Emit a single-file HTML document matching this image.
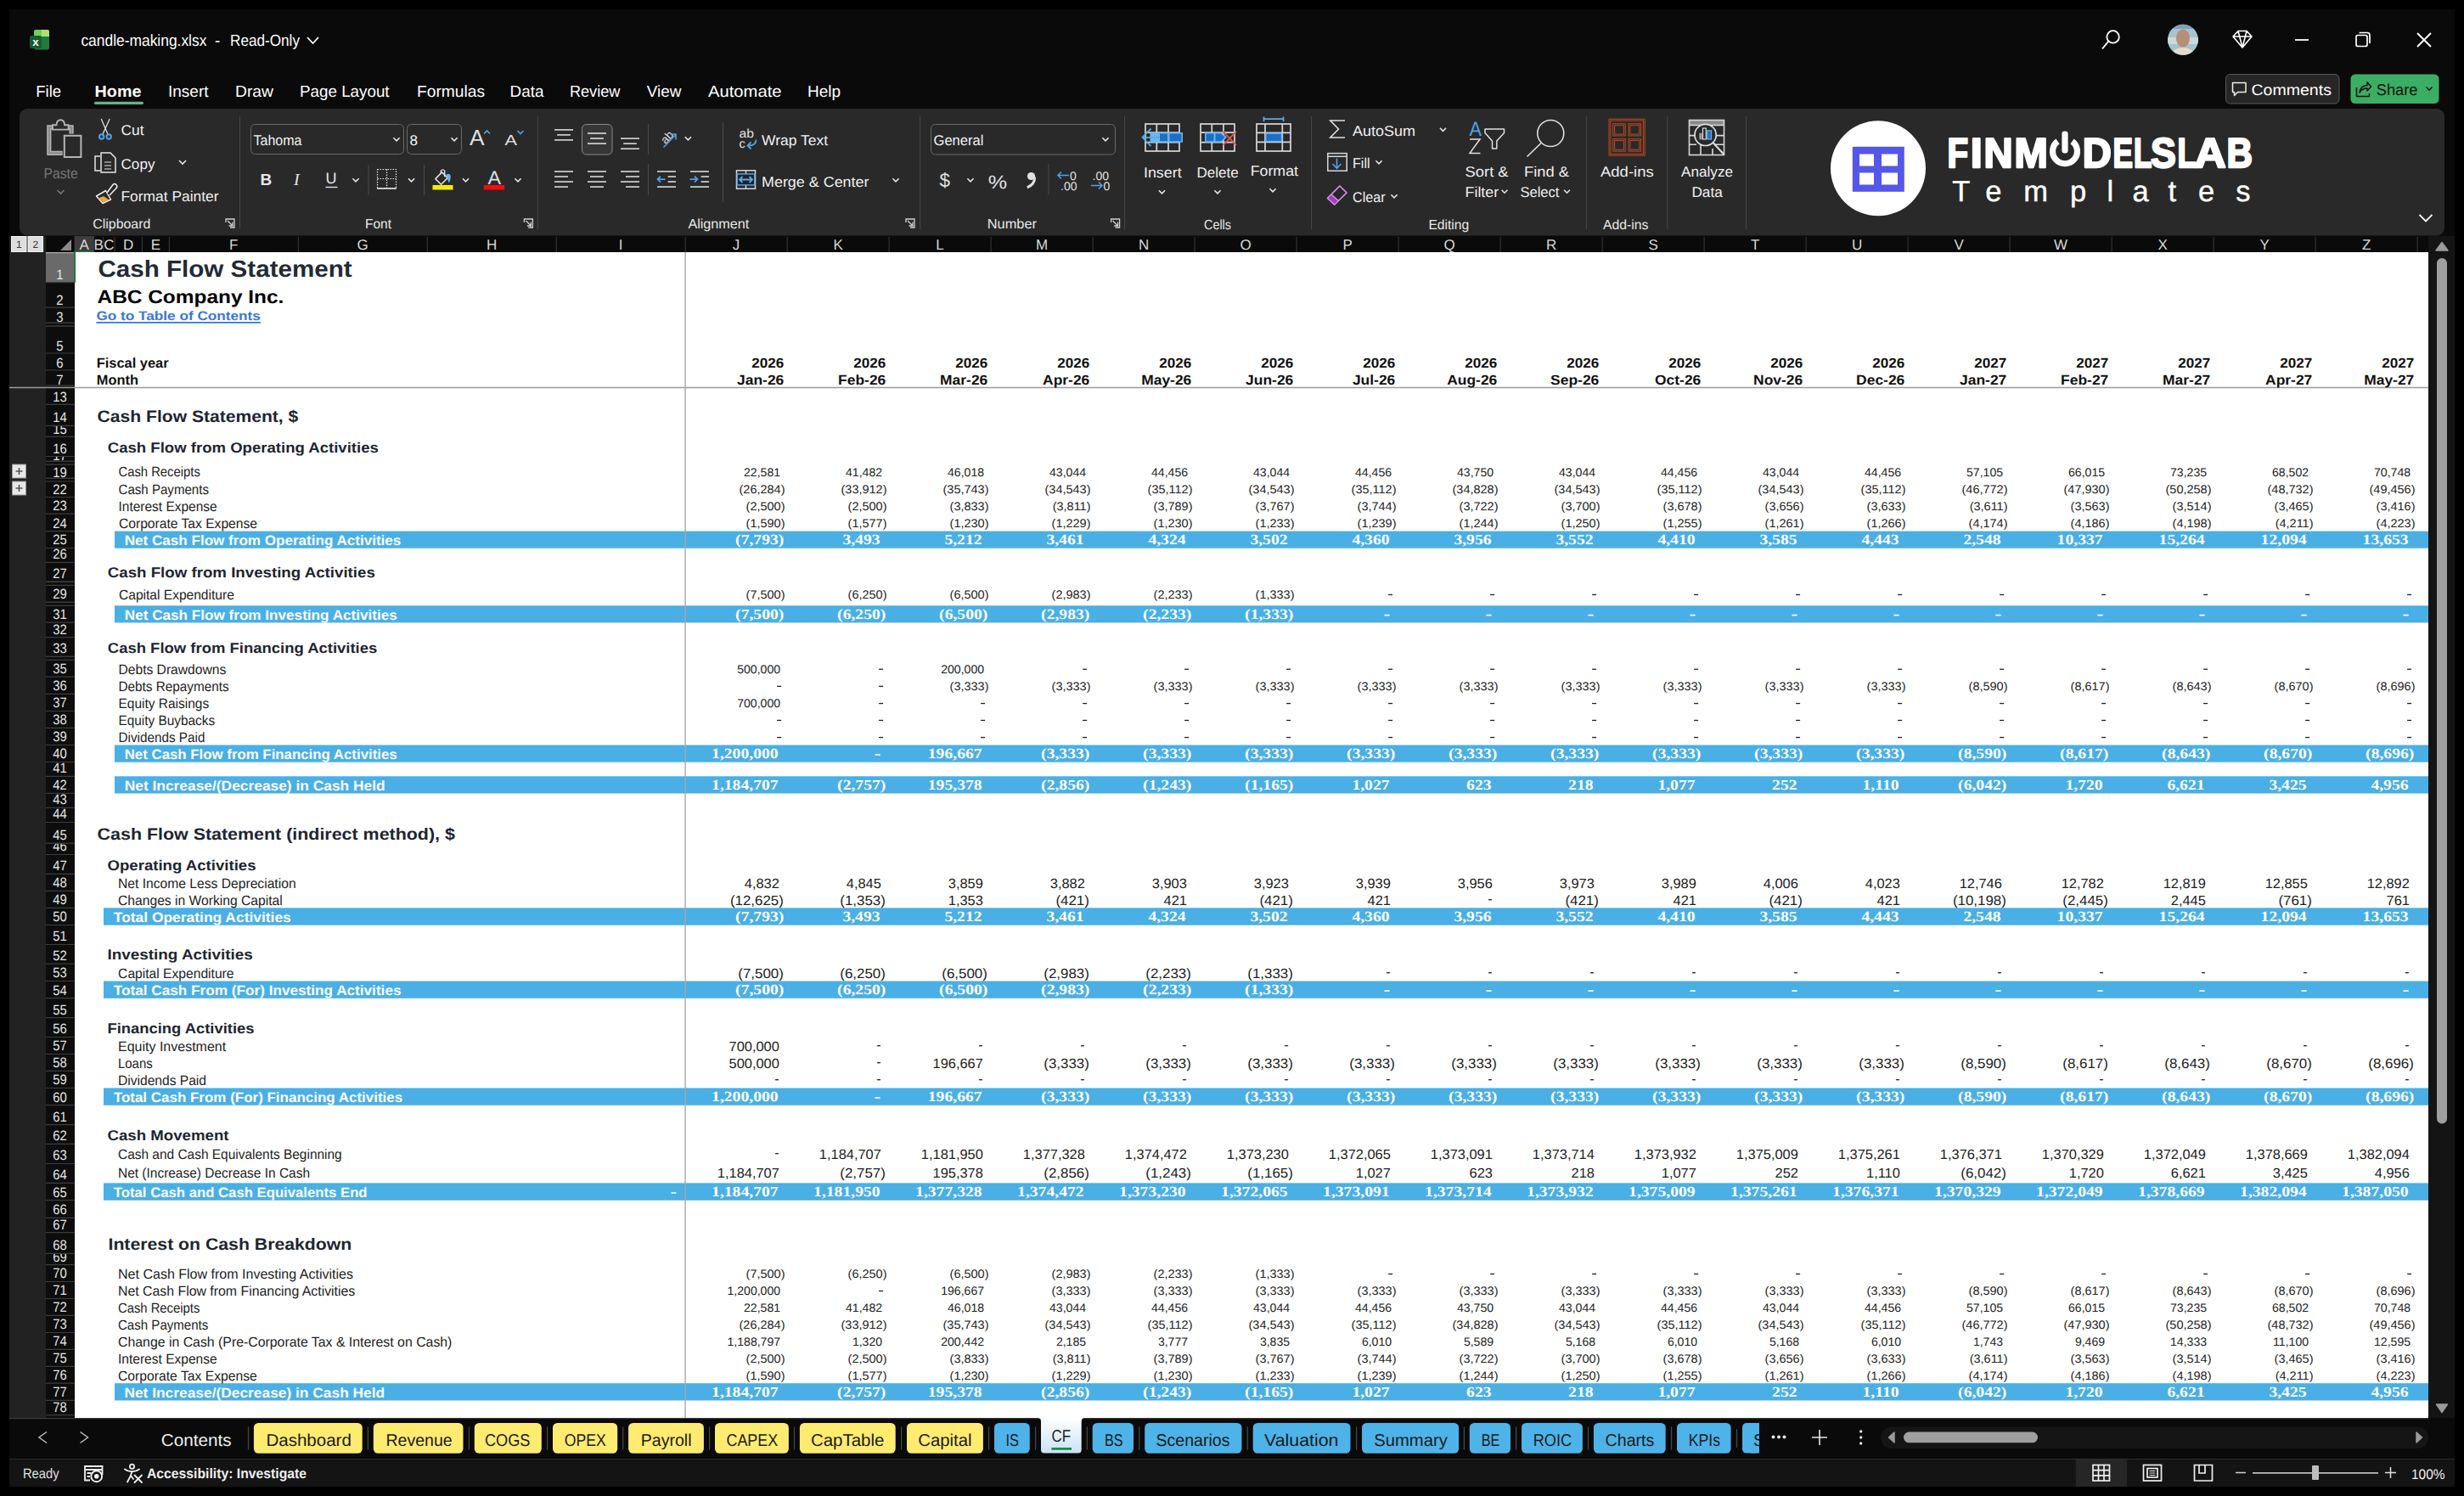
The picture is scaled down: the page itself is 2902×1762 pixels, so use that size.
<!DOCTYPE html>
<html><head><meta charset="utf-8"><title>candle-making.xlsx</title>
<style>html,body{margin:0;padding:0;background:#000;}body{width:2902px;height:1762px;overflow:hidden;}svg{display:block;}</style>
</head><body>
<svg width="2902" height="1762" viewBox="0 0 2902 1762" text-rendering="geometricPrecision">
<rect x="0" y="0" width="2902" height="1762" fill="#000"/>
<rect x="11" y="11" width="2880" height="1740" fill="#0a0a0a"/>
<g><rect x="40" y="35" width="18" height="23.5" rx="2.2" fill="#217a3c"/><path d="M42.2 35 L49 35 L49 43 L40 43 L40 37.2 Q40 35 42.2 35 Z" fill="#72cf58"/><path d="M49 35 L55.8 35 Q58 35 58 37.2 L58 43 L49 43 Z" fill="#b2e16a"/><rect x="35" y="42" width="14" height="15" rx="2.2" fill="#185c30"/><text x="42" y="54.2" font-family="'Liberation Sans'" font-size="13.5" font-weight="700" fill="#fff" text-anchor="middle">x</text></g>
<text x="95.4" y="54.0" font-family="'Liberation Sans', sans-serif" font-size="19" fill="#fff" text-anchor="start" textLength="148.0" lengthAdjust="spacingAndGlyphs">candle-making.xlsx</text>
<text x="253.0" y="54.0" font-family="'Liberation Sans', sans-serif" font-size="19" fill="#fff" text-anchor="start">-</text>
<text x="271.0" y="54.0" font-family="'Liberation Sans', sans-serif" font-size="19" fill="#fff" text-anchor="start" textLength="82.0" lengthAdjust="spacingAndGlyphs">Read-Only</text>
<path d="M362 44 L368.5 51 L375 44" stroke="#fff" stroke-width="1.8" fill="none"/>
<circle cx="2488.6" cy="43.4" r="7.2" stroke="#fff" stroke-width="1.8" fill="none"/><path d="M2483.3 48.7 L2476 57.5" stroke="#fff" stroke-width="1.9" fill="none"/>
<clipPath id="avc"><circle cx="2571" cy="46.8" r="18"/></clipPath><g clip-path="url(#avc)"><rect x="2550" y="25" width="42" height="44" fill="#a8c3cf"/><rect x="2550" y="25" width="42" height="9" fill="#7f9fc0"/><rect x="2550" y="44" width="42" height="8" fill="#c9d9dd"/><ellipse cx="2571" cy="45" rx="8" ry="10.5" fill="#b78e78"/><path d="M2555 69 Q2556 57 2571 56 Q2586 57 2587 69 Z" fill="#e3dccf"/></g>
<path d="M2630 43 L2636 36.5 L2646 36.5 L2652 43 L2641 56 Z M2630 43 L2652 43 M2636 36.5 L2641 56 L2646 36.5" stroke="#fff" stroke-width="1.6" fill="none" stroke-linejoin="round"/>
<path d="M2703 47 L2719 47" stroke="#fff" stroke-width="1.8"/>
<rect x="2775" y="41.5" width="13" height="13" rx="2" stroke="#fff" stroke-width="1.7" fill="none"/><path d="M2778.5 38.5 L2788 38.5 Q2791 38.5 2791 41.5 L2791 51" stroke="#fff" stroke-width="1.7" fill="none"/>
<path d="M2847 39 L2863 55 M2863 39 L2847 55" stroke="#fff" stroke-width="1.9"/>
<text x="42.2" y="114.0" font-family="'Liberation Sans', sans-serif" font-size="19" fill="#fff" text-anchor="start" textLength="30.0" lengthAdjust="spacingAndGlyphs">File</text>
<text x="111.6" y="114.0" font-family="'Liberation Sans', sans-serif" font-size="19" font-weight="700" fill="#fff" text-anchor="start" textLength="54.8" lengthAdjust="spacingAndGlyphs">Home</text>
<text x="198.0" y="114.0" font-family="'Liberation Sans', sans-serif" font-size="19" fill="#fff" text-anchor="start" textLength="47.5" lengthAdjust="spacingAndGlyphs">Insert</text>
<text x="277.0" y="114.0" font-family="'Liberation Sans', sans-serif" font-size="19" fill="#fff" text-anchor="start" textLength="45.0" lengthAdjust="spacingAndGlyphs">Draw</text>
<text x="353.0" y="114.0" font-family="'Liberation Sans', sans-serif" font-size="19" fill="#fff" text-anchor="start" textLength="105.6" lengthAdjust="spacingAndGlyphs">Page Layout</text>
<text x="491.0" y="114.0" font-family="'Liberation Sans', sans-serif" font-size="19" fill="#fff" text-anchor="start" textLength="80.0" lengthAdjust="spacingAndGlyphs">Formulas</text>
<text x="600.6" y="114.0" font-family="'Liberation Sans', sans-serif" font-size="19" fill="#fff" text-anchor="start" textLength="39.8" lengthAdjust="spacingAndGlyphs">Data</text>
<text x="670.9" y="114.0" font-family="'Liberation Sans', sans-serif" font-size="19" fill="#fff" text-anchor="start" textLength="59.6" lengthAdjust="spacingAndGlyphs">Review</text>
<text x="761.8" y="114.0" font-family="'Liberation Sans', sans-serif" font-size="19" fill="#fff" text-anchor="start" textLength="40.6" lengthAdjust="spacingAndGlyphs">View</text>
<text x="834.0" y="114.0" font-family="'Liberation Sans', sans-serif" font-size="19" fill="#fff" text-anchor="start" textLength="86.5" lengthAdjust="spacingAndGlyphs">Automate</text>
<text x="951.0" y="114.0" font-family="'Liberation Sans', sans-serif" font-size="19" fill="#fff" text-anchor="start" textLength="39.0" lengthAdjust="spacingAndGlyphs">Help</text>
<rect x="111" y="119.8" width="58" height="3.2" rx="1.6" fill="#5cb88a"/>
<rect x="2621.5" y="87.5" width="133.5" height="34.5" rx="5" fill="#262626" stroke="#5a5a5a" stroke-width="1"/>
<path d="M2629.5 97.5 L2645 97.5 L2645 108.5 L2635.5 108.5 L2631.5 112.5 L2631.5 108.5 L2629.5 108.5 Z" stroke="#f0f0f0" stroke-width="1.5" fill="none" stroke-linejoin="round"/>
<text x="2651.5" y="112.0" font-family="'Liberation Sans', sans-serif" font-size="18" fill="#fff" text-anchor="start" textLength="94.4" lengthAdjust="spacingAndGlyphs">Comments</text>
<rect x="2768.5" y="87.5" width="104" height="34.5" rx="5.5" fill="#3aaf64"/>
<path d="M2775.5 103 L2775.5 113.5 L2790.5 113.5 L2790.5 110 M2779 109 Q2780 101 2788 100.5 L2788 96.8 L2792.5 102 L2788 107 L2788 104 Q2782 104 2779 109 Z" stroke="#111" stroke-width="1.5" fill="none" stroke-linejoin="round"/>
<text x="2798.7" y="112.0" font-family="'Liberation Sans', sans-serif" font-size="18.5" fill="#111" text-anchor="start" textLength="48.8" lengthAdjust="spacingAndGlyphs">Share</text>
<path d="M2857.5 102.5 L2861 106 L2864.5 102.5" stroke="#111" stroke-width="1.6" fill="none"/>
<rect x="23" y="128" width="2856" height="149.5" rx="9" fill="#292929"/>
<path d="M73.7 180.3 L57.8 180.3 L57.8 149.8 L84.1 149.8 L84.1 157.5" stroke="#b4b4b4" stroke-width="5.2" fill="none"/><path d="M73.7 180.3 L57.8 180.3 L57.8 149.8 L84.1 149.8 L84.1 157.5" stroke="#8a8a8a" stroke-width="2.2" fill="none"/><path d="M62 152.6 L62 147.2 L66.5 147.2 Q66.8 141.2 71.3 141.2 Q75.8 141.2 76.1 147.2 L80.6 147.2 L80.6 152.6 Z" stroke="#b4b4b4" stroke-width="1.9" fill="#292929"/><rect x="75.8" y="159.8" width="19.6" height="25.2" stroke="#b4b4b4" stroke-width="2" fill="#292929"/>
<text x="51.5" y="210.0" font-family="'Liberation Sans', sans-serif" font-size="17" fill="#777" text-anchor="start" textLength="40.2" lengthAdjust="spacingAndGlyphs">Paste</text>
<path d="M67.5 224.0 L71.5 228.0 L75.5 224.0" stroke="#777" stroke-width="1.6" fill="none"/>
<g stroke="#e0e0e0" stroke-width="1.3" fill="none"><path d="M119.2 140 L127 158 M129.2 140 L121 158"/></g><g stroke="#4ea3e6" stroke-width="1.9" fill="#1d3550"><circle cx="119.7" cy="161" r="2.7"/><circle cx="128.2" cy="161" r="2.7"/></g>
<text x="142.5" y="159.0" font-family="'Liberation Sans', sans-serif" font-size="17" fill="#f0f0f0" text-anchor="start" textLength="27.0" lengthAdjust="spacingAndGlyphs">Cut</text>
<g stroke="#e6e6e6" stroke-width="1.5" fill="none"><path d="M118 184 L112 184 L112 201 L118 201"/><path d="M119 180 L130 180 L136 186 L136 203 L119 203 Z"/><path d="M123 191 L131 191 M123 195 L131 195 M123 199 L131 199" stroke-width="1.2"/></g>
<text x="142.5" y="198.5" font-family="'Liberation Sans', sans-serif" font-size="17" fill="#f0f0f0" text-anchor="start" textLength="40.0" lengthAdjust="spacingAndGlyphs">Copy</text>
<path d="M211 189.0 L215 193.0 L219 189.0" stroke="#e6e6e6" stroke-width="1.6" fill="none"/>
<path d="M113.5 231 L124.5 224.5 L130.5 235 L121 239.5 Z" fill="#292929" stroke="#f0f0f0" stroke-width="1.5" stroke-linejoin="round"/><path d="M115.5 233.5 L122 231 L128.5 235.5 L121.5 238.5 Z" fill="#e8a83a"/><path d="M126 227 L133 217.5 Q135 215.5 136.8 217.5 L137.5 218.5 Q138.5 220.3 136.6 222 L129 230" stroke="#f0f0f0" stroke-width="1.5" fill="#292929" stroke-linejoin="round"/>
<text x="142.5" y="237.0" font-family="'Liberation Sans', sans-serif" font-size="17" fill="#f0f0f0" text-anchor="start" textLength="115.0" lengthAdjust="spacingAndGlyphs">Format Painter</text>
<text x="109.3" y="269.0" font-family="'Liberation Sans', sans-serif" font-size="16" fill="#e8e8e8" text-anchor="start" textLength="68.0" lengthAdjust="spacingAndGlyphs">Clipboard</text>
<path d="M265 257 L277 257 L277 269 L265 269 Z" stroke="none" fill="none"/><path d="M266 262 L266 258 L276 258 L276 268 L271 268" stroke="#d0d0d0" stroke-width="1.3" fill="none"/><path d="M268 260 L274 266 M274 261.5 L274 266 L269.5 266" stroke="#d0d0d0" stroke-width="1.3" fill="none"/>
<path d="M282.5 137 L282.5 270" stroke="#474747" stroke-width="1"/>
<rect x="295.5" y="146.5" width="180" height="35" rx="5" fill="#292929" stroke="#6a6a6a" stroke-width="1"/>
<text x="298.5" y="170.5" font-family="'Liberation Sans', sans-serif" font-size="17" fill="#f2f2f2" text-anchor="start" textLength="57.0" lengthAdjust="spacingAndGlyphs">Tahoma</text>
<path d="M463.4 162.2 L467 165.8 L470.6 162.2" stroke="#e6e6e6" stroke-width="1.6" fill="none"/>
<rect x="479.5" y="146.5" width="64" height="35" rx="5" fill="#292929" stroke="#6a6a6a" stroke-width="1"/>
<text x="482.5" y="170.5" font-family="'Liberation Sans', sans-serif" font-size="17" fill="#f2f2f2" text-anchor="start">8</text>
<path d="M531.4 162.2 L535 165.8 L538.6 162.2" stroke="#e6e6e6" stroke-width="1.6" fill="none"/>
<text x="553.0" y="171.3" font-family="'Liberation Sans', sans-serif" font-size="26" fill="#e0e0e0" text-anchor="start" textLength="17.5" lengthAdjust="spacingAndGlyphs">A</text>
<path d="M570 157.5 L573.5 154 L577 157.5" stroke="#4ea3e6" stroke-width="1.7" fill="none"/>
<text x="594.5" y="171.3" font-family="'Liberation Sans', sans-serif" font-size="17.5" fill="#e0e0e0" text-anchor="start" textLength="14.5" lengthAdjust="spacingAndGlyphs">A</text>
<path d="M609.5 154 L613 157.5 L616.5 154" stroke="#4ea3e6" stroke-width="1.7" fill="none"/>
<text x="306.5" y="218.0" font-family="'Liberation Sans', sans-serif" font-size="19" font-weight="700" fill="#e6e6e6" text-anchor="start">B</text>
<text x="346" y="218" font-family="'Liberation Serif', serif" font-size="20" font-style="italic" fill="#e6e6e6">I</text>
<text x="383.5" y="216.0" font-family="'Liberation Sans', sans-serif" font-size="18" fill="#e6e6e6" text-anchor="start">U</text>
<path d="M383.5 220.5 L397.5 220.5" stroke="#e6e6e6" stroke-width="1.4"/>
<path d="M415.4 210.2 L419 213.8 L422.6 210.2" stroke="#e6e6e6" stroke-width="1.6" fill="none"/>
<path d="M434 194 L434 230" stroke="#4a4a4a" stroke-width="1"/>
<g stroke="#e6e6e6" stroke-width="1.2" fill="none" stroke-dasharray="1.5 1.5"><rect x="444.5" y="199.5" width="22" height="22"/><path d="M455.5 199.5 L455.5 221.5 M444.5 210.5 L466.5 210.5"/></g><path d="M444 222 L467 222" stroke="#e6e6e6" stroke-width="1.6"/>
<path d="M480.9 210.2 L484.5 213.8 L488.1 210.2" stroke="#e6e6e6" stroke-width="1.6" fill="none"/>
<path d="M499.5 194 L499.5 230" stroke="#4a4a4a" stroke-width="1"/>
<path d="M512.8 210.6 L520.5 202.9 L527.2 209.6 L519.5 217.3 Z" stroke="#e0e0e0" stroke-width="1.5" fill="none" stroke-linejoin="round"/><path d="M519.3 204.2 L519.3 201.2 Q521.5 198.6 523.7 201.2 L523.7 208.3" stroke="#e0e0e0" stroke-width="1.4" fill="none"/><path d="M525.3 206.2 Q528.8 203.2 530.6 206.8 Q531.2 211.8 528.6 215.6 Q527.4 210.8 525.3 206.2 Z" fill="#6fb5ec"/><rect x="509.5" y="218" width="24" height="5.5" fill="#f2ee00"/>
<path d="M544.9 210.2 L548.5 213.8 L552.1 210.2" stroke="#e6e6e6" stroke-width="1.6" fill="none"/>
<text x="574.5" y="216.7" font-family="'Liberation Sans', sans-serif" font-size="22.5" fill="#e0e0e0" text-anchor="start" textLength="15.5" lengthAdjust="spacingAndGlyphs">A</text>
<rect x="569.8" y="218" width="24.4" height="5.5" fill="#f30d0d"/>
<path d="M606.4 210.2 L610 213.8 L613.6 210.2" stroke="#e6e6e6" stroke-width="1.6" fill="none"/>
<text x="430.0" y="269.0" font-family="'Liberation Sans', sans-serif" font-size="16" fill="#e8e8e8" text-anchor="start" textLength="31.0" lengthAdjust="spacingAndGlyphs">Font</text>
<path d="M616.4 257 L628.4 257 L628.4 269 L616.4 269 Z" stroke="none" fill="none"/><path d="M617.4 262 L617.4 258 L627.4 258 L627.4 268 L622.4 268" stroke="#d0d0d0" stroke-width="1.3" fill="none"/><path d="M619.4 260 L625.4 266 M625.4 261.5 L625.4 266 L620.9 266" stroke="#d0d0d0" stroke-width="1.3" fill="none"/>
<path d="M633.4 137 L633.4 270" stroke="#474747" stroke-width="1"/>
<path d="M653.0 152.9 L675.0 152.9" stroke="#e6e6e6" stroke-width="1.5"/>
<path d="M656.2 158.9 L671.8000000000001 158.9" stroke="#e6e6e6" stroke-width="1.5"/>
<path d="M653.0 164.9 L675.0 164.9" stroke="#e6e6e6" stroke-width="1.5"/>
<rect x="685.5" y="146.5" width="35.5" height="35.5" rx="5" fill="#363636" stroke="#8a8a8a" stroke-width="1"/>
<path d="M692.0 157.0 L714.0 157.0" stroke="#e6e6e6" stroke-width="1.5"/>
<path d="M695.2 163.05 L710.8000000000001 163.05" stroke="#e6e6e6" stroke-width="1.5"/>
<path d="M692.0 169.1 L714.0 169.1" stroke="#e6e6e6" stroke-width="1.5"/>
<path d="M731.0 163.1 L753.0 163.1" stroke="#e6e6e6" stroke-width="1.5"/>
<path d="M734.2 169.15 L749.8000000000001 169.15" stroke="#e6e6e6" stroke-width="1.5"/>
<path d="M731.0 175.2 L753.0 175.2" stroke="#e6e6e6" stroke-width="1.5"/>
<path d="M763.5 146 L763.5 182" stroke="#4a4a4a" stroke-width="1"/>
<text x="786" y="166" font-family="'Liberation Sans'" font-size="13.5" fill="#e0e0e0" text-anchor="middle" transform="rotate(-48 786 162)">ab</text><path d="M781.5 173.5 L796 158.5 M789.5 158 L796 158 L796 164.5" stroke="#4ea3e6" stroke-width="1.6" fill="none"/>
<path d="M806.8 161.2 L810.4 164.8 L814.0 161.2" stroke="#e6e6e6" stroke-width="1.6" fill="none"/>
<path d="M851.6 144 L851.6 238" stroke="#4a4a4a" stroke-width="1"/>
<text x="870.5" y="162.3" font-family="'Liberation Sans'" font-size="14.5" fill="#e0e0e0" textLength="17.5" lengthAdjust="spacingAndGlyphs">ab</text><text x="870.5" y="174" font-family="'Liberation Sans'" font-size="14.5" fill="#e0e0e0">c</text><path d="M890.5 164.5 Q890.5 171.5 882 171.5 L880.5 171.5 M884.5 167.5 L880.5 171.5 L884.5 175.5" stroke="#4ea3e6" stroke-width="1.8" fill="none"/>
<text x="897.0" y="171.0" font-family="'Liberation Sans', sans-serif" font-size="17" fill="#f0f0f0" text-anchor="start" textLength="78.0" lengthAdjust="spacingAndGlyphs">Wrap Text</text>
<path d="M653 202.0 L675 202.0" stroke="#e6e6e6" stroke-width="1.5"/>
<path d="M653 208.03 L669 208.03" stroke="#e6e6e6" stroke-width="1.5"/>
<path d="M653 214.06 L675 214.06" stroke="#e6e6e6" stroke-width="1.5"/>
<path d="M653 220.09 L669 220.09" stroke="#e6e6e6" stroke-width="1.5"/>
<path d="M692.0 202.0 L714.0 202.0" stroke="#e6e6e6" stroke-width="1.5"/>
<path d="M695.0 208.03 L711.0 208.03" stroke="#e6e6e6" stroke-width="1.5"/>
<path d="M692.0 214.06 L714.0 214.06" stroke="#e6e6e6" stroke-width="1.5"/>
<path d="M695.0 220.09 L711.0 220.09" stroke="#e6e6e6" stroke-width="1.5"/>
<path d="M731 202.0 L753 202.0" stroke="#e6e6e6" stroke-width="1.5"/>
<path d="M737 208.03 L753 208.03" stroke="#e6e6e6" stroke-width="1.5"/>
<path d="M731 214.06 L753 214.06" stroke="#e6e6e6" stroke-width="1.5"/>
<path d="M737 220.09 L753 220.09" stroke="#e6e6e6" stroke-width="1.5"/>
<path d="M763.5 193 L763.5 230" stroke="#4a4a4a" stroke-width="1"/>
<path d="M774 202.0 L796 202.0" stroke="#e6e6e6" stroke-width="1.5"/>
<path d="M786.6 208.03 L796.0 208.03" stroke="#e6e6e6" stroke-width="1.5"/>
<path d="M786.6 214.06 L796.0 214.06" stroke="#e6e6e6" stroke-width="1.5"/>
<path d="M774 220.09 L796 220.09" stroke="#e6e6e6" stroke-width="1.5"/>
<path d="M783.5 211.1 L774.5 211.1 M778 207.6 L774.5 211.1 L778 214.6" stroke="#4ea3e6" stroke-width="1.7" fill="none"/>
<path d="M813 202.0 L835 202.0" stroke="#e6e6e6" stroke-width="1.5"/>
<path d="M825.6 208.03 L835.0 208.03" stroke="#e6e6e6" stroke-width="1.5"/>
<path d="M825.6 214.06 L835.0 214.06" stroke="#e6e6e6" stroke-width="1.5"/>
<path d="M813 220.09 L835 220.09" stroke="#e6e6e6" stroke-width="1.5"/>
<path d="M812.5 211.1 L821.5 211.1 M818 207.6 L821.5 211.1 L818 214.6" stroke="#4ea3e6" stroke-width="1.7" fill="none"/>
<g stroke="#d8d8d8" stroke-width="1.5" fill="none"><rect x="867.5" y="200.8" width="22" height="21.5"/><path d="M878.5 200.8 L878.5 204.8 M878.5 218 L878.5 222.3"/></g><rect x="868.3" y="204.9" width="20.4" height="13" fill="#222" stroke="#4ea3e6" stroke-width="1.5"/><path d="M871 211.5 L886 211.5 M874.5 208 L871 211.5 L874.5 215 M882.5 208 L886 211.5 L882.5 215" stroke="#5aaae6" stroke-width="1.8" fill="none"/>
<text x="897.0" y="219.5" font-family="'Liberation Sans', sans-serif" font-size="17" fill="#f0f0f0" text-anchor="start" textLength="126.5" lengthAdjust="spacingAndGlyphs">Merge &amp; Center</text>
<path d="M1051.4 210.2 L1055 213.8 L1058.6 210.2" stroke="#e6e6e6" stroke-width="1.6" fill="none"/>
<text x="810.4" y="269.0" font-family="'Liberation Sans', sans-serif" font-size="16" fill="#e8e8e8" text-anchor="start" textLength="71.9" lengthAdjust="spacingAndGlyphs">Alignment</text>
<path d="M1066 257 L1078 257 L1078 269 L1066 269 Z" stroke="none" fill="none"/><path d="M1067 262 L1067 258 L1077 258 L1077 268 L1072 268" stroke="#d0d0d0" stroke-width="1.3" fill="none"/><path d="M1069 260 L1075 266 M1075 261.5 L1075 266 L1070.5 266" stroke="#d0d0d0" stroke-width="1.3" fill="none"/>
<path d="M1083.7 137 L1083.7 270" stroke="#474747" stroke-width="1"/>
<rect x="1096.5" y="146.5" width="217" height="35.5" rx="5" fill="#292929" stroke="#6a6a6a" stroke-width="1"/>
<text x="1099.5" y="171.0" font-family="'Liberation Sans', sans-serif" font-size="17" fill="#f2f2f2" text-anchor="start" textLength="59.0" lengthAdjust="spacingAndGlyphs">General</text>
<path d="M1298.4 162.2 L1302 165.8 L1305.6 162.2" stroke="#e6e6e6" stroke-width="1.6" fill="none"/>
<text x="1106.5" y="219.5" font-family="'Liberation Sans', sans-serif" font-size="23" fill="#e0e0e0" text-anchor="start" textLength="12.5" lengthAdjust="spacingAndGlyphs" font-weight="300">$</text>
<path d="M1139.4 210.2 L1143 213.8 L1146.6 210.2" stroke="#e6e6e6" stroke-width="1.6" fill="none"/>
<text x="1163.8" y="222.0" font-family="'Liberation Sans', sans-serif" font-size="22" fill="#e0e0e0" text-anchor="start" textLength="22.4" lengthAdjust="spacingAndGlyphs">%</text>
<circle cx="1214.5" cy="207.5" r="4.6" fill="#e0e0e0"/><path d="M1218.6 208.5 Q1219 217 1209.8 220.8" stroke="#e0e0e0" stroke-width="3" fill="none"/>
<path d="M1235 193 L1235 230" stroke="#4a4a4a" stroke-width="1"/>
<text x="1260.0" y="211.5" font-family="'Liberation Sans', sans-serif" font-size="14" fill="#e0e0e0" text-anchor="start">0</text>
<text x="1249.0" y="223.5" font-family="'Liberation Sans', sans-serif" font-size="14" fill="#e0e0e0" text-anchor="start">.00</text>
<path d="M1259 206.5 L1246 206.5 M1250 202.5 L1246 206.5 L1250 210.5" stroke="#4ea3e6" stroke-width="1.6" fill="none"/>
<text x="1286.5" y="211.5" font-family="'Liberation Sans', sans-serif" font-size="14" fill="#e0e0e0" text-anchor="start">.00</text>
<text x="1299.5" y="223.5" font-family="'Liberation Sans', sans-serif" font-size="14" fill="#e0e0e0" text-anchor="start">0</text>
<path d="M1285 218.5 L1298 218.5 M1294 214.5 L1298 218.5 L1294 222.5" stroke="#4ea3e6" stroke-width="1.6" fill="none"/>
<text x="1162.7" y="269.0" font-family="'Liberation Sans', sans-serif" font-size="16" fill="#e8e8e8" text-anchor="start" textLength="58.3" lengthAdjust="spacingAndGlyphs">Number</text>
<path d="M1307.6 257 L1319.6 257 L1319.6 269 L1307.6 269 Z" stroke="none" fill="none"/><path d="M1308.6 262 L1308.6 258 L1318.6 258 L1318.6 268 L1313.6 268" stroke="#d0d0d0" stroke-width="1.3" fill="none"/><path d="M1310.6 260 L1316.6 266 M1316.6 261.5 L1316.6 266 L1312.1 266" stroke="#d0d0d0" stroke-width="1.3" fill="none"/>
<path d="M1324.6 137 L1324.6 270" stroke="#474747" stroke-width="1"/>
<g stroke="#d8d8d8" stroke-width="1.7" fill="none"><rect x="1349" y="146" width="40" height="32"/><path d="M1362.3 146 L1362.3 178 M1376 146 L1376 178 M1349 156.2 L1389 156.2 M1349 167.6 L1389 167.6"/></g><rect x="1354.5" y="156" width="38.5" height="11.7" fill="#6cb6ee"/><rect x="1366" y="157.5" width="9" height="8.7" fill="#1b6fc8"/><rect x="1377.5" y="157.5" width="14" height="8.7" fill="#1b6fc8"/><path d="M1365 161.8 L1346 161.8 M1355.5 151.5 L1345.5 161.8 L1355.5 172" stroke="#5aaae6" stroke-width="1.8" fill="none"/>
<text x="1347.0" y="209.0" font-family="'Liberation Sans', sans-serif" font-size="17" fill="#f0f0f0" text-anchor="start" textLength="44.6" lengthAdjust="spacingAndGlyphs">Insert</text>
<path d="M1364.9 224.2 L1368.5 227.8 L1372.1 224.2" stroke="#e6e6e6" stroke-width="1.6" fill="none"/>
<g stroke="#d8d8d8" stroke-width="1.7" fill="none"><rect x="1414" y="146" width="40" height="32"/><path d="M1427.3 146 L1427.3 178 M1441 146 L1441 178 M1414 156.2 L1454 156.2 M1414 167.6 L1454 167.6"/></g><path d="M1419 156 L1439 156 L1445 161.8 L1439 167.7 L1419 167.7 Z" fill="#6cb6ee"/><rect x="1420.5" y="157.5" width="9" height="8.7" fill="#1b6fc8"/><path d="M1431.5 157.5 L1438 157.5 L1442.5 161.8 L1438 166.2 L1431.5 166.2 Z" fill="#1b6fc8"/><path d="M1440.5 155 L1456 170.8 M1456 155 L1440.5 170.8" stroke="#e0574f" stroke-width="1.9" fill="none"/>
<text x="1409.5" y="209.0" font-family="'Liberation Sans', sans-serif" font-size="17" fill="#f0f0f0" text-anchor="start" textLength="49.3" lengthAdjust="spacingAndGlyphs">Delete</text>
<path d="M1430.4 224.2 L1434 227.8 L1437.6 224.2" stroke="#e6e6e6" stroke-width="1.6" fill="none"/>
<g stroke="#d8d8d8" stroke-width="1.7" fill="none"><rect x="1480" y="146" width="40" height="32"/><path d="M1490 146 L1490 178 M1510.3 146 L1510.3 178 M1480 156.4 L1520 156.4 M1480 167.3 L1520 167.3"/></g><rect x="1490" y="156.4" width="20.3" height="10.9" fill="#6cb6ee"/><rect x="1491.5" y="157.8" width="17.3" height="8.1" fill="#1b6fc8"/><path d="M1488.5 140.2 L1511.5 140.2 M1488.5 137.5 L1488.5 143 M1511.5 137.5 L1511.5 143" stroke="#5aaae6" stroke-width="1.8" fill="none"/>
<text x="1472.7" y="207.0" font-family="'Liberation Sans', sans-serif" font-size="17" fill="#f0f0f0" text-anchor="start" textLength="56.3" lengthAdjust="spacingAndGlyphs">Format</text>
<path d="M1495.4 222.2 L1499 225.8 L1502.6 222.2" stroke="#e6e6e6" stroke-width="1.6" fill="none"/>
<text x="1418.0" y="270.0" font-family="'Liberation Sans', sans-serif" font-size="16" fill="#e8e8e8" text-anchor="start" textLength="32.0" lengthAdjust="spacingAndGlyphs">Cells</text>
<path d="M1544.5 137 L1544.5 270" stroke="#474747" stroke-width="1"/>
<path d="M1584 142 L1566.8 142 L1576.5 152 L1566.8 162 L1584 162" stroke="#e0e0e0" stroke-width="1.6" fill="none"/>
<text x="1593.0" y="159.5" font-family="'Liberation Sans', sans-serif" font-size="17" fill="#f0f0f0" text-anchor="start" textLength="74.0" lengthAdjust="spacingAndGlyphs">AutoSum</text>
<path d="M1695.9 150.7 L1699.5 154.3 L1703.1 150.7" stroke="#e6e6e6" stroke-width="1.6" fill="none"/>
<rect x="1563.8" y="180.6" width="22.4" height="20.6" stroke="#d8d8d8" stroke-width="1.5" fill="none"/><path d="M1563.8 184.3 L1586.2 184.3" stroke="#d8d8d8" stroke-width="1.5"/><path d="M1574.5 186.5 L1574.5 198 M1569.5 193 L1574.5 198.3 L1579.5 193" stroke="#4ea3e6" stroke-width="1.6" fill="none"/>
<text x="1593.0" y="197.5" font-family="'Liberation Sans', sans-serif" font-size="17" fill="#f0f0f0" text-anchor="start" textLength="20.6" lengthAdjust="spacingAndGlyphs">Fill</text>
<path d="M1620.4 189.2 L1624 192.8 L1627.6 189.2" stroke="#e6e6e6" stroke-width="1.6" fill="none"/>
<path d="M1563.5 233.4 L1577.9 219 L1586 227 L1571.8 241 Z" stroke="#d890ea" stroke-width="1.7" fill="none" stroke-linejoin="round"/><path d="M1564.5 233.4 L1568.2 229.4 L1575.9 235.6 L1571.8 239.8 Z" fill="#a63cc2"/><path d="M1568.2 229.2 L1576 236.2" stroke="#d890ea" stroke-width="1.5"/>
<text x="1593.0" y="237.5" font-family="'Liberation Sans', sans-serif" font-size="17" fill="#f0f0f0" text-anchor="start" textLength="38.5" lengthAdjust="spacingAndGlyphs">Clear</text>
<path d="M1638.4 229.2 L1642 232.8 L1645.6 229.2" stroke="#e6e6e6" stroke-width="1.6" fill="none"/>
<text x="1730.4" y="159.7" font-family="'Liberation Sans', sans-serif" font-size="24" fill="#4ea3e6" text-anchor="start" textLength="14.5" lengthAdjust="spacingAndGlyphs">A</text>
<path d="M1731 164 L1743 164 L1731 180.5 L1743.5 180.5" stroke="#e0e0e0" stroke-width="1.5" fill="none"/>
<path d="M1749 152 L1771.5 152 L1771.5 156.5 L1762.8 166 L1762.8 175 L1757.5 175 L1757.5 166 L1749 156.5 Z" stroke="#e0e0e0" stroke-width="1.5" fill="none" stroke-linejoin="round"/>
<text x="1725.6" y="208.0" font-family="'Liberation Sans', sans-serif" font-size="17" fill="#f0f0f0" text-anchor="start" textLength="51.0" lengthAdjust="spacingAndGlyphs">Sort &amp;</text>
<text x="1725.6" y="232.0" font-family="'Liberation Sans', sans-serif" font-size="17" fill="#f0f0f0" text-anchor="start" textLength="39.5" lengthAdjust="spacingAndGlyphs">Filter</text>
<path d="M1768.6 223.8 L1772 227.2 L1775.4 223.8" stroke="#e6e6e6" stroke-width="1.6" fill="none"/>
<circle cx="1826.3" cy="157" r="15.5" stroke="#e0e0e0" stroke-width="1.6" fill="none"/><path d="M1815 168.5 L1798.5 184.5" stroke="#e0e0e0" stroke-width="1.7"/>
<text x="1795.0" y="208.0" font-family="'Liberation Sans', sans-serif" font-size="17" fill="#f0f0f0" text-anchor="start" textLength="53.0" lengthAdjust="spacingAndGlyphs">Find &amp;</text>
<text x="1790.4" y="232.0" font-family="'Liberation Sans', sans-serif" font-size="17" fill="#f0f0f0" text-anchor="start" textLength="46.0" lengthAdjust="spacingAndGlyphs">Select</text>
<path d="M1842.1 223.8 L1845.5 227.2 L1848.9 223.8" stroke="#e6e6e6" stroke-width="1.6" fill="none"/>
<text x="1682.4" y="270.0" font-family="'Liberation Sans', sans-serif" font-size="16" fill="#e8e8e8" text-anchor="start" textLength="47.8" lengthAdjust="spacingAndGlyphs">Editing</text>
<path d="M1868.4 137 L1868.4 270" stroke="#474747" stroke-width="1"/>
<g stroke="#c94a20" stroke-width="2.8" fill="none"><rect x="1896" y="141.2" width="40.3" height="41.1"/><rect x="1900.7" y="146.7" width="12.6" height="12.3"/><rect x="1919" y="146.7" width="12.6" height="12.3"/><rect x="1900.7" y="164.6" width="12.6" height="12.6"/><rect x="1919" y="164.6" width="12.6" height="12.6"/></g>
<g stroke="#292929" stroke-width="0.9" fill="none"><rect x="1896" y="141.2" width="40.3" height="41.1"/><rect x="1900.7" y="146.7" width="12.6" height="12.3"/><rect x="1919" y="146.7" width="12.6" height="12.3"/><rect x="1900.7" y="164.6" width="12.6" height="12.6"/><rect x="1919" y="164.6" width="12.6" height="12.6"/></g>
<text x="1885.0" y="208.0" font-family="'Liberation Sans', sans-serif" font-size="17" fill="#f0f0f0" text-anchor="start" textLength="62.7" lengthAdjust="spacingAndGlyphs">Add-ins</text>
<text x="1888.0" y="270.0" font-family="'Liberation Sans', sans-serif" font-size="16" fill="#e8e8e8" text-anchor="start" textLength="53.5" lengthAdjust="spacingAndGlyphs">Add-ins</text>
<path d="M1963.7 137 L1963.7 270" stroke="#474747" stroke-width="1"/>
<rect x="1989.5" y="141.5" width="41" height="5.5" fill="#8a8a8a"/><g stroke="#d8d8d8" stroke-width="1.6" fill="none"><rect x="1989.5" y="141.5" width="41" height="41"/><path d="M1989.5 147.5 L2030.5 147.5 M1989.5 159.6 L1996 159.6 M2021 159.6 L2030.5 159.6 M1989.5 170.2 L1998 170.2 M2019 170.2 L2030.5 170.2 M2003 170.2 L2003 182.5 M2017 175 L2017 182.5"/></g><circle cx="2008.6" cy="158.9" r="12.6" fill="#292929" stroke="#e0e0e0" stroke-width="1.7"/><path d="M2017.5 168 L2030 181.5" stroke="#e0e0e0" stroke-width="2"/><rect x="2001.3" y="156.7" width="3.4" height="7.6" fill="#9a9a9a"/><rect x="2005.5" y="151" width="3.8" height="13" fill="#292929" stroke="#e8e8e8" stroke-width="1.1"/><rect x="2010.8" y="153.8" width="4.8" height="10.2" fill="#1d72c9" stroke="#6cb6ee" stroke-width="1.1"/>
<text x="1980.0" y="208.0" font-family="'Liberation Sans', sans-serif" font-size="17" fill="#f0f0f0" text-anchor="start" textLength="61.0" lengthAdjust="spacingAndGlyphs">Analyze</text>
<text x="1992.4" y="232.0" font-family="'Liberation Sans', sans-serif" font-size="17" fill="#f0f0f0" text-anchor="start" textLength="36.4" lengthAdjust="spacingAndGlyphs">Data</text>
<path d="M2056.6 137 L2056.6 270" stroke="#474747" stroke-width="1"/>
<circle cx="2212" cy="198.3" r="56" fill="#fff"/><rect x="2181.8" y="172.8" width="61" height="53" fill="#5457e8"/><rect x="2190" y="181.5" width="17" height="14" fill="#fff"/><rect x="2216" y="181.5" width="19" height="14" fill="#fff"/><rect x="2190" y="203.5" width="17" height="14" fill="#fff"/><rect x="2216" y="203.5" width="19" height="14" fill="#fff"/>
<text x="2293.4" y="197.2" font-family="'Liberation Sans', sans-serif" font-size="49" font-weight="700" fill="#fff" stroke="#fff" stroke-width="2.4" stroke-linejoin="round" textLength="24.6" lengthAdjust="spacingAndGlyphs">F</text>
<text x="2320.8" y="197.2" font-family="'Liberation Sans', sans-serif" font-size="49" font-weight="700" fill="#fff" stroke="#fff" stroke-width="2.4" stroke-linejoin="round" textLength="14.0" lengthAdjust="spacingAndGlyphs">I</text>
<text x="2336.6" y="197.2" font-family="'Liberation Sans', sans-serif" font-size="49" font-weight="700" fill="#fff" stroke="#fff" stroke-width="2.4" stroke-linejoin="round" textLength="34.1" lengthAdjust="spacingAndGlyphs">N</text>
<text x="2372.5" y="197.2" font-family="'Liberation Sans', sans-serif" font-size="49" font-weight="700" fill="#fff" stroke="#fff" stroke-width="2.4" stroke-linejoin="round" textLength="39.3" lengthAdjust="spacingAndGlyphs">M</text>
<text x="2452.7" y="197.2" font-family="'Liberation Sans', sans-serif" font-size="49" font-weight="700" fill="#fff" stroke="#fff" stroke-width="2.4" stroke-linejoin="round" textLength="34.1" lengthAdjust="spacingAndGlyphs">D</text>
<text x="2488.6" y="197.2" font-family="'Liberation Sans', sans-serif" font-size="49" font-weight="700" fill="#fff" stroke="#fff" stroke-width="2.4" stroke-linejoin="round" textLength="23.5" lengthAdjust="spacingAndGlyphs">E</text>
<text x="2512.9" y="197.2" font-family="'Liberation Sans', sans-serif" font-size="49" font-weight="700" fill="#fff" stroke="#fff" stroke-width="2.4" stroke-linejoin="round" textLength="21.4" lengthAdjust="spacingAndGlyphs">L</text>
<text x="2533.0" y="197.2" font-family="'Liberation Sans', sans-serif" font-size="49" font-weight="700" fill="#fff" stroke="#fff" stroke-width="2.4" stroke-linejoin="round" textLength="29.8" lengthAdjust="spacingAndGlyphs">S</text>
<text x="2564.6" y="197.2" font-family="'Liberation Sans', sans-serif" font-size="49" font-weight="700" fill="#fff" stroke="#fff" stroke-width="2.4" stroke-linejoin="round" textLength="22.4" lengthAdjust="spacingAndGlyphs">L</text>
<text x="2584.6" y="197.2" font-family="'Liberation Sans', sans-serif" font-size="49" font-weight="700" fill="#fff" stroke="#fff" stroke-width="2.4" stroke-linejoin="round" textLength="37.2" lengthAdjust="spacingAndGlyphs">A</text>
<text x="2622.6" y="197.2" font-family="'Liberation Sans', sans-serif" font-size="49" font-weight="700" fill="#fff" stroke="#fff" stroke-width="2.4" stroke-linejoin="round" textLength="30.5" lengthAdjust="spacingAndGlyphs">B</text>
<path d="M2423.5 166.5 A14.5 14.5 0 1 0 2440.5 166.5" stroke="#fff" stroke-width="7.2" fill="none"/><rect x="2428.4" y="154.5" width="7.2" height="26" rx="3.2" fill="#fff"/>
<text x="2309.7" y="237.4" font-family="'Liberation Sans', sans-serif" font-size="34.5" fill="#fff" stroke="#fff" stroke-width="0.4" text-anchor="middle">T</text>
<text x="2347.9" y="237.4" font-family="'Liberation Sans', sans-serif" font-size="34.5" fill="#fff" stroke="#fff" stroke-width="0.4" text-anchor="middle">e</text>
<text x="2397.5" y="237.4" font-family="'Liberation Sans', sans-serif" font-size="34.5" fill="#fff" stroke="#fff" stroke-width="0.4" text-anchor="middle">m</text>
<text x="2447.5" y="237.4" font-family="'Liberation Sans', sans-serif" font-size="34.5" fill="#fff" stroke="#fff" stroke-width="0.4" text-anchor="middle">p</text>
<text x="2485.4" y="237.4" font-family="'Liberation Sans', sans-serif" font-size="34.5" fill="#fff" stroke="#fff" stroke-width="0.4" text-anchor="middle">l</text>
<text x="2521.0" y="237.4" font-family="'Liberation Sans', sans-serif" font-size="34.5" fill="#fff" stroke="#fff" stroke-width="0.4" text-anchor="middle">a</text>
<text x="2558.3" y="237.4" font-family="'Liberation Sans', sans-serif" font-size="34.5" fill="#fff" stroke="#fff" stroke-width="0.4" text-anchor="middle">t</text>
<text x="2598.5" y="237.4" font-family="'Liberation Sans', sans-serif" font-size="34.5" fill="#fff" stroke="#fff" stroke-width="0.4" text-anchor="middle">e</text>
<text x="2641.8" y="237.4" font-family="'Liberation Sans', sans-serif" font-size="34.5" fill="#fff" stroke="#fff" stroke-width="0.4" text-anchor="middle">s</text>
<path d="M2849.5 253 L2857 260.5 L2864.5 253" stroke="#fff" stroke-width="1.8" fill="none"/>
<rect x="11" y="278" width="2880" height="19" fill="#0a0a0a"/>
<rect x="11" y="278" width="43" height="19" fill="#232323"/>
<rect x="13.5" y="278.5" width="17.5" height="18" fill="#dedede" stroke="#f4f4f4" stroke-width="1"/><rect x="33" y="278.5" width="17.5" height="18" fill="#dedede" stroke="#f4f4f4" stroke-width="1"/>
<text x="22.3" y="292.0" font-family="'Liberation Sans', sans-serif" font-size="12" fill="#333" text-anchor="middle">1</text>
<text x="41.8" y="292.0" font-family="'Liberation Sans', sans-serif" font-size="12" fill="#333" text-anchor="middle">2</text>
<path d="M84 282 L84 295 L71 295 Z" fill="#8a8a8a"/>
<rect x="87.6" y="278" width="23" height="19" fill="#3d3d3d"/>
<path d="M110.6 279 L110.6 297" stroke="#3a3a3a" stroke-width="1"/>
<text x="99.1" y="293.5" font-family="'Liberation Sans', sans-serif" font-size="17" fill="#d8d8d8" text-anchor="middle">A</text>
<path d="M121.8 279 L121.8 297" stroke="#3a3a3a" stroke-width="1"/>
<text x="116.2" y="293.5" font-family="'Liberation Sans', sans-serif" font-size="17" fill="#d8d8d8" text-anchor="middle">B</text>
<path d="M135.0 279 L135.0 297" stroke="#3a3a3a" stroke-width="1"/>
<text x="128.4" y="293.5" font-family="'Liberation Sans', sans-serif" font-size="17" fill="#d8d8d8" text-anchor="middle">C</text>
<path d="M167.4 279 L167.4 297" stroke="#3a3a3a" stroke-width="1"/>
<text x="151.2" y="293.5" font-family="'Liberation Sans', sans-serif" font-size="17" fill="#d8d8d8" text-anchor="middle">D</text>
<path d="M199.3 279 L199.3 297" stroke="#3a3a3a" stroke-width="1"/>
<text x="183.4" y="293.5" font-family="'Liberation Sans', sans-serif" font-size="17" fill="#d8d8d8" text-anchor="middle">E</text>
<path d="M351.3 279 L351.3 297" stroke="#3a3a3a" stroke-width="1"/>
<text x="275.3" y="293.5" font-family="'Liberation Sans', sans-serif" font-size="17" fill="#d8d8d8" text-anchor="middle">F</text>
<path d="M503.2 279 L503.2 297" stroke="#3a3a3a" stroke-width="1"/>
<text x="427.2" y="293.5" font-family="'Liberation Sans', sans-serif" font-size="17" fill="#d8d8d8" text-anchor="middle">G</text>
<path d="M655.2 279 L655.2 297" stroke="#3a3a3a" stroke-width="1"/>
<text x="579.2" y="293.5" font-family="'Liberation Sans', sans-serif" font-size="17" fill="#d8d8d8" text-anchor="middle">H</text>
<path d="M807.1 279 L807.1 297" stroke="#3a3a3a" stroke-width="1"/>
<text x="731.2" y="293.5" font-family="'Liberation Sans', sans-serif" font-size="17" fill="#d8d8d8" text-anchor="middle">I</text>
<path d="M927.1 279 L927.1 297" stroke="#3a3a3a" stroke-width="1"/>
<text x="867.1" y="293.5" font-family="'Liberation Sans', sans-serif" font-size="17" fill="#d8d8d8" text-anchor="middle">J</text>
<path d="M1047.1 279 L1047.1 297" stroke="#3a3a3a" stroke-width="1"/>
<text x="987.1" y="293.5" font-family="'Liberation Sans', sans-serif" font-size="17" fill="#d8d8d8" text-anchor="middle">K</text>
<path d="M1167.1 279 L1167.1 297" stroke="#3a3a3a" stroke-width="1"/>
<text x="1107.1" y="293.5" font-family="'Liberation Sans', sans-serif" font-size="17" fill="#d8d8d8" text-anchor="middle">L</text>
<path d="M1287.1 279 L1287.1 297" stroke="#3a3a3a" stroke-width="1"/>
<text x="1227.1" y="293.5" font-family="'Liberation Sans', sans-serif" font-size="17" fill="#d8d8d8" text-anchor="middle">M</text>
<path d="M1407.1 279 L1407.1 297" stroke="#3a3a3a" stroke-width="1"/>
<text x="1347.1" y="293.5" font-family="'Liberation Sans', sans-serif" font-size="17" fill="#d8d8d8" text-anchor="middle">N</text>
<path d="M1527.1 279 L1527.1 297" stroke="#3a3a3a" stroke-width="1"/>
<text x="1467.1" y="293.5" font-family="'Liberation Sans', sans-serif" font-size="17" fill="#d8d8d8" text-anchor="middle">O</text>
<path d="M1647.1 279 L1647.1 297" stroke="#3a3a3a" stroke-width="1"/>
<text x="1587.1" y="293.5" font-family="'Liberation Sans', sans-serif" font-size="17" fill="#d8d8d8" text-anchor="middle">P</text>
<path d="M1767.1 279 L1767.1 297" stroke="#3a3a3a" stroke-width="1"/>
<text x="1707.1" y="293.5" font-family="'Liberation Sans', sans-serif" font-size="17" fill="#d8d8d8" text-anchor="middle">Q</text>
<path d="M1887.1 279 L1887.1 297" stroke="#3a3a3a" stroke-width="1"/>
<text x="1827.1" y="293.5" font-family="'Liberation Sans', sans-serif" font-size="17" fill="#d8d8d8" text-anchor="middle">R</text>
<path d="M2007.1 279 L2007.1 297" stroke="#3a3a3a" stroke-width="1"/>
<text x="1947.1" y="293.5" font-family="'Liberation Sans', sans-serif" font-size="17" fill="#d8d8d8" text-anchor="middle">S</text>
<path d="M2127.1 279 L2127.1 297" stroke="#3a3a3a" stroke-width="1"/>
<text x="2067.1" y="293.5" font-family="'Liberation Sans', sans-serif" font-size="17" fill="#d8d8d8" text-anchor="middle">T</text>
<path d="M2247.1 279 L2247.1 297" stroke="#3a3a3a" stroke-width="1"/>
<text x="2187.1" y="293.5" font-family="'Liberation Sans', sans-serif" font-size="17" fill="#d8d8d8" text-anchor="middle">U</text>
<path d="M2367.1 279 L2367.1 297" stroke="#3a3a3a" stroke-width="1"/>
<text x="2307.1" y="293.5" font-family="'Liberation Sans', sans-serif" font-size="17" fill="#d8d8d8" text-anchor="middle">V</text>
<path d="M2487.1 279 L2487.1 297" stroke="#3a3a3a" stroke-width="1"/>
<text x="2427.1" y="293.5" font-family="'Liberation Sans', sans-serif" font-size="17" fill="#d8d8d8" text-anchor="middle">W</text>
<path d="M2607.1 279 L2607.1 297" stroke="#3a3a3a" stroke-width="1"/>
<text x="2547.1" y="293.5" font-family="'Liberation Sans', sans-serif" font-size="17" fill="#d8d8d8" text-anchor="middle">X</text>
<path d="M2727.1 279 L2727.1 297" stroke="#3a3a3a" stroke-width="1"/>
<text x="2667.1" y="293.5" font-family="'Liberation Sans', sans-serif" font-size="17" fill="#d8d8d8" text-anchor="middle">Y</text>
<path d="M2847.1 279 L2847.1 297" stroke="#3a3a3a" stroke-width="1"/>
<text x="2787.1" y="293.5" font-family="'Liberation Sans', sans-serif" font-size="17" fill="#d8d8d8" text-anchor="middle">Z</text>
<path d="M87.6 296.5 L110.6 296.5" stroke="#217346" stroke-width="2"/>
<rect x="11" y="297" width="43" height="1373" fill="#222222"/>
<rect x="54" y="297" width="33.5" height="1373" fill="#0d0d0d"/>
<rect x="88" y="297" width="2772" height="1373" fill="#ffffff"/>
<clipPath id="rhclip"><rect x="54" y="297" width="34" height="1373"/></clipPath><g clip-path="url(#rhclip)">
<rect x="54" y="297" width="33.5" height="35.6" fill="#6a6a6a"/>
<path d="M54 297.6 L87.5 297.6" stroke="#a8a8a8" stroke-width="1.2"/>
<path d="M54 332.6 L87.5 332.6" stroke="#3c3c3c" stroke-width="1.2"/>
<clipPath id="rc1"><rect x="54" y="297.6" width="34" height="35.0"/></clipPath>
<text x="70.5" y="328.6" font-family="'Liberation Sans', sans-serif" font-size="16.5" fill="#e6e6e6" text-anchor="middle" textLength="8.3" lengthAdjust="spacingAndGlyphs" clip-path="url(#rc1)">1</text>
<path d="M54 362.2 L87.5 362.2" stroke="#3c3c3c" stroke-width="1.2"/>
<clipPath id="rc2"><rect x="54" y="333.6" width="34" height="28.6"/></clipPath>
<text x="70.5" y="358.8" font-family="'Liberation Sans', sans-serif" font-size="16.5" fill="#e6e6e6" text-anchor="middle" textLength="8.3" lengthAdjust="spacingAndGlyphs" clip-path="url(#rc2)">2</text>
<path d="M54 380.3 L87.5 380.3" stroke="#3c3c3c" stroke-width="1.2"/>
<clipPath id="rc3"><rect x="54" y="362.8" width="34" height="17.5"/></clipPath>
<text x="70.5" y="378.6" font-family="'Liberation Sans', sans-serif" font-size="16.5" fill="#e6e6e6" text-anchor="middle" textLength="8.3" lengthAdjust="spacingAndGlyphs" clip-path="url(#rc3)">3</text>
<path d="M54 384.0 L87.5 384.0" stroke="#3c3c3c" stroke-width="1.2"/>
<path d="M54 416.0 L87.5 416.0" stroke="#3c3c3c" stroke-width="1.2"/>
<clipPath id="rc5"><rect x="54" y="384.6" width="34" height="31.4"/></clipPath>
<text x="70.5" y="412.7" font-family="'Liberation Sans', sans-serif" font-size="16.5" fill="#e6e6e6" text-anchor="middle" textLength="8.3" lengthAdjust="spacingAndGlyphs" clip-path="url(#rc5)">5</text>
<path d="M54 436.0 L87.5 436.0" stroke="#3c3c3c" stroke-width="1.2"/>
<clipPath id="rc6"><rect x="54" y="416.6" width="34" height="19.4"/></clipPath>
<text x="70.5" y="432.6" font-family="'Liberation Sans', sans-serif" font-size="16.5" fill="#e6e6e6" text-anchor="middle" textLength="8.3" lengthAdjust="spacingAndGlyphs" clip-path="url(#rc6)">6</text>
<path d="M54 454.2 L87.5 454.2" stroke="#3c3c3c" stroke-width="1.2"/>
<clipPath id="rc7"><rect x="54" y="436.6" width="34" height="17.6"/></clipPath>
<text x="70.5" y="452.5" font-family="'Liberation Sans', sans-serif" font-size="16.5" fill="#e6e6e6" text-anchor="middle" textLength="8.3" lengthAdjust="spacingAndGlyphs" clip-path="url(#rc7)">7</text>
<path d="M54 476.4 L87.5 476.4" stroke="#3c3c3c" stroke-width="1.2"/>
<clipPath id="rc13"><rect x="54" y="458.8" width="34" height="17.6"/></clipPath>
<text x="70.5" y="472.7" font-family="'Liberation Sans', sans-serif" font-size="16.5" fill="#e6e6e6" text-anchor="middle" textLength="16.5" lengthAdjust="spacingAndGlyphs" clip-path="url(#rc13)">13</text>
<path d="M54 501.4 L87.5 501.4" stroke="#3c3c3c" stroke-width="1.2"/>
<clipPath id="rc14"><rect x="54" y="477.0" width="34" height="24.4"/></clipPath>
<text x="70.5" y="497.3" font-family="'Liberation Sans', sans-serif" font-size="16.5" fill="#e6e6e6" text-anchor="middle" textLength="16.5" lengthAdjust="spacingAndGlyphs" clip-path="url(#rc14)">14</text>
<path d="M54 514.4 L87.5 514.4" stroke="#3c3c3c" stroke-width="1.2"/>
<clipPath id="rc15"><rect x="54" y="502.0" width="34" height="12.4"/></clipPath>
<text x="70.5" y="511.0" font-family="'Liberation Sans', sans-serif" font-size="16.5" fill="#e6e6e6" text-anchor="middle" textLength="16.5" lengthAdjust="spacingAndGlyphs" clip-path="url(#rc15)">15</text>
<path d="M54 537.5 L87.5 537.5" stroke="#3c3c3c" stroke-width="1.2"/>
<clipPath id="rc16"><rect x="54" y="515.0" width="34" height="22.5"/></clipPath>
<text x="70.5" y="533.5" font-family="'Liberation Sans', sans-serif" font-size="16.5" fill="#e6e6e6" text-anchor="middle" textLength="16.5" lengthAdjust="spacingAndGlyphs" clip-path="url(#rc16)">16</text>
<path d="M54 543.4 L87.5 543.4" stroke="#3c3c3c" stroke-width="1.2"/>
<clipPath id="rc17"><rect x="54" y="538.1" width="34" height="5.3"/></clipPath>
<text x="70.5" y="542.0" font-family="'Liberation Sans', sans-serif" font-size="16.5" fill="#e6e6e6" text-anchor="middle" textLength="16.5" lengthAdjust="spacingAndGlyphs" clip-path="url(#rc17)">17</text>
<path d="M54 563.4 L87.5 563.4" stroke="#3c3c3c" stroke-width="1.2"/>
<clipPath id="rc19"><rect x="54" y="547.8" width="34" height="15.6"/></clipPath>
<text x="70.5" y="561.8" font-family="'Liberation Sans', sans-serif" font-size="16.5" fill="#e6e6e6" text-anchor="middle" textLength="16.5" lengthAdjust="spacingAndGlyphs" clip-path="url(#rc19)">19</text>
<path d="M54 585.5 L87.5 585.5" stroke="#3c3c3c" stroke-width="1.2"/>
<clipPath id="rc22"><rect x="54" y="567.6" width="34" height="17.9"/></clipPath>
<text x="70.5" y="581.9" font-family="'Liberation Sans', sans-serif" font-size="16.5" fill="#e6e6e6" text-anchor="middle" textLength="16.5" lengthAdjust="spacingAndGlyphs" clip-path="url(#rc22)">22</text>
<path d="M54 605.1 L87.5 605.1" stroke="#3c3c3c" stroke-width="1.2"/>
<clipPath id="rc23"><rect x="54" y="586.1" width="34" height="19.0"/></clipPath>
<text x="70.5" y="601.0" font-family="'Liberation Sans', sans-serif" font-size="16.5" fill="#e6e6e6" text-anchor="middle" textLength="16.5" lengthAdjust="spacingAndGlyphs" clip-path="url(#rc23)">23</text>
<path d="M54 625.6 L87.5 625.6" stroke="#3c3c3c" stroke-width="1.2"/>
<clipPath id="rc24"><rect x="54" y="605.7" width="34" height="19.9"/></clipPath>
<text x="70.5" y="621.5" font-family="'Liberation Sans', sans-serif" font-size="16.5" fill="#e6e6e6" text-anchor="middle" textLength="16.5" lengthAdjust="spacingAndGlyphs" clip-path="url(#rc24)">24</text>
<path d="M54 645.5 L87.5 645.5" stroke="#3c3c3c" stroke-width="1.2"/>
<clipPath id="rc25"><rect x="54" y="626.2" width="34" height="19.3"/></clipPath>
<text x="70.5" y="641.4" font-family="'Liberation Sans', sans-serif" font-size="16.5" fill="#e6e6e6" text-anchor="middle" textLength="16.5" lengthAdjust="spacingAndGlyphs" clip-path="url(#rc25)">25</text>
<path d="M54 662.3 L87.5 662.3" stroke="#3c3c3c" stroke-width="1.2"/>
<clipPath id="rc26"><rect x="54" y="646.1" width="34" height="16.2"/></clipPath>
<text x="70.5" y="658.2" font-family="'Liberation Sans', sans-serif" font-size="16.5" fill="#e6e6e6" text-anchor="middle" textLength="16.5" lengthAdjust="spacingAndGlyphs" clip-path="url(#rc26)">26</text>
<path d="M54 685.2 L87.5 685.2" stroke="#3c3c3c" stroke-width="1.2"/>
<clipPath id="rc27"><rect x="54" y="662.9" width="34" height="22.3"/></clipPath>
<text x="70.5" y="681.1" font-family="'Liberation Sans', sans-serif" font-size="16.5" fill="#e6e6e6" text-anchor="middle" textLength="16.5" lengthAdjust="spacingAndGlyphs" clip-path="url(#rc27)">27</text>
<path d="M54 709.4 L87.5 709.4" stroke="#3c3c3c" stroke-width="1.2"/>
<clipPath id="rc29"><rect x="54" y="690.0" width="34" height="19.4"/></clipPath>
<text x="70.5" y="705.3" font-family="'Liberation Sans', sans-serif" font-size="16.5" fill="#e6e6e6" text-anchor="middle" textLength="16.5" lengthAdjust="spacingAndGlyphs" clip-path="url(#rc29)">29</text>
<path d="M54 733.2 L87.5 733.2" stroke="#3c3c3c" stroke-width="1.2"/>
<clipPath id="rc31"><rect x="54" y="713.9" width="34" height="19.3"/></clipPath>
<text x="70.5" y="729.1" font-family="'Liberation Sans', sans-serif" font-size="16.5" fill="#e6e6e6" text-anchor="middle" textLength="16.5" lengthAdjust="spacingAndGlyphs" clip-path="url(#rc31)">31</text>
<path d="M54 750.6 L87.5 750.6" stroke="#3c3c3c" stroke-width="1.2"/>
<clipPath id="rc32"><rect x="54" y="733.8" width="34" height="16.8"/></clipPath>
<text x="70.5" y="746.5" font-family="'Liberation Sans', sans-serif" font-size="16.5" fill="#e6e6e6" text-anchor="middle" textLength="16.5" lengthAdjust="spacingAndGlyphs" clip-path="url(#rc32)">32</text>
<path d="M54 773.3 L87.5 773.3" stroke="#3c3c3c" stroke-width="1.2"/>
<clipPath id="rc33"><rect x="54" y="751.2" width="34" height="22.1"/></clipPath>
<text x="70.5" y="769.2" font-family="'Liberation Sans', sans-serif" font-size="16.5" fill="#e6e6e6" text-anchor="middle" textLength="16.5" lengthAdjust="spacingAndGlyphs" clip-path="url(#rc33)">33</text>
<path d="M54 797.2 L87.5 797.2" stroke="#3c3c3c" stroke-width="1.2"/>
<clipPath id="rc35"><rect x="54" y="777.9" width="34" height="19.3"/></clipPath>
<text x="70.5" y="793.1" font-family="'Liberation Sans', sans-serif" font-size="16.5" fill="#e6e6e6" text-anchor="middle" textLength="16.5" lengthAdjust="spacingAndGlyphs" clip-path="url(#rc35)">35</text>
<path d="M54 817.3 L87.5 817.3" stroke="#3c3c3c" stroke-width="1.2"/>
<clipPath id="rc36"><rect x="54" y="797.8" width="34" height="19.5"/></clipPath>
<text x="70.5" y="813.2" font-family="'Liberation Sans', sans-serif" font-size="16.5" fill="#e6e6e6" text-anchor="middle" textLength="16.5" lengthAdjust="spacingAndGlyphs" clip-path="url(#rc36)">36</text>
<path d="M54 837.5 L87.5 837.5" stroke="#3c3c3c" stroke-width="1.2"/>
<clipPath id="rc37"><rect x="54" y="817.9" width="34" height="19.6"/></clipPath>
<text x="70.5" y="833.4" font-family="'Liberation Sans', sans-serif" font-size="16.5" fill="#e6e6e6" text-anchor="middle" textLength="16.5" lengthAdjust="spacingAndGlyphs" clip-path="url(#rc37)">37</text>
<path d="M54 857.4 L87.5 857.4" stroke="#3c3c3c" stroke-width="1.2"/>
<clipPath id="rc38"><rect x="54" y="838.1" width="34" height="19.3"/></clipPath>
<text x="70.5" y="853.3" font-family="'Liberation Sans', sans-serif" font-size="16.5" fill="#e6e6e6" text-anchor="middle" textLength="16.5" lengthAdjust="spacingAndGlyphs" clip-path="url(#rc38)">38</text>
<path d="M54 877.5 L87.5 877.5" stroke="#3c3c3c" stroke-width="1.2"/>
<clipPath id="rc39"><rect x="54" y="858.0" width="34" height="19.5"/></clipPath>
<text x="70.5" y="873.4" font-family="'Liberation Sans', sans-serif" font-size="16.5" fill="#e6e6e6" text-anchor="middle" textLength="16.5" lengthAdjust="spacingAndGlyphs" clip-path="url(#rc39)">39</text>
<path d="M54 897.5 L87.5 897.5" stroke="#3c3c3c" stroke-width="1.2"/>
<clipPath id="rc40"><rect x="54" y="878.1" width="34" height="19.4"/></clipPath>
<text x="70.5" y="893.4" font-family="'Liberation Sans', sans-serif" font-size="16.5" fill="#e6e6e6" text-anchor="middle" textLength="16.5" lengthAdjust="spacingAndGlyphs" clip-path="url(#rc40)">40</text>
<path d="M54 914.3 L87.5 914.3" stroke="#3c3c3c" stroke-width="1.2"/>
<clipPath id="rc41"><rect x="54" y="898.1" width="34" height="16.2"/></clipPath>
<text x="70.5" y="910.2" font-family="'Liberation Sans', sans-serif" font-size="16.5" fill="#e6e6e6" text-anchor="middle" textLength="16.5" lengthAdjust="spacingAndGlyphs" clip-path="url(#rc41)">41</text>
<path d="M54 934.3 L87.5 934.3" stroke="#3c3c3c" stroke-width="1.2"/>
<clipPath id="rc42"><rect x="54" y="914.9" width="34" height="19.4"/></clipPath>
<text x="70.5" y="930.2" font-family="'Liberation Sans', sans-serif" font-size="16.5" fill="#e6e6e6" text-anchor="middle" textLength="16.5" lengthAdjust="spacingAndGlyphs" clip-path="url(#rc42)">42</text>
<path d="M54 951.4 L87.5 951.4" stroke="#3c3c3c" stroke-width="1.2"/>
<clipPath id="rc43"><rect x="54" y="934.9" width="34" height="16.5"/></clipPath>
<text x="70.5" y="947.3" font-family="'Liberation Sans', sans-serif" font-size="16.5" fill="#e6e6e6" text-anchor="middle" textLength="16.5" lengthAdjust="spacingAndGlyphs" clip-path="url(#rc43)">43</text>
<path d="M54 968.5 L87.5 968.5" stroke="#3c3c3c" stroke-width="1.2"/>
<clipPath id="rc44"><rect x="54" y="952.0" width="34" height="16.5"/></clipPath>
<text x="70.5" y="964.4" font-family="'Liberation Sans', sans-serif" font-size="16.5" fill="#e6e6e6" text-anchor="middle" textLength="16.5" lengthAdjust="spacingAndGlyphs" clip-path="url(#rc44)">44</text>
<path d="M54 993.2 L87.5 993.2" stroke="#3c3c3c" stroke-width="1.2"/>
<clipPath id="rc45"><rect x="54" y="969.1" width="34" height="24.1"/></clipPath>
<text x="70.5" y="989.1" font-family="'Liberation Sans', sans-serif" font-size="16.5" fill="#e6e6e6" text-anchor="middle" textLength="16.5" lengthAdjust="spacingAndGlyphs" clip-path="url(#rc45)">45</text>
<path d="M54 1006.5 L87.5 1006.5" stroke="#3c3c3c" stroke-width="1.2"/>
<clipPath id="rc46"><rect x="54" y="993.8" width="34" height="12.7"/></clipPath>
<text x="70.5" y="1002.4" font-family="'Liberation Sans', sans-serif" font-size="16.5" fill="#e6e6e6" text-anchor="middle" textLength="16.5" lengthAdjust="spacingAndGlyphs" clip-path="url(#rc46)">46</text>
<path d="M54 1029.3 L87.5 1029.3" stroke="#3c3c3c" stroke-width="1.2"/>
<clipPath id="rc47"><rect x="54" y="1007.1" width="34" height="22.2"/></clipPath>
<text x="70.5" y="1025.2" font-family="'Liberation Sans', sans-serif" font-size="16.5" fill="#e6e6e6" text-anchor="middle" textLength="16.5" lengthAdjust="spacingAndGlyphs" clip-path="url(#rc47)">47</text>
<path d="M54 1049.4 L87.5 1049.4" stroke="#3c3c3c" stroke-width="1.2"/>
<clipPath id="rc48"><rect x="54" y="1029.9" width="34" height="19.5"/></clipPath>
<text x="70.5" y="1045.3" font-family="'Liberation Sans', sans-serif" font-size="16.5" fill="#e6e6e6" text-anchor="middle" textLength="16.5" lengthAdjust="spacingAndGlyphs" clip-path="url(#rc48)">48</text>
<path d="M54 1069.3 L87.5 1069.3" stroke="#3c3c3c" stroke-width="1.2"/>
<clipPath id="rc49"><rect x="54" y="1050.0" width="34" height="19.3"/></clipPath>
<text x="70.5" y="1065.2" font-family="'Liberation Sans', sans-serif" font-size="16.5" fill="#e6e6e6" text-anchor="middle" textLength="16.5" lengthAdjust="spacingAndGlyphs" clip-path="url(#rc49)">49</text>
<path d="M54 1089.5 L87.5 1089.5" stroke="#3c3c3c" stroke-width="1.2"/>
<clipPath id="rc50"><rect x="54" y="1069.9" width="34" height="19.6"/></clipPath>
<text x="70.5" y="1085.4" font-family="'Liberation Sans', sans-serif" font-size="16.5" fill="#e6e6e6" text-anchor="middle" textLength="16.5" lengthAdjust="spacingAndGlyphs" clip-path="url(#rc50)">50</text>
<path d="M54 1112.5 L87.5 1112.5" stroke="#3c3c3c" stroke-width="1.2"/>
<clipPath id="rc51"><rect x="54" y="1090.1" width="34" height="22.4"/></clipPath>
<text x="70.5" y="1108.4" font-family="'Liberation Sans', sans-serif" font-size="16.5" fill="#e6e6e6" text-anchor="middle" textLength="16.5" lengthAdjust="spacingAndGlyphs" clip-path="url(#rc51)">51</text>
<path d="M54 1135.2 L87.5 1135.2" stroke="#3c3c3c" stroke-width="1.2"/>
<clipPath id="rc52"><rect x="54" y="1113.1" width="34" height="22.1"/></clipPath>
<text x="70.5" y="1131.1" font-family="'Liberation Sans', sans-serif" font-size="16.5" fill="#e6e6e6" text-anchor="middle" textLength="16.5" lengthAdjust="spacingAndGlyphs" clip-path="url(#rc52)">52</text>
<path d="M54 1155.5 L87.5 1155.5" stroke="#3c3c3c" stroke-width="1.2"/>
<clipPath id="rc53"><rect x="54" y="1135.8" width="34" height="19.7"/></clipPath>
<text x="70.5" y="1151.4" font-family="'Liberation Sans', sans-serif" font-size="16.5" fill="#e6e6e6" text-anchor="middle" textLength="16.5" lengthAdjust="spacingAndGlyphs" clip-path="url(#rc53)">53</text>
<path d="M54 1175.6 L87.5 1175.6" stroke="#3c3c3c" stroke-width="1.2"/>
<clipPath id="rc54"><rect x="54" y="1156.1" width="34" height="19.5"/></clipPath>
<text x="70.5" y="1171.5" font-family="'Liberation Sans', sans-serif" font-size="16.5" fill="#e6e6e6" text-anchor="middle" textLength="16.5" lengthAdjust="spacingAndGlyphs" clip-path="url(#rc54)">54</text>
<path d="M54 1198.6 L87.5 1198.6" stroke="#3c3c3c" stroke-width="1.2"/>
<clipPath id="rc55"><rect x="54" y="1176.2" width="34" height="22.4"/></clipPath>
<text x="70.5" y="1194.5" font-family="'Liberation Sans', sans-serif" font-size="16.5" fill="#e6e6e6" text-anchor="middle" textLength="16.5" lengthAdjust="spacingAndGlyphs" clip-path="url(#rc55)">55</text>
<path d="M54 1221.5 L87.5 1221.5" stroke="#3c3c3c" stroke-width="1.2"/>
<clipPath id="rc56"><rect x="54" y="1199.2" width="34" height="22.3"/></clipPath>
<text x="70.5" y="1217.4" font-family="'Liberation Sans', sans-serif" font-size="16.5" fill="#e6e6e6" text-anchor="middle" textLength="16.5" lengthAdjust="spacingAndGlyphs" clip-path="url(#rc56)">56</text>
<path d="M54 1241.5 L87.5 1241.5" stroke="#3c3c3c" stroke-width="1.2"/>
<clipPath id="rc57"><rect x="54" y="1222.1" width="34" height="19.4"/></clipPath>
<text x="70.5" y="1237.4" font-family="'Liberation Sans', sans-serif" font-size="16.5" fill="#e6e6e6" text-anchor="middle" textLength="16.5" lengthAdjust="spacingAndGlyphs" clip-path="url(#rc57)">57</text>
<path d="M54 1261.4 L87.5 1261.4" stroke="#3c3c3c" stroke-width="1.2"/>
<clipPath id="rc58"><rect x="54" y="1242.1" width="34" height="19.3"/></clipPath>
<text x="70.5" y="1257.3" font-family="'Liberation Sans', sans-serif" font-size="16.5" fill="#e6e6e6" text-anchor="middle" textLength="16.5" lengthAdjust="spacingAndGlyphs" clip-path="url(#rc58)">58</text>
<path d="M54 1281.5 L87.5 1281.5" stroke="#3c3c3c" stroke-width="1.2"/>
<clipPath id="rc59"><rect x="54" y="1262.0" width="34" height="19.5"/></clipPath>
<text x="70.5" y="1277.4" font-family="'Liberation Sans', sans-serif" font-size="16.5" fill="#e6e6e6" text-anchor="middle" textLength="16.5" lengthAdjust="spacingAndGlyphs" clip-path="url(#rc59)">59</text>
<path d="M54 1301.6 L87.5 1301.6" stroke="#3c3c3c" stroke-width="1.2"/>
<clipPath id="rc60"><rect x="54" y="1282.1" width="34" height="19.5"/></clipPath>
<text x="70.5" y="1297.5" font-family="'Liberation Sans', sans-serif" font-size="16.5" fill="#e6e6e6" text-anchor="middle" textLength="16.5" lengthAdjust="spacingAndGlyphs" clip-path="url(#rc60)">60</text>
<path d="M54 1324.7 L87.5 1324.7" stroke="#3c3c3c" stroke-width="1.2"/>
<clipPath id="rc61"><rect x="54" y="1302.2" width="34" height="22.5"/></clipPath>
<text x="70.5" y="1320.6" font-family="'Liberation Sans', sans-serif" font-size="16.5" fill="#e6e6e6" text-anchor="middle" textLength="16.5" lengthAdjust="spacingAndGlyphs" clip-path="url(#rc61)">61</text>
<path d="M54 1347.4 L87.5 1347.4" stroke="#3c3c3c" stroke-width="1.2"/>
<clipPath id="rc62"><rect x="54" y="1325.3" width="34" height="22.1"/></clipPath>
<text x="70.5" y="1343.3" font-family="'Liberation Sans', sans-serif" font-size="16.5" fill="#e6e6e6" text-anchor="middle" textLength="16.5" lengthAdjust="spacingAndGlyphs" clip-path="url(#rc62)">62</text>
<path d="M54 1370.5 L87.5 1370.5" stroke="#3c3c3c" stroke-width="1.2"/>
<clipPath id="rc63"><rect x="54" y="1348.0" width="34" height="22.5"/></clipPath>
<text x="70.5" y="1366.4" font-family="'Liberation Sans', sans-serif" font-size="16.5" fill="#e6e6e6" text-anchor="middle" textLength="16.5" lengthAdjust="spacingAndGlyphs" clip-path="url(#rc63)">63</text>
<path d="M54 1393.4 L87.5 1393.4" stroke="#3c3c3c" stroke-width="1.2"/>
<clipPath id="rc64"><rect x="54" y="1371.1" width="34" height="22.3"/></clipPath>
<text x="70.5" y="1389.3" font-family="'Liberation Sans', sans-serif" font-size="16.5" fill="#e6e6e6" text-anchor="middle" textLength="16.5" lengthAdjust="spacingAndGlyphs" clip-path="url(#rc64)">64</text>
<path d="M54 1413.6 L87.5 1413.6" stroke="#3c3c3c" stroke-width="1.2"/>
<clipPath id="rc65"><rect x="54" y="1394.0" width="34" height="19.6"/></clipPath>
<text x="70.5" y="1409.5" font-family="'Liberation Sans', sans-serif" font-size="16.5" fill="#e6e6e6" text-anchor="middle" textLength="16.5" lengthAdjust="spacingAndGlyphs" clip-path="url(#rc65)">65</text>
<path d="M54 1434.3 L87.5 1434.3" stroke="#3c3c3c" stroke-width="1.2"/>
<clipPath id="rc66"><rect x="54" y="1414.2" width="34" height="20.1"/></clipPath>
<text x="70.5" y="1430.2" font-family="'Liberation Sans', sans-serif" font-size="16.5" fill="#e6e6e6" text-anchor="middle" textLength="16.5" lengthAdjust="spacingAndGlyphs" clip-path="url(#rc66)">66</text>
<path d="M54 1451.6 L87.5 1451.6" stroke="#3c3c3c" stroke-width="1.2"/>
<clipPath id="rc67"><rect x="54" y="1434.9" width="34" height="16.7"/></clipPath>
<text x="70.5" y="1447.5" font-family="'Liberation Sans', sans-serif" font-size="16.5" fill="#e6e6e6" text-anchor="middle" textLength="16.5" lengthAdjust="spacingAndGlyphs" clip-path="url(#rc67)">67</text>
<path d="M54 1476.4 L87.5 1476.4" stroke="#3c3c3c" stroke-width="1.2"/>
<clipPath id="rc68"><rect x="54" y="1452.2" width="34" height="24.2"/></clipPath>
<text x="70.5" y="1472.3" font-family="'Liberation Sans', sans-serif" font-size="16.5" fill="#e6e6e6" text-anchor="middle" textLength="16.5" lengthAdjust="spacingAndGlyphs" clip-path="url(#rc68)">68</text>
<path d="M54 1489.7 L87.5 1489.7" stroke="#3c3c3c" stroke-width="1.2"/>
<clipPath id="rc69"><rect x="54" y="1477.0" width="34" height="12.7"/></clipPath>
<text x="70.5" y="1485.6" font-family="'Liberation Sans', sans-serif" font-size="16.5" fill="#e6e6e6" text-anchor="middle" textLength="16.5" lengthAdjust="spacingAndGlyphs" clip-path="url(#rc69)">69</text>
<path d="M54 1509.5 L87.5 1509.5" stroke="#3c3c3c" stroke-width="1.2"/>
<clipPath id="rc70"><rect x="54" y="1490.3" width="34" height="19.2"/></clipPath>
<text x="70.5" y="1505.4" font-family="'Liberation Sans', sans-serif" font-size="16.5" fill="#e6e6e6" text-anchor="middle" textLength="16.5" lengthAdjust="spacingAndGlyphs" clip-path="url(#rc70)">70</text>
<path d="M54 1529.5 L87.5 1529.5" stroke="#3c3c3c" stroke-width="1.2"/>
<clipPath id="rc71"><rect x="54" y="1510.1" width="34" height="19.4"/></clipPath>
<text x="70.5" y="1525.4" font-family="'Liberation Sans', sans-serif" font-size="16.5" fill="#e6e6e6" text-anchor="middle" textLength="16.5" lengthAdjust="spacingAndGlyphs" clip-path="url(#rc71)">71</text>
<path d="M54 1549.3 L87.5 1549.3" stroke="#3c3c3c" stroke-width="1.2"/>
<clipPath id="rc72"><rect x="54" y="1530.1" width="34" height="19.2"/></clipPath>
<text x="70.5" y="1545.2" font-family="'Liberation Sans', sans-serif" font-size="16.5" fill="#e6e6e6" text-anchor="middle" textLength="16.5" lengthAdjust="spacingAndGlyphs" clip-path="url(#rc72)">72</text>
<path d="M54 1569.5 L87.5 1569.5" stroke="#3c3c3c" stroke-width="1.2"/>
<clipPath id="rc73"><rect x="54" y="1549.9" width="34" height="19.6"/></clipPath>
<text x="70.5" y="1565.4" font-family="'Liberation Sans', sans-serif" font-size="16.5" fill="#e6e6e6" text-anchor="middle" textLength="16.5" lengthAdjust="spacingAndGlyphs" clip-path="url(#rc73)">73</text>
<path d="M54 1589.4 L87.5 1589.4" stroke="#3c3c3c" stroke-width="1.2"/>
<clipPath id="rc74"><rect x="54" y="1570.1" width="34" height="19.3"/></clipPath>
<text x="70.5" y="1585.3" font-family="'Liberation Sans', sans-serif" font-size="16.5" fill="#e6e6e6" text-anchor="middle" textLength="16.5" lengthAdjust="spacingAndGlyphs" clip-path="url(#rc74)">74</text>
<path d="M54 1609.3 L87.5 1609.3" stroke="#3c3c3c" stroke-width="1.2"/>
<clipPath id="rc75"><rect x="54" y="1590.0" width="34" height="19.3"/></clipPath>
<text x="70.5" y="1605.2" font-family="'Liberation Sans', sans-serif" font-size="16.5" fill="#e6e6e6" text-anchor="middle" textLength="16.5" lengthAdjust="spacingAndGlyphs" clip-path="url(#rc75)">75</text>
<path d="M54 1629.2 L87.5 1629.2" stroke="#3c3c3c" stroke-width="1.2"/>
<clipPath id="rc76"><rect x="54" y="1609.9" width="34" height="19.3"/></clipPath>
<text x="70.5" y="1625.1" font-family="'Liberation Sans', sans-serif" font-size="16.5" fill="#e6e6e6" text-anchor="middle" textLength="16.5" lengthAdjust="spacingAndGlyphs" clip-path="url(#rc76)">76</text>
<path d="M54 1649.3 L87.5 1649.3" stroke="#3c3c3c" stroke-width="1.2"/>
<clipPath id="rc77"><rect x="54" y="1629.8" width="34" height="19.5"/></clipPath>
<text x="70.5" y="1645.2" font-family="'Liberation Sans', sans-serif" font-size="16.5" fill="#e6e6e6" text-anchor="middle" textLength="16.5" lengthAdjust="spacingAndGlyphs" clip-path="url(#rc77)">77</text>
<path d="M54 1666.7 L87.5 1666.7" stroke="#3c3c3c" stroke-width="1.2"/>
<clipPath id="rc78"><rect x="54" y="1649.9" width="34" height="16.8"/></clipPath>
<text x="70.5" y="1662.6" font-family="'Liberation Sans', sans-serif" font-size="16.5" fill="#e6e6e6" text-anchor="middle" textLength="16.5" lengthAdjust="spacingAndGlyphs" clip-path="url(#rc78)">78</text>
<path d="M54 1690.0 L87.5 1690.0" stroke="#3c3c3c" stroke-width="1.2"/>
<clipPath id="rc79"><rect x="54" y="1667.3" width="34" height="22.7"/></clipPath>
<text x="70.5" y="1685.9" font-family="'Liberation Sans', sans-serif" font-size="16.5" fill="#e6e6e6" text-anchor="middle" textLength="16.5" lengthAdjust="spacingAndGlyphs" clip-path="url(#rc79)">79</text>
<path d="M54 380.3 L87.5 380.3" stroke="#3c3c3c" stroke-width="1.2"/>
<path d="M54 384.0 L87.5 384.0" stroke="#3c3c3c" stroke-width="1.2"/>
<path d="M54 543.4 L87.5 543.4" stroke="#3c3c3c" stroke-width="1.2"/>
<path d="M54 547.2 L87.5 547.2" stroke="#3c3c3c" stroke-width="1.2"/>
<path d="M54 563.4 L87.5 563.4" stroke="#3c3c3c" stroke-width="1.2"/>
<path d="M54 567.0 L87.5 567.0" stroke="#3c3c3c" stroke-width="1.2"/>
<path d="M54 685.2 L87.5 685.2" stroke="#3c3c3c" stroke-width="1.2"/>
<path d="M54 689.4 L87.5 689.4" stroke="#3c3c3c" stroke-width="1.2"/>
<path d="M54 709.4 L87.5 709.4" stroke="#3c3c3c" stroke-width="1.2"/>
<path d="M54 713.3 L87.5 713.3" stroke="#3c3c3c" stroke-width="1.2"/>
<path d="M54 773.3 L87.5 773.3" stroke="#3c3c3c" stroke-width="1.2"/>
<path d="M54 777.3 L87.5 777.3" stroke="#3c3c3c" stroke-width="1.2"/>
</g>
<path d="M88 297 L88 333" stroke="#217346" stroke-width="2"/>
<rect x="14.5" y="547" width="16" height="16" fill="#e8e8e8" stroke="#9a9a9a" stroke-width="1"/><path d="M18.5 555 L26.5 555 M22.5 551 L22.5 559" stroke="#555" stroke-width="1.6"/>
<rect x="14.5" y="567" width="16" height="16" fill="#e8e8e8" stroke="#9a9a9a" stroke-width="1"/><path d="M18.5 575 L26.5 575 M22.5 571 L22.5 579" stroke="#555" stroke-width="1.6"/>
<path d="M11 456.5 L2860 456.5" stroke="#9a9a9a" stroke-width="1.3"/>
<text x="115.4" y="326.1" font-family="'Liberation Sans', sans-serif" font-size="27.5" font-weight="700" fill="#222a35" text-anchor="start" textLength="299.3" lengthAdjust="spacingAndGlyphs">Cash Flow Statement</text>
<text x="114.5" y="356.9" font-family="'Liberation Sans', sans-serif" font-size="22" font-weight="700" fill="#000" text-anchor="start" textLength="219.9" lengthAdjust="spacingAndGlyphs">ABC Company Inc.</text>
<text x="113.4" y="377.4" font-family="'Liberation Sans', sans-serif" font-size="15" font-weight="700" fill="#3a78d8" text-anchor="start" textLength="193.5" lengthAdjust="spacingAndGlyphs">Go to Table of Contents</text>
<rect x="113.4" y="379" width="193.5" height="1.8" fill="#3a78d8"/>
<text x="113.8" y="432.7" font-family="'Liberation Sans', sans-serif" font-size="16.3" font-weight="700" fill="#111" text-anchor="start" textLength="84.8" lengthAdjust="spacingAndGlyphs">Fiscal year</text>
<text x="113.8" y="452.6" font-family="'Liberation Sans', sans-serif" font-size="16.3" font-weight="700" fill="#111" text-anchor="start" textLength="49.1" lengthAdjust="spacingAndGlyphs">Month</text>
<text x="923.3" y="432.7" font-family="'Liberation Sans', sans-serif" font-size="16.3" font-weight="700" fill="#111" text-anchor="end" textLength="38.0" lengthAdjust="spacingAndGlyphs">2026</text>
<text x="923.3" y="452.6" font-family="'Liberation Sans', sans-serif" font-size="16.3" font-weight="700" fill="#111" text-anchor="end" textLength="55.3" lengthAdjust="spacingAndGlyphs">Jan-26</text>
<text x="1043.3" y="432.7" font-family="'Liberation Sans', sans-serif" font-size="16.3" font-weight="700" fill="#111" text-anchor="end" textLength="38.0" lengthAdjust="spacingAndGlyphs">2026</text>
<text x="1043.3" y="452.6" font-family="'Liberation Sans', sans-serif" font-size="16.3" font-weight="700" fill="#111" text-anchor="end" textLength="56.2" lengthAdjust="spacingAndGlyphs">Feb-26</text>
<text x="1163.3" y="432.7" font-family="'Liberation Sans', sans-serif" font-size="16.3" font-weight="700" fill="#111" text-anchor="end" textLength="38.0" lengthAdjust="spacingAndGlyphs">2026</text>
<text x="1163.3" y="452.6" font-family="'Liberation Sans', sans-serif" font-size="16.3" font-weight="700" fill="#111" text-anchor="end" textLength="56.2" lengthAdjust="spacingAndGlyphs">Mar-26</text>
<text x="1283.3" y="432.7" font-family="'Liberation Sans', sans-serif" font-size="16.3" font-weight="700" fill="#111" text-anchor="end" textLength="38.0" lengthAdjust="spacingAndGlyphs">2026</text>
<text x="1283.3" y="452.6" font-family="'Liberation Sans', sans-serif" font-size="16.3" font-weight="700" fill="#111" text-anchor="end" textLength="55.2" lengthAdjust="spacingAndGlyphs">Apr-26</text>
<text x="1403.3" y="432.7" font-family="'Liberation Sans', sans-serif" font-size="16.3" font-weight="700" fill="#111" text-anchor="end" textLength="38.0" lengthAdjust="spacingAndGlyphs">2026</text>
<text x="1403.3" y="452.6" font-family="'Liberation Sans', sans-serif" font-size="16.3" font-weight="700" fill="#111" text-anchor="end" textLength="59.1" lengthAdjust="spacingAndGlyphs">May-26</text>
<text x="1523.3" y="432.7" font-family="'Liberation Sans', sans-serif" font-size="16.3" font-weight="700" fill="#111" text-anchor="end" textLength="38.0" lengthAdjust="spacingAndGlyphs">2026</text>
<text x="1523.3" y="452.6" font-family="'Liberation Sans', sans-serif" font-size="16.3" font-weight="700" fill="#111" text-anchor="end" textLength="56.2" lengthAdjust="spacingAndGlyphs">Jun-26</text>
<text x="1643.3" y="432.7" font-family="'Liberation Sans', sans-serif" font-size="16.3" font-weight="700" fill="#111" text-anchor="end" textLength="38.0" lengthAdjust="spacingAndGlyphs">2026</text>
<text x="1643.3" y="452.6" font-family="'Liberation Sans', sans-serif" font-size="16.3" font-weight="700" fill="#111" text-anchor="end" textLength="50.4" lengthAdjust="spacingAndGlyphs">Jul-26</text>
<text x="1763.3" y="432.7" font-family="'Liberation Sans', sans-serif" font-size="16.3" font-weight="700" fill="#111" text-anchor="end" textLength="38.0" lengthAdjust="spacingAndGlyphs">2026</text>
<text x="1763.3" y="452.6" font-family="'Liberation Sans', sans-serif" font-size="16.3" font-weight="700" fill="#111" text-anchor="end" textLength="59.1" lengthAdjust="spacingAndGlyphs">Aug-26</text>
<text x="1883.3" y="432.7" font-family="'Liberation Sans', sans-serif" font-size="16.3" font-weight="700" fill="#111" text-anchor="end" textLength="38.0" lengthAdjust="spacingAndGlyphs">2026</text>
<text x="1883.3" y="452.6" font-family="'Liberation Sans', sans-serif" font-size="16.3" font-weight="700" fill="#111" text-anchor="end" textLength="57.2" lengthAdjust="spacingAndGlyphs">Sep-26</text>
<text x="2003.3" y="432.7" font-family="'Liberation Sans', sans-serif" font-size="16.3" font-weight="700" fill="#111" text-anchor="end" textLength="38.0" lengthAdjust="spacingAndGlyphs">2026</text>
<text x="2003.3" y="452.6" font-family="'Liberation Sans', sans-serif" font-size="16.3" font-weight="700" fill="#111" text-anchor="end" textLength="54.3" lengthAdjust="spacingAndGlyphs">Oct-26</text>
<text x="2123.3" y="432.7" font-family="'Liberation Sans', sans-serif" font-size="16.3" font-weight="700" fill="#111" text-anchor="end" textLength="38.0" lengthAdjust="spacingAndGlyphs">2026</text>
<text x="2123.3" y="452.6" font-family="'Liberation Sans', sans-serif" font-size="16.3" font-weight="700" fill="#111" text-anchor="end" textLength="58.2" lengthAdjust="spacingAndGlyphs">Nov-26</text>
<text x="2243.3" y="432.7" font-family="'Liberation Sans', sans-serif" font-size="16.3" font-weight="700" fill="#111" text-anchor="end" textLength="38.0" lengthAdjust="spacingAndGlyphs">2026</text>
<text x="2243.3" y="452.6" font-family="'Liberation Sans', sans-serif" font-size="16.3" font-weight="700" fill="#111" text-anchor="end" textLength="57.2" lengthAdjust="spacingAndGlyphs">Dec-26</text>
<text x="2363.3" y="432.7" font-family="'Liberation Sans', sans-serif" font-size="16.3" font-weight="700" fill="#111" text-anchor="end" textLength="38.0" lengthAdjust="spacingAndGlyphs">2027</text>
<text x="2363.3" y="452.6" font-family="'Liberation Sans', sans-serif" font-size="16.3" font-weight="700" fill="#111" text-anchor="end" textLength="55.3" lengthAdjust="spacingAndGlyphs">Jan-27</text>
<text x="2483.3" y="432.7" font-family="'Liberation Sans', sans-serif" font-size="16.3" font-weight="700" fill="#111" text-anchor="end" textLength="38.0" lengthAdjust="spacingAndGlyphs">2027</text>
<text x="2483.3" y="452.6" font-family="'Liberation Sans', sans-serif" font-size="16.3" font-weight="700" fill="#111" text-anchor="end" textLength="56.2" lengthAdjust="spacingAndGlyphs">Feb-27</text>
<text x="2603.3" y="432.7" font-family="'Liberation Sans', sans-serif" font-size="16.3" font-weight="700" fill="#111" text-anchor="end" textLength="38.0" lengthAdjust="spacingAndGlyphs">2027</text>
<text x="2603.3" y="452.6" font-family="'Liberation Sans', sans-serif" font-size="16.3" font-weight="700" fill="#111" text-anchor="end" textLength="56.2" lengthAdjust="spacingAndGlyphs">Mar-27</text>
<text x="2723.3" y="432.7" font-family="'Liberation Sans', sans-serif" font-size="16.3" font-weight="700" fill="#111" text-anchor="end" textLength="38.0" lengthAdjust="spacingAndGlyphs">2027</text>
<text x="2723.3" y="452.6" font-family="'Liberation Sans', sans-serif" font-size="16.3" font-weight="700" fill="#111" text-anchor="end" textLength="55.2" lengthAdjust="spacingAndGlyphs">Apr-27</text>
<text x="2843.3" y="432.7" font-family="'Liberation Sans', sans-serif" font-size="16.3" font-weight="700" fill="#111" text-anchor="end" textLength="38.0" lengthAdjust="spacingAndGlyphs">2027</text>
<text x="2843.3" y="452.6" font-family="'Liberation Sans', sans-serif" font-size="16.3" font-weight="700" fill="#111" text-anchor="end" textLength="59.1" lengthAdjust="spacingAndGlyphs">May-27</text>
<rect x="135" y="625.6" width="2725" height="20.1" fill="#4aafe4"/>
<rect x="135" y="713.3" width="2725" height="20.1" fill="#4aafe4"/>
<rect x="135" y="877.5" width="2725" height="20.2" fill="#4aafe4"/>
<rect x="135" y="914.3" width="2725" height="20.2" fill="#4aafe4"/>
<rect x="135" y="1629.2" width="2725" height="20.3" fill="#4aafe4"/>
<rect x="122" y="1069.3" width="2738" height="20.4" fill="#4aafe4"/>
<rect x="122" y="1155.5" width="2738" height="20.3" fill="#4aafe4"/>
<rect x="122" y="1281.5" width="2738" height="20.3" fill="#4aafe4"/>
<rect x="122" y="1393.4" width="2738" height="20.4" fill="#4aafe4"/>
<text x="114.6" y="497.0" font-family="'Liberation Sans', sans-serif" font-size="19.5" font-weight="700" fill="#1e2530" text-anchor="start" textLength="236.7" lengthAdjust="spacingAndGlyphs">Cash Flow Statement, $</text>
<text x="126.8" y="532.7" font-family="'Liberation Sans', sans-serif" font-size="17" font-weight="700" fill="#1e2530" text-anchor="start" textLength="319.0" lengthAdjust="spacingAndGlyphs">Cash Flow from Operating Activities</text>
<text x="139.5" y="561.0" font-family="'Liberation Sans', sans-serif" font-size="16.3" fill="#222222" text-anchor="start" textLength="96.3" lengthAdjust="spacingAndGlyphs">Cash Receipts</text>
<text x="139.5" y="582.0" font-family="'Liberation Sans', sans-serif" font-size="16.3" fill="#222222" text-anchor="start" textLength="106.5" lengthAdjust="spacingAndGlyphs">Cash Payments</text>
<text x="139.5" y="601.6" font-family="'Liberation Sans', sans-serif" font-size="16.3" fill="#222222" text-anchor="start" textLength="116.1" lengthAdjust="spacingAndGlyphs">Interest Expense</text>
<text x="140.0" y="622.1" font-family="'Liberation Sans', sans-serif" font-size="16.3" fill="#222222" text-anchor="start" textLength="163.0" lengthAdjust="spacingAndGlyphs">Corporate Tax Expense</text>
<text x="146.8" y="641.9" font-family="'Liberation Sans', sans-serif" font-size="16.4" font-weight="700" fill="#fff" text-anchor="start" textLength="325.5" lengthAdjust="spacingAndGlyphs">Net Cash Flow from Operating Activities</text>
<text x="126.8" y="680.4" font-family="'Liberation Sans', sans-serif" font-size="17" font-weight="700" fill="#1e2530" text-anchor="start" textLength="315.0" lengthAdjust="spacingAndGlyphs">Cash Flow from Investing Activities</text>
<text x="140.0" y="705.9" font-family="'Liberation Sans', sans-serif" font-size="16.3" fill="#222222" text-anchor="start" textLength="135.8" lengthAdjust="spacingAndGlyphs">Capital Expenditure</text>
<text x="146.8" y="729.6" font-family="'Liberation Sans', sans-serif" font-size="16.4" font-weight="700" fill="#fff" text-anchor="start" textLength="321.0" lengthAdjust="spacingAndGlyphs">Net Cash Flow from Investing Activities</text>
<text x="126.8" y="768.5" font-family="'Liberation Sans', sans-serif" font-size="17" font-weight="700" fill="#1e2530" text-anchor="start" textLength="317.5" lengthAdjust="spacingAndGlyphs">Cash Flow from Financing Activities</text>
<text x="139.5" y="793.7" font-family="'Liberation Sans', sans-serif" font-size="16.3" fill="#222222" text-anchor="start" textLength="126.7" lengthAdjust="spacingAndGlyphs">Debts Drawdowns</text>
<text x="139.5" y="813.8" font-family="'Liberation Sans', sans-serif" font-size="16.3" fill="#222222" text-anchor="start" textLength="130.2" lengthAdjust="spacingAndGlyphs">Debts Repayments</text>
<text x="139.5" y="834.0" font-family="'Liberation Sans', sans-serif" font-size="16.3" fill="#222222" text-anchor="start" textLength="106.7" lengthAdjust="spacingAndGlyphs">Equity Raisings</text>
<text x="139.5" y="853.9" font-family="'Liberation Sans', sans-serif" font-size="16.3" fill="#222222" text-anchor="start" textLength="113.7" lengthAdjust="spacingAndGlyphs">Equity Buybacks</text>
<text x="139.5" y="874.0" font-family="'Liberation Sans', sans-serif" font-size="16.3" fill="#222222" text-anchor="start" textLength="101.9" lengthAdjust="spacingAndGlyphs">Dividends Paid</text>
<text x="146.7" y="893.9" font-family="'Liberation Sans', sans-serif" font-size="16.4" font-weight="700" fill="#fff" text-anchor="start" textLength="321.0" lengthAdjust="spacingAndGlyphs">Net Cash Flow from Financing Activities</text>
<text x="146.7" y="930.7" font-family="'Liberation Sans', sans-serif" font-size="16.4" font-weight="700" fill="#fff" text-anchor="start" textLength="307.0" lengthAdjust="spacingAndGlyphs">Net Increase/(Decrease) in Cash Held</text>
<text x="114.6" y="988.8" font-family="'Liberation Sans', sans-serif" font-size="19.5" font-weight="700" fill="#1e2530" text-anchor="start" textLength="421.3" lengthAdjust="spacingAndGlyphs">Cash Flow Statement (indirect method), $</text>
<text x="126.5" y="1024.5" font-family="'Liberation Sans', sans-serif" font-size="17" font-weight="700" fill="#1e2530" text-anchor="start" textLength="175.0" lengthAdjust="spacingAndGlyphs">Operating Activities</text>
<text x="139.0" y="1045.9" font-family="'Liberation Sans', sans-serif" font-size="16.3" fill="#222222" text-anchor="start" textLength="209.6" lengthAdjust="spacingAndGlyphs">Net Income Less Depreciation</text>
<text x="139.0" y="1065.8" font-family="'Liberation Sans', sans-serif" font-size="16.3" fill="#222222" text-anchor="start" textLength="193.8" lengthAdjust="spacingAndGlyphs">Changes in Working Capital</text>
<text x="133.8" y="1085.9" font-family="'Liberation Sans', sans-serif" font-size="16.4" font-weight="700" fill="#fff" text-anchor="start" textLength="209.0" lengthAdjust="spacingAndGlyphs">Total Operating Activities</text>
<text x="126.5" y="1130.4" font-family="'Liberation Sans', sans-serif" font-size="17" font-weight="700" fill="#1e2530" text-anchor="start" textLength="171.3" lengthAdjust="spacingAndGlyphs">Investing Activities</text>
<text x="139.1" y="1152.0" font-family="'Liberation Sans', sans-serif" font-size="16.3" fill="#222222" text-anchor="start" textLength="136.4" lengthAdjust="spacingAndGlyphs">Capital Expenditure</text>
<text x="133.8" y="1172.0" font-family="'Liberation Sans', sans-serif" font-size="16.4" font-weight="700" fill="#fff" text-anchor="start" textLength="338.7" lengthAdjust="spacingAndGlyphs">Total Cash From (For) Investing Activities</text>
<text x="126.5" y="1216.7" font-family="'Liberation Sans', sans-serif" font-size="17" font-weight="700" fill="#1e2530" text-anchor="start" textLength="173.0" lengthAdjust="spacingAndGlyphs">Financing Activities</text>
<text x="139.0" y="1238.0" font-family="'Liberation Sans', sans-serif" font-size="16.3" fill="#222222" text-anchor="start" textLength="127.2" lengthAdjust="spacingAndGlyphs">Equity Investment</text>
<text x="139.0" y="1257.9" font-family="'Liberation Sans', sans-serif" font-size="16.3" fill="#222222" text-anchor="start" textLength="40.7" lengthAdjust="spacingAndGlyphs">Loans</text>
<text x="139.0" y="1278.0" font-family="'Liberation Sans', sans-serif" font-size="16.3" fill="#222222" text-anchor="start" textLength="104.0" lengthAdjust="spacingAndGlyphs">Dividends Paid</text>
<text x="133.8" y="1298.0" font-family="'Liberation Sans', sans-serif" font-size="16.4" font-weight="700" fill="#fff" text-anchor="start" textLength="340.4" lengthAdjust="spacingAndGlyphs">Total Cash From (For) Financing Activities</text>
<text x="126.5" y="1342.6" font-family="'Liberation Sans', sans-serif" font-size="17" font-weight="700" fill="#1e2530" text-anchor="start" textLength="143.0" lengthAdjust="spacingAndGlyphs">Cash Movement</text>
<text x="139.0" y="1364.6" font-family="'Liberation Sans', sans-serif" font-size="16.3" fill="#222222" text-anchor="start" textLength="263.7" lengthAdjust="spacingAndGlyphs">Cash and Cash Equivalents Beginning</text>
<text x="139.0" y="1387.4" font-family="'Liberation Sans', sans-serif" font-size="16.3" fill="#222222" text-anchor="start" textLength="226.0" lengthAdjust="spacingAndGlyphs">Net (Increase) Decrease In Cash</text>
<text x="133.8" y="1410.0" font-family="'Liberation Sans', sans-serif" font-size="16.4" font-weight="700" fill="#fff" text-anchor="start" textLength="298.8" lengthAdjust="spacingAndGlyphs">Total Cash and Cash Equivalents End</text>
<text x="127.5" y="1472.0" font-family="'Liberation Sans', sans-serif" font-size="19.5" font-weight="700" fill="#1e2530" text-anchor="start" textLength="286.8" lengthAdjust="spacingAndGlyphs">Interest on Cash Breakdown</text>
<text x="139.0" y="1506.0" font-family="'Liberation Sans', sans-serif" font-size="16.3" fill="#222222" text-anchor="start" textLength="277.0" lengthAdjust="spacingAndGlyphs">Net Cash Flow from Investing Activities</text>
<text x="139.0" y="1526.0" font-family="'Liberation Sans', sans-serif" font-size="16.3" fill="#222222" text-anchor="start" textLength="279.3" lengthAdjust="spacingAndGlyphs">Net Cash Flow from Financing Activities</text>
<text x="139.0" y="1545.8" font-family="'Liberation Sans', sans-serif" font-size="16.3" fill="#222222" text-anchor="start" textLength="96.3" lengthAdjust="spacingAndGlyphs">Cash Receipts</text>
<text x="139.0" y="1566.0" font-family="'Liberation Sans', sans-serif" font-size="16.3" fill="#222222" text-anchor="start" textLength="106.3" lengthAdjust="spacingAndGlyphs">Cash Payments</text>
<text x="139.0" y="1585.9" font-family="'Liberation Sans', sans-serif" font-size="16.3" fill="#222222" text-anchor="start" textLength="393.4" lengthAdjust="spacingAndGlyphs">Change in Cash (Pre-Corporate Tax &amp; Interest on Cash)</text>
<text x="139.0" y="1605.8" font-family="'Liberation Sans', sans-serif" font-size="16.3" fill="#222222" text-anchor="start" textLength="116.6" lengthAdjust="spacingAndGlyphs">Interest Expense</text>
<text x="139.0" y="1625.7" font-family="'Liberation Sans', sans-serif" font-size="16.3" fill="#222222" text-anchor="start" textLength="163.8" lengthAdjust="spacingAndGlyphs">Corporate Tax Expense</text>
<text x="146.4" y="1645.7" font-family="'Liberation Sans', sans-serif" font-size="16.4" font-weight="700" fill="#fff" text-anchor="start" textLength="306.8" lengthAdjust="spacingAndGlyphs">Net Increase/(Decrease) in Cash Held</text>
<text x="919.1" y="561.0" font-family="'Liberation Sans', sans-serif" font-size="13.8" fill="#222222" text-anchor="end" textLength="43.1" lengthAdjust="spacingAndGlyphs">22,581</text>
<text x="1039.1" y="561.0" font-family="'Liberation Sans', sans-serif" font-size="13.8" fill="#222222" text-anchor="end" textLength="43.1" lengthAdjust="spacingAndGlyphs">41,482</text>
<text x="1159.1" y="561.0" font-family="'Liberation Sans', sans-serif" font-size="13.8" fill="#222222" text-anchor="end" textLength="43.1" lengthAdjust="spacingAndGlyphs">46,018</text>
<text x="1279.1" y="561.0" font-family="'Liberation Sans', sans-serif" font-size="13.8" fill="#222222" text-anchor="end" textLength="43.1" lengthAdjust="spacingAndGlyphs">43,044</text>
<text x="1399.1" y="561.0" font-family="'Liberation Sans', sans-serif" font-size="13.8" fill="#222222" text-anchor="end" textLength="43.1" lengthAdjust="spacingAndGlyphs">44,456</text>
<text x="1519.1" y="561.0" font-family="'Liberation Sans', sans-serif" font-size="13.8" fill="#222222" text-anchor="end" textLength="43.1" lengthAdjust="spacingAndGlyphs">43,044</text>
<text x="1639.1" y="561.0" font-family="'Liberation Sans', sans-serif" font-size="13.8" fill="#222222" text-anchor="end" textLength="43.1" lengthAdjust="spacingAndGlyphs">44,456</text>
<text x="1759.1" y="561.0" font-family="'Liberation Sans', sans-serif" font-size="13.8" fill="#222222" text-anchor="end" textLength="43.1" lengthAdjust="spacingAndGlyphs">43,750</text>
<text x="1879.1" y="561.0" font-family="'Liberation Sans', sans-serif" font-size="13.8" fill="#222222" text-anchor="end" textLength="43.1" lengthAdjust="spacingAndGlyphs">43,044</text>
<text x="1999.1" y="561.0" font-family="'Liberation Sans', sans-serif" font-size="13.8" fill="#222222" text-anchor="end" textLength="43.1" lengthAdjust="spacingAndGlyphs">44,456</text>
<text x="2119.1" y="561.0" font-family="'Liberation Sans', sans-serif" font-size="13.8" fill="#222222" text-anchor="end" textLength="43.1" lengthAdjust="spacingAndGlyphs">43,044</text>
<text x="2239.1" y="561.0" font-family="'Liberation Sans', sans-serif" font-size="13.8" fill="#222222" text-anchor="end" textLength="43.1" lengthAdjust="spacingAndGlyphs">44,456</text>
<text x="2359.1" y="561.0" font-family="'Liberation Sans', sans-serif" font-size="13.8" fill="#222222" text-anchor="end" textLength="43.1" lengthAdjust="spacingAndGlyphs">57,105</text>
<text x="2479.1" y="561.0" font-family="'Liberation Sans', sans-serif" font-size="13.8" fill="#222222" text-anchor="end" textLength="43.1" lengthAdjust="spacingAndGlyphs">66,015</text>
<text x="2599.1" y="561.0" font-family="'Liberation Sans', sans-serif" font-size="13.8" fill="#222222" text-anchor="end" textLength="43.1" lengthAdjust="spacingAndGlyphs">73,235</text>
<text x="2719.1" y="561.0" font-family="'Liberation Sans', sans-serif" font-size="13.8" fill="#222222" text-anchor="end" textLength="43.1" lengthAdjust="spacingAndGlyphs">68,502</text>
<text x="2839.1" y="561.0" font-family="'Liberation Sans', sans-serif" font-size="13.8" fill="#222222" text-anchor="end" textLength="43.1" lengthAdjust="spacingAndGlyphs">70,748</text>
<text x="924.5" y="581.3" font-family="'Liberation Sans', sans-serif" font-size="13.8" fill="#222222" text-anchor="end" textLength="54.0" lengthAdjust="spacingAndGlyphs">(26,284)</text>
<text x="1044.5" y="581.3" font-family="'Liberation Sans', sans-serif" font-size="13.8" fill="#222222" text-anchor="end" textLength="54.0" lengthAdjust="spacingAndGlyphs">(33,912)</text>
<text x="1164.5" y="581.3" font-family="'Liberation Sans', sans-serif" font-size="13.8" fill="#222222" text-anchor="end" textLength="54.0" lengthAdjust="spacingAndGlyphs">(35,743)</text>
<text x="1284.5" y="581.3" font-family="'Liberation Sans', sans-serif" font-size="13.8" fill="#222222" text-anchor="end" textLength="54.0" lengthAdjust="spacingAndGlyphs">(34,543)</text>
<text x="1404.5" y="581.3" font-family="'Liberation Sans', sans-serif" font-size="13.8" fill="#222222" text-anchor="end" textLength="52.9" lengthAdjust="spacingAndGlyphs">(35,112)</text>
<text x="1524.5" y="581.3" font-family="'Liberation Sans', sans-serif" font-size="13.8" fill="#222222" text-anchor="end" textLength="54.0" lengthAdjust="spacingAndGlyphs">(34,543)</text>
<text x="1644.5" y="581.3" font-family="'Liberation Sans', sans-serif" font-size="13.8" fill="#222222" text-anchor="end" textLength="52.9" lengthAdjust="spacingAndGlyphs">(35,112)</text>
<text x="1764.5" y="581.3" font-family="'Liberation Sans', sans-serif" font-size="13.8" fill="#222222" text-anchor="end" textLength="54.0" lengthAdjust="spacingAndGlyphs">(34,828)</text>
<text x="1884.5" y="581.3" font-family="'Liberation Sans', sans-serif" font-size="13.8" fill="#222222" text-anchor="end" textLength="54.0" lengthAdjust="spacingAndGlyphs">(34,543)</text>
<text x="2004.5" y="581.3" font-family="'Liberation Sans', sans-serif" font-size="13.8" fill="#222222" text-anchor="end" textLength="52.9" lengthAdjust="spacingAndGlyphs">(35,112)</text>
<text x="2124.5" y="581.3" font-family="'Liberation Sans', sans-serif" font-size="13.8" fill="#222222" text-anchor="end" textLength="54.0" lengthAdjust="spacingAndGlyphs">(34,543)</text>
<text x="2244.5" y="581.3" font-family="'Liberation Sans', sans-serif" font-size="13.8" fill="#222222" text-anchor="end" textLength="52.9" lengthAdjust="spacingAndGlyphs">(35,112)</text>
<text x="2364.5" y="581.3" font-family="'Liberation Sans', sans-serif" font-size="13.8" fill="#222222" text-anchor="end" textLength="54.0" lengthAdjust="spacingAndGlyphs">(46,772)</text>
<text x="2484.5" y="581.3" font-family="'Liberation Sans', sans-serif" font-size="13.8" fill="#222222" text-anchor="end" textLength="54.0" lengthAdjust="spacingAndGlyphs">(47,930)</text>
<text x="2604.5" y="581.3" font-family="'Liberation Sans', sans-serif" font-size="13.8" fill="#222222" text-anchor="end" textLength="54.0" lengthAdjust="spacingAndGlyphs">(50,258)</text>
<text x="2724.5" y="581.3" font-family="'Liberation Sans', sans-serif" font-size="13.8" fill="#222222" text-anchor="end" textLength="54.0" lengthAdjust="spacingAndGlyphs">(48,732)</text>
<text x="2844.5" y="581.3" font-family="'Liberation Sans', sans-serif" font-size="13.8" fill="#222222" text-anchor="end" textLength="54.0" lengthAdjust="spacingAndGlyphs">(49,456)</text>
<text x="924.5" y="600.9" font-family="'Liberation Sans', sans-serif" font-size="13.8" fill="#222222" text-anchor="end" textLength="45.9" lengthAdjust="spacingAndGlyphs">(2,500)</text>
<text x="1044.5" y="600.9" font-family="'Liberation Sans', sans-serif" font-size="13.8" fill="#222222" text-anchor="end" textLength="45.9" lengthAdjust="spacingAndGlyphs">(2,500)</text>
<text x="1164.5" y="600.9" font-family="'Liberation Sans', sans-serif" font-size="13.8" fill="#222222" text-anchor="end" textLength="45.9" lengthAdjust="spacingAndGlyphs">(3,833)</text>
<text x="1284.5" y="600.9" font-family="'Liberation Sans', sans-serif" font-size="13.8" fill="#222222" text-anchor="end" textLength="44.8" lengthAdjust="spacingAndGlyphs">(3,811)</text>
<text x="1404.5" y="600.9" font-family="'Liberation Sans', sans-serif" font-size="13.8" fill="#222222" text-anchor="end" textLength="45.9" lengthAdjust="spacingAndGlyphs">(3,789)</text>
<text x="1524.5" y="600.9" font-family="'Liberation Sans', sans-serif" font-size="13.8" fill="#222222" text-anchor="end" textLength="45.9" lengthAdjust="spacingAndGlyphs">(3,767)</text>
<text x="1644.5" y="600.9" font-family="'Liberation Sans', sans-serif" font-size="13.8" fill="#222222" text-anchor="end" textLength="45.9" lengthAdjust="spacingAndGlyphs">(3,744)</text>
<text x="1764.5" y="600.9" font-family="'Liberation Sans', sans-serif" font-size="13.8" fill="#222222" text-anchor="end" textLength="45.9" lengthAdjust="spacingAndGlyphs">(3,722)</text>
<text x="1884.5" y="600.9" font-family="'Liberation Sans', sans-serif" font-size="13.8" fill="#222222" text-anchor="end" textLength="45.9" lengthAdjust="spacingAndGlyphs">(3,700)</text>
<text x="2004.5" y="600.9" font-family="'Liberation Sans', sans-serif" font-size="13.8" fill="#222222" text-anchor="end" textLength="45.9" lengthAdjust="spacingAndGlyphs">(3,678)</text>
<text x="2124.5" y="600.9" font-family="'Liberation Sans', sans-serif" font-size="13.8" fill="#222222" text-anchor="end" textLength="45.9" lengthAdjust="spacingAndGlyphs">(3,656)</text>
<text x="2244.5" y="600.9" font-family="'Liberation Sans', sans-serif" font-size="13.8" fill="#222222" text-anchor="end" textLength="45.9" lengthAdjust="spacingAndGlyphs">(3,633)</text>
<text x="2364.5" y="600.9" font-family="'Liberation Sans', sans-serif" font-size="13.8" fill="#222222" text-anchor="end" textLength="44.8" lengthAdjust="spacingAndGlyphs">(3,611)</text>
<text x="2484.5" y="600.9" font-family="'Liberation Sans', sans-serif" font-size="13.8" fill="#222222" text-anchor="end" textLength="45.9" lengthAdjust="spacingAndGlyphs">(3,563)</text>
<text x="2604.5" y="600.9" font-family="'Liberation Sans', sans-serif" font-size="13.8" fill="#222222" text-anchor="end" textLength="45.9" lengthAdjust="spacingAndGlyphs">(3,514)</text>
<text x="2724.5" y="600.9" font-family="'Liberation Sans', sans-serif" font-size="13.8" fill="#222222" text-anchor="end" textLength="45.9" lengthAdjust="spacingAndGlyphs">(3,465)</text>
<text x="2844.5" y="600.9" font-family="'Liberation Sans', sans-serif" font-size="13.8" fill="#222222" text-anchor="end" textLength="45.9" lengthAdjust="spacingAndGlyphs">(3,416)</text>
<text x="924.5" y="621.4" font-family="'Liberation Sans', sans-serif" font-size="13.8" fill="#222222" text-anchor="end" textLength="45.9" lengthAdjust="spacingAndGlyphs">(1,590)</text>
<text x="1044.5" y="621.4" font-family="'Liberation Sans', sans-serif" font-size="13.8" fill="#222222" text-anchor="end" textLength="45.9" lengthAdjust="spacingAndGlyphs">(1,577)</text>
<text x="1164.5" y="621.4" font-family="'Liberation Sans', sans-serif" font-size="13.8" fill="#222222" text-anchor="end" textLength="45.9" lengthAdjust="spacingAndGlyphs">(1,230)</text>
<text x="1284.5" y="621.4" font-family="'Liberation Sans', sans-serif" font-size="13.8" fill="#222222" text-anchor="end" textLength="45.9" lengthAdjust="spacingAndGlyphs">(1,229)</text>
<text x="1404.5" y="621.4" font-family="'Liberation Sans', sans-serif" font-size="13.8" fill="#222222" text-anchor="end" textLength="45.9" lengthAdjust="spacingAndGlyphs">(1,230)</text>
<text x="1524.5" y="621.4" font-family="'Liberation Sans', sans-serif" font-size="13.8" fill="#222222" text-anchor="end" textLength="45.9" lengthAdjust="spacingAndGlyphs">(1,233)</text>
<text x="1644.5" y="621.4" font-family="'Liberation Sans', sans-serif" font-size="13.8" fill="#222222" text-anchor="end" textLength="45.9" lengthAdjust="spacingAndGlyphs">(1,239)</text>
<text x="1764.5" y="621.4" font-family="'Liberation Sans', sans-serif" font-size="13.8" fill="#222222" text-anchor="end" textLength="45.9" lengthAdjust="spacingAndGlyphs">(1,244)</text>
<text x="1884.5" y="621.4" font-family="'Liberation Sans', sans-serif" font-size="13.8" fill="#222222" text-anchor="end" textLength="45.9" lengthAdjust="spacingAndGlyphs">(1,250)</text>
<text x="2004.5" y="621.4" font-family="'Liberation Sans', sans-serif" font-size="13.8" fill="#222222" text-anchor="end" textLength="45.9" lengthAdjust="spacingAndGlyphs">(1,255)</text>
<text x="2124.5" y="621.4" font-family="'Liberation Sans', sans-serif" font-size="13.8" fill="#222222" text-anchor="end" textLength="45.9" lengthAdjust="spacingAndGlyphs">(1,261)</text>
<text x="2244.5" y="621.4" font-family="'Liberation Sans', sans-serif" font-size="13.8" fill="#222222" text-anchor="end" textLength="45.9" lengthAdjust="spacingAndGlyphs">(1,266)</text>
<text x="2364.5" y="621.4" font-family="'Liberation Sans', sans-serif" font-size="13.8" fill="#222222" text-anchor="end" textLength="45.9" lengthAdjust="spacingAndGlyphs">(4,174)</text>
<text x="2484.5" y="621.4" font-family="'Liberation Sans', sans-serif" font-size="13.8" fill="#222222" text-anchor="end" textLength="45.9" lengthAdjust="spacingAndGlyphs">(4,186)</text>
<text x="2604.5" y="621.4" font-family="'Liberation Sans', sans-serif" font-size="13.8" fill="#222222" text-anchor="end" textLength="45.9" lengthAdjust="spacingAndGlyphs">(4,198)</text>
<text x="2724.5" y="621.4" font-family="'Liberation Sans', sans-serif" font-size="13.8" fill="#222222" text-anchor="end" textLength="44.8" lengthAdjust="spacingAndGlyphs">(4,211)</text>
<text x="2844.5" y="621.4" font-family="'Liberation Sans', sans-serif" font-size="13.8" fill="#222222" text-anchor="end" textLength="45.9" lengthAdjust="spacingAndGlyphs">(4,223)</text>
<text x="923.4" y="641.1" font-family="'Liberation Serif', serif" font-size="17" font-weight="700" fill="#fff" text-anchor="end" textLength="57.3" lengthAdjust="spacingAndGlyphs">(7,793)</text>
<text x="1036.6" y="641.1" font-family="'Liberation Serif', serif" font-size="17" font-weight="700" fill="#fff" text-anchor="end" textLength="44.2" lengthAdjust="spacingAndGlyphs">3,493</text>
<text x="1156.6" y="641.1" font-family="'Liberation Serif', serif" font-size="17" font-weight="700" fill="#fff" text-anchor="end" textLength="44.2" lengthAdjust="spacingAndGlyphs">5,212</text>
<text x="1276.6" y="641.1" font-family="'Liberation Serif', serif" font-size="17" font-weight="700" fill="#fff" text-anchor="end" textLength="44.2" lengthAdjust="spacingAndGlyphs">3,461</text>
<text x="1396.6" y="641.1" font-family="'Liberation Serif', serif" font-size="17" font-weight="700" fill="#fff" text-anchor="end" textLength="44.2" lengthAdjust="spacingAndGlyphs">4,324</text>
<text x="1516.6" y="641.1" font-family="'Liberation Serif', serif" font-size="17" font-weight="700" fill="#fff" text-anchor="end" textLength="44.2" lengthAdjust="spacingAndGlyphs">3,502</text>
<text x="1636.6" y="641.1" font-family="'Liberation Serif', serif" font-size="17" font-weight="700" fill="#fff" text-anchor="end" textLength="44.2" lengthAdjust="spacingAndGlyphs">4,360</text>
<text x="1756.6" y="641.1" font-family="'Liberation Serif', serif" font-size="17" font-weight="700" fill="#fff" text-anchor="end" textLength="44.2" lengthAdjust="spacingAndGlyphs">3,956</text>
<text x="1876.6" y="641.1" font-family="'Liberation Serif', serif" font-size="17" font-weight="700" fill="#fff" text-anchor="end" textLength="44.2" lengthAdjust="spacingAndGlyphs">3,552</text>
<text x="1996.6" y="641.1" font-family="'Liberation Serif', serif" font-size="17" font-weight="700" fill="#fff" text-anchor="end" textLength="44.2" lengthAdjust="spacingAndGlyphs">4,410</text>
<text x="2116.6" y="641.1" font-family="'Liberation Serif', serif" font-size="17" font-weight="700" fill="#fff" text-anchor="end" textLength="44.2" lengthAdjust="spacingAndGlyphs">3,585</text>
<text x="2236.6" y="641.1" font-family="'Liberation Serif', serif" font-size="17" font-weight="700" fill="#fff" text-anchor="end" textLength="44.2" lengthAdjust="spacingAndGlyphs">4,443</text>
<text x="2356.6" y="641.1" font-family="'Liberation Serif', serif" font-size="17" font-weight="700" fill="#fff" text-anchor="end" textLength="44.2" lengthAdjust="spacingAndGlyphs">2,548</text>
<text x="2476.6" y="641.1" font-family="'Liberation Serif', serif" font-size="17" font-weight="700" fill="#fff" text-anchor="end" textLength="54.0" lengthAdjust="spacingAndGlyphs">10,337</text>
<text x="2596.6" y="641.1" font-family="'Liberation Serif', serif" font-size="17" font-weight="700" fill="#fff" text-anchor="end" textLength="54.0" lengthAdjust="spacingAndGlyphs">15,264</text>
<text x="2716.6" y="641.1" font-family="'Liberation Serif', serif" font-size="17" font-weight="700" fill="#fff" text-anchor="end" textLength="54.0" lengthAdjust="spacingAndGlyphs">12,094</text>
<text x="2836.6" y="641.1" font-family="'Liberation Serif', serif" font-size="17" font-weight="700" fill="#fff" text-anchor="end" textLength="54.0" lengthAdjust="spacingAndGlyphs">13,653</text>
<text x="924.5" y="705.2" font-family="'Liberation Sans', sans-serif" font-size="13.8" fill="#222222" text-anchor="end" textLength="45.9" lengthAdjust="spacingAndGlyphs">(7,500)</text>
<text x="1044.5" y="705.2" font-family="'Liberation Sans', sans-serif" font-size="13.8" fill="#222222" text-anchor="end" textLength="45.9" lengthAdjust="spacingAndGlyphs">(6,250)</text>
<text x="1164.5" y="705.2" font-family="'Liberation Sans', sans-serif" font-size="13.8" fill="#222222" text-anchor="end" textLength="45.9" lengthAdjust="spacingAndGlyphs">(6,500)</text>
<text x="1284.5" y="705.2" font-family="'Liberation Sans', sans-serif" font-size="13.8" fill="#222222" text-anchor="end" textLength="45.9" lengthAdjust="spacingAndGlyphs">(2,983)</text>
<text x="1404.5" y="705.2" font-family="'Liberation Sans', sans-serif" font-size="13.8" fill="#222222" text-anchor="end" textLength="45.9" lengthAdjust="spacingAndGlyphs">(2,233)</text>
<text x="1524.5" y="705.2" font-family="'Liberation Sans', sans-serif" font-size="13.8" fill="#222222" text-anchor="end" textLength="45.9" lengthAdjust="spacingAndGlyphs">(1,333)</text>
<rect x="1635.1" y="699.8" width="5" height="1.3" fill="#222222"/>
<rect x="1755.1" y="699.8" width="5" height="1.3" fill="#222222"/>
<rect x="1875.1" y="699.8" width="5" height="1.3" fill="#222222"/>
<rect x="1995.1" y="699.8" width="5" height="1.3" fill="#222222"/>
<rect x="2115.1" y="699.8" width="5" height="1.3" fill="#222222"/>
<rect x="2235.1" y="699.8" width="5" height="1.3" fill="#222222"/>
<rect x="2355.1" y="699.8" width="5" height="1.3" fill="#222222"/>
<rect x="2475.1" y="699.8" width="5" height="1.3" fill="#222222"/>
<rect x="2595.1" y="699.8" width="5" height="1.3" fill="#222222"/>
<rect x="2715.1" y="699.8" width="5" height="1.3" fill="#222222"/>
<rect x="2835.1" y="699.8" width="5" height="1.3" fill="#222222"/>
<text x="923.4" y="728.8" font-family="'Liberation Serif', serif" font-size="17" font-weight="700" fill="#fff" text-anchor="end" textLength="57.3" lengthAdjust="spacingAndGlyphs">(7,500)</text>
<text x="1043.4" y="728.8" font-family="'Liberation Serif', serif" font-size="17" font-weight="700" fill="#fff" text-anchor="end" textLength="57.3" lengthAdjust="spacingAndGlyphs">(6,250)</text>
<text x="1163.4" y="728.8" font-family="'Liberation Serif', serif" font-size="17" font-weight="700" fill="#fff" text-anchor="end" textLength="57.3" lengthAdjust="spacingAndGlyphs">(6,500)</text>
<text x="1283.4" y="728.8" font-family="'Liberation Serif', serif" font-size="17" font-weight="700" fill="#fff" text-anchor="end" textLength="57.3" lengthAdjust="spacingAndGlyphs">(2,983)</text>
<text x="1403.4" y="728.8" font-family="'Liberation Serif', serif" font-size="17" font-weight="700" fill="#fff" text-anchor="end" textLength="57.3" lengthAdjust="spacingAndGlyphs">(2,233)</text>
<text x="1523.4" y="728.8" font-family="'Liberation Serif', serif" font-size="17" font-weight="700" fill="#fff" text-anchor="end" textLength="57.3" lengthAdjust="spacingAndGlyphs">(1,333)</text>
<rect x="1630.4" y="723.8" width="6.3" height="1.6" fill="#fff"/>
<rect x="1750.4" y="723.8" width="6.3" height="1.6" fill="#fff"/>
<rect x="1870.4" y="723.8" width="6.3" height="1.6" fill="#fff"/>
<rect x="1990.4" y="723.8" width="6.3" height="1.6" fill="#fff"/>
<rect x="2110.4" y="723.8" width="6.3" height="1.6" fill="#fff"/>
<rect x="2230.4" y="723.8" width="6.3" height="1.6" fill="#fff"/>
<rect x="2350.4" y="723.8" width="6.3" height="1.6" fill="#fff"/>
<rect x="2470.4" y="723.8" width="6.3" height="1.6" fill="#fff"/>
<rect x="2590.4" y="723.8" width="6.3" height="1.6" fill="#fff"/>
<rect x="2710.4" y="723.8" width="6.3" height="1.6" fill="#fff"/>
<rect x="2830.4" y="723.8" width="6.3" height="1.6" fill="#fff"/>
<text x="919.1" y="793.0" font-family="'Liberation Sans', sans-serif" font-size="13.8" fill="#222222" text-anchor="end" textLength="50.9" lengthAdjust="spacingAndGlyphs">500,000</text>
<rect x="1035.1" y="787.6" width="5" height="1.3" fill="#222222"/>
<text x="1159.1" y="793.0" font-family="'Liberation Sans', sans-serif" font-size="13.8" fill="#222222" text-anchor="end" textLength="50.9" lengthAdjust="spacingAndGlyphs">200,000</text>
<rect x="1275.1" y="787.6" width="5" height="1.3" fill="#222222"/>
<rect x="1395.1" y="787.6" width="5" height="1.3" fill="#222222"/>
<rect x="1515.1" y="787.6" width="5" height="1.3" fill="#222222"/>
<rect x="1635.1" y="787.6" width="5" height="1.3" fill="#222222"/>
<rect x="1755.1" y="787.6" width="5" height="1.3" fill="#222222"/>
<rect x="1875.1" y="787.6" width="5" height="1.3" fill="#222222"/>
<rect x="1995.1" y="787.6" width="5" height="1.3" fill="#222222"/>
<rect x="2115.1" y="787.6" width="5" height="1.3" fill="#222222"/>
<rect x="2235.1" y="787.6" width="5" height="1.3" fill="#222222"/>
<rect x="2355.1" y="787.6" width="5" height="1.3" fill="#222222"/>
<rect x="2475.1" y="787.6" width="5" height="1.3" fill="#222222"/>
<rect x="2595.1" y="787.6" width="5" height="1.3" fill="#222222"/>
<rect x="2715.1" y="787.6" width="5" height="1.3" fill="#222222"/>
<rect x="2835.1" y="787.6" width="5" height="1.3" fill="#222222"/>
<rect x="915.1" y="807.7" width="5" height="1.3" fill="#222222"/>
<rect x="1035.1" y="807.7" width="5" height="1.3" fill="#222222"/>
<text x="1164.5" y="813.1" font-family="'Liberation Sans', sans-serif" font-size="13.8" fill="#222222" text-anchor="end" textLength="45.9" lengthAdjust="spacingAndGlyphs">(3,333)</text>
<text x="1284.5" y="813.1" font-family="'Liberation Sans', sans-serif" font-size="13.8" fill="#222222" text-anchor="end" textLength="45.9" lengthAdjust="spacingAndGlyphs">(3,333)</text>
<text x="1404.5" y="813.1" font-family="'Liberation Sans', sans-serif" font-size="13.8" fill="#222222" text-anchor="end" textLength="45.9" lengthAdjust="spacingAndGlyphs">(3,333)</text>
<text x="1524.5" y="813.1" font-family="'Liberation Sans', sans-serif" font-size="13.8" fill="#222222" text-anchor="end" textLength="45.9" lengthAdjust="spacingAndGlyphs">(3,333)</text>
<text x="1644.5" y="813.1" font-family="'Liberation Sans', sans-serif" font-size="13.8" fill="#222222" text-anchor="end" textLength="45.9" lengthAdjust="spacingAndGlyphs">(3,333)</text>
<text x="1764.5" y="813.1" font-family="'Liberation Sans', sans-serif" font-size="13.8" fill="#222222" text-anchor="end" textLength="45.9" lengthAdjust="spacingAndGlyphs">(3,333)</text>
<text x="1884.5" y="813.1" font-family="'Liberation Sans', sans-serif" font-size="13.8" fill="#222222" text-anchor="end" textLength="45.9" lengthAdjust="spacingAndGlyphs">(3,333)</text>
<text x="2004.5" y="813.1" font-family="'Liberation Sans', sans-serif" font-size="13.8" fill="#222222" text-anchor="end" textLength="45.9" lengthAdjust="spacingAndGlyphs">(3,333)</text>
<text x="2124.5" y="813.1" font-family="'Liberation Sans', sans-serif" font-size="13.8" fill="#222222" text-anchor="end" textLength="45.9" lengthAdjust="spacingAndGlyphs">(3,333)</text>
<text x="2244.5" y="813.1" font-family="'Liberation Sans', sans-serif" font-size="13.8" fill="#222222" text-anchor="end" textLength="45.9" lengthAdjust="spacingAndGlyphs">(3,333)</text>
<text x="2364.5" y="813.1" font-family="'Liberation Sans', sans-serif" font-size="13.8" fill="#222222" text-anchor="end" textLength="45.9" lengthAdjust="spacingAndGlyphs">(8,590)</text>
<text x="2484.5" y="813.1" font-family="'Liberation Sans', sans-serif" font-size="13.8" fill="#222222" text-anchor="end" textLength="45.9" lengthAdjust="spacingAndGlyphs">(8,617)</text>
<text x="2604.5" y="813.1" font-family="'Liberation Sans', sans-serif" font-size="13.8" fill="#222222" text-anchor="end" textLength="45.9" lengthAdjust="spacingAndGlyphs">(8,643)</text>
<text x="2724.5" y="813.1" font-family="'Liberation Sans', sans-serif" font-size="13.8" fill="#222222" text-anchor="end" textLength="45.9" lengthAdjust="spacingAndGlyphs">(8,670)</text>
<text x="2844.5" y="813.1" font-family="'Liberation Sans', sans-serif" font-size="13.8" fill="#222222" text-anchor="end" textLength="45.9" lengthAdjust="spacingAndGlyphs">(8,696)</text>
<text x="919.1" y="833.3" font-family="'Liberation Sans', sans-serif" font-size="13.8" fill="#222222" text-anchor="end" textLength="50.9" lengthAdjust="spacingAndGlyphs">700,000</text>
<rect x="1035.1" y="827.9" width="5" height="1.3" fill="#222222"/>
<rect x="1155.1" y="827.9" width="5" height="1.3" fill="#222222"/>
<rect x="1275.1" y="827.9" width="5" height="1.3" fill="#222222"/>
<rect x="1395.1" y="827.9" width="5" height="1.3" fill="#222222"/>
<rect x="1515.1" y="827.9" width="5" height="1.3" fill="#222222"/>
<rect x="1635.1" y="827.9" width="5" height="1.3" fill="#222222"/>
<rect x="1755.1" y="827.9" width="5" height="1.3" fill="#222222"/>
<rect x="1875.1" y="827.9" width="5" height="1.3" fill="#222222"/>
<rect x="1995.1" y="827.9" width="5" height="1.3" fill="#222222"/>
<rect x="2115.1" y="827.9" width="5" height="1.3" fill="#222222"/>
<rect x="2235.1" y="827.9" width="5" height="1.3" fill="#222222"/>
<rect x="2355.1" y="827.9" width="5" height="1.3" fill="#222222"/>
<rect x="2475.1" y="827.9" width="5" height="1.3" fill="#222222"/>
<rect x="2595.1" y="827.9" width="5" height="1.3" fill="#222222"/>
<rect x="2715.1" y="827.9" width="5" height="1.3" fill="#222222"/>
<rect x="2835.1" y="827.9" width="5" height="1.3" fill="#222222"/>
<rect x="915.1" y="847.8" width="5" height="1.3" fill="#222222"/>
<rect x="1035.1" y="847.8" width="5" height="1.3" fill="#222222"/>
<rect x="1155.1" y="847.8" width="5" height="1.3" fill="#222222"/>
<rect x="1275.1" y="847.8" width="5" height="1.3" fill="#222222"/>
<rect x="1395.1" y="847.8" width="5" height="1.3" fill="#222222"/>
<rect x="1515.1" y="847.8" width="5" height="1.3" fill="#222222"/>
<rect x="1635.1" y="847.8" width="5" height="1.3" fill="#222222"/>
<rect x="1755.1" y="847.8" width="5" height="1.3" fill="#222222"/>
<rect x="1875.1" y="847.8" width="5" height="1.3" fill="#222222"/>
<rect x="1995.1" y="847.8" width="5" height="1.3" fill="#222222"/>
<rect x="2115.1" y="847.8" width="5" height="1.3" fill="#222222"/>
<rect x="2235.1" y="847.8" width="5" height="1.3" fill="#222222"/>
<rect x="2355.1" y="847.8" width="5" height="1.3" fill="#222222"/>
<rect x="2475.1" y="847.8" width="5" height="1.3" fill="#222222"/>
<rect x="2595.1" y="847.8" width="5" height="1.3" fill="#222222"/>
<rect x="2715.1" y="847.8" width="5" height="1.3" fill="#222222"/>
<rect x="2835.1" y="847.8" width="5" height="1.3" fill="#222222"/>
<rect x="915.1" y="867.9" width="5" height="1.3" fill="#222222"/>
<rect x="1035.1" y="867.9" width="5" height="1.3" fill="#222222"/>
<rect x="1155.1" y="867.9" width="5" height="1.3" fill="#222222"/>
<rect x="1275.1" y="867.9" width="5" height="1.3" fill="#222222"/>
<rect x="1395.1" y="867.9" width="5" height="1.3" fill="#222222"/>
<rect x="1515.1" y="867.9" width="5" height="1.3" fill="#222222"/>
<rect x="1635.1" y="867.9" width="5" height="1.3" fill="#222222"/>
<rect x="1755.1" y="867.9" width="5" height="1.3" fill="#222222"/>
<rect x="1875.1" y="867.9" width="5" height="1.3" fill="#222222"/>
<rect x="1995.1" y="867.9" width="5" height="1.3" fill="#222222"/>
<rect x="2115.1" y="867.9" width="5" height="1.3" fill="#222222"/>
<rect x="2235.1" y="867.9" width="5" height="1.3" fill="#222222"/>
<rect x="2355.1" y="867.9" width="5" height="1.3" fill="#222222"/>
<rect x="2475.1" y="867.9" width="5" height="1.3" fill="#222222"/>
<rect x="2595.1" y="867.9" width="5" height="1.3" fill="#222222"/>
<rect x="2715.1" y="867.9" width="5" height="1.3" fill="#222222"/>
<rect x="2835.1" y="867.9" width="5" height="1.3" fill="#222222"/>
<text x="916.6" y="893.1" font-family="'Liberation Serif', serif" font-size="17" font-weight="700" fill="#fff" text-anchor="end" textLength="78.5" lengthAdjust="spacingAndGlyphs">1,200,000</text>
<rect x="1030.4" y="888.1" width="6.3" height="1.6" fill="#fff"/>
<text x="1156.6" y="893.1" font-family="'Liberation Serif', serif" font-size="17" font-weight="700" fill="#fff" text-anchor="end" textLength="63.8" lengthAdjust="spacingAndGlyphs">196,667</text>
<text x="1283.4" y="893.1" font-family="'Liberation Serif', serif" font-size="17" font-weight="700" fill="#fff" text-anchor="end" textLength="57.3" lengthAdjust="spacingAndGlyphs">(3,333)</text>
<text x="1403.4" y="893.1" font-family="'Liberation Serif', serif" font-size="17" font-weight="700" fill="#fff" text-anchor="end" textLength="57.3" lengthAdjust="spacingAndGlyphs">(3,333)</text>
<text x="1523.4" y="893.1" font-family="'Liberation Serif', serif" font-size="17" font-weight="700" fill="#fff" text-anchor="end" textLength="57.3" lengthAdjust="spacingAndGlyphs">(3,333)</text>
<text x="1643.4" y="893.1" font-family="'Liberation Serif', serif" font-size="17" font-weight="700" fill="#fff" text-anchor="end" textLength="57.3" lengthAdjust="spacingAndGlyphs">(3,333)</text>
<text x="1763.4" y="893.1" font-family="'Liberation Serif', serif" font-size="17" font-weight="700" fill="#fff" text-anchor="end" textLength="57.3" lengthAdjust="spacingAndGlyphs">(3,333)</text>
<text x="1883.4" y="893.1" font-family="'Liberation Serif', serif" font-size="17" font-weight="700" fill="#fff" text-anchor="end" textLength="57.3" lengthAdjust="spacingAndGlyphs">(3,333)</text>
<text x="2003.4" y="893.1" font-family="'Liberation Serif', serif" font-size="17" font-weight="700" fill="#fff" text-anchor="end" textLength="57.3" lengthAdjust="spacingAndGlyphs">(3,333)</text>
<text x="2123.4" y="893.1" font-family="'Liberation Serif', serif" font-size="17" font-weight="700" fill="#fff" text-anchor="end" textLength="57.3" lengthAdjust="spacingAndGlyphs">(3,333)</text>
<text x="2243.4" y="893.1" font-family="'Liberation Serif', serif" font-size="17" font-weight="700" fill="#fff" text-anchor="end" textLength="57.3" lengthAdjust="spacingAndGlyphs">(3,333)</text>
<text x="2363.4" y="893.1" font-family="'Liberation Serif', serif" font-size="17" font-weight="700" fill="#fff" text-anchor="end" textLength="57.3" lengthAdjust="spacingAndGlyphs">(8,590)</text>
<text x="2483.4" y="893.1" font-family="'Liberation Serif', serif" font-size="17" font-weight="700" fill="#fff" text-anchor="end" textLength="57.3" lengthAdjust="spacingAndGlyphs">(8,617)</text>
<text x="2603.4" y="893.1" font-family="'Liberation Serif', serif" font-size="17" font-weight="700" fill="#fff" text-anchor="end" textLength="57.3" lengthAdjust="spacingAndGlyphs">(8,643)</text>
<text x="2723.4" y="893.1" font-family="'Liberation Serif', serif" font-size="17" font-weight="700" fill="#fff" text-anchor="end" textLength="57.3" lengthAdjust="spacingAndGlyphs">(8,670)</text>
<text x="2843.4" y="893.1" font-family="'Liberation Serif', serif" font-size="17" font-weight="700" fill="#fff" text-anchor="end" textLength="57.3" lengthAdjust="spacingAndGlyphs">(8,696)</text>
<text x="916.6" y="929.9" font-family="'Liberation Serif', serif" font-size="17" font-weight="700" fill="#fff" text-anchor="end" textLength="78.5" lengthAdjust="spacingAndGlyphs">1,184,707</text>
<text x="1043.4" y="929.9" font-family="'Liberation Serif', serif" font-size="17" font-weight="700" fill="#fff" text-anchor="end" textLength="57.3" lengthAdjust="spacingAndGlyphs">(2,757)</text>
<text x="1156.6" y="929.9" font-family="'Liberation Serif', serif" font-size="17" font-weight="700" fill="#fff" text-anchor="end" textLength="63.8" lengthAdjust="spacingAndGlyphs">195,378</text>
<text x="1283.4" y="929.9" font-family="'Liberation Serif', serif" font-size="17" font-weight="700" fill="#fff" text-anchor="end" textLength="57.3" lengthAdjust="spacingAndGlyphs">(2,856)</text>
<text x="1403.4" y="929.9" font-family="'Liberation Serif', serif" font-size="17" font-weight="700" fill="#fff" text-anchor="end" textLength="57.3" lengthAdjust="spacingAndGlyphs">(1,243)</text>
<text x="1523.4" y="929.9" font-family="'Liberation Serif', serif" font-size="17" font-weight="700" fill="#fff" text-anchor="end" textLength="57.3" lengthAdjust="spacingAndGlyphs">(1,165)</text>
<text x="1636.6" y="929.9" font-family="'Liberation Serif', serif" font-size="17" font-weight="700" fill="#fff" text-anchor="end" textLength="44.2" lengthAdjust="spacingAndGlyphs">1,027</text>
<text x="1756.6" y="929.9" font-family="'Liberation Serif', serif" font-size="17" font-weight="700" fill="#fff" text-anchor="end" textLength="29.5" lengthAdjust="spacingAndGlyphs">623</text>
<text x="1876.6" y="929.9" font-family="'Liberation Serif', serif" font-size="17" font-weight="700" fill="#fff" text-anchor="end" textLength="29.5" lengthAdjust="spacingAndGlyphs">218</text>
<text x="1996.6" y="929.9" font-family="'Liberation Serif', serif" font-size="17" font-weight="700" fill="#fff" text-anchor="end" textLength="44.2" lengthAdjust="spacingAndGlyphs">1,077</text>
<text x="2116.6" y="929.9" font-family="'Liberation Serif', serif" font-size="17" font-weight="700" fill="#fff" text-anchor="end" textLength="29.5" lengthAdjust="spacingAndGlyphs">252</text>
<text x="2236.6" y="929.9" font-family="'Liberation Serif', serif" font-size="17" font-weight="700" fill="#fff" text-anchor="end" textLength="43.1" lengthAdjust="spacingAndGlyphs">1,110</text>
<text x="2363.4" y="929.9" font-family="'Liberation Serif', serif" font-size="17" font-weight="700" fill="#fff" text-anchor="end" textLength="57.3" lengthAdjust="spacingAndGlyphs">(6,042)</text>
<text x="2476.6" y="929.9" font-family="'Liberation Serif', serif" font-size="17" font-weight="700" fill="#fff" text-anchor="end" textLength="44.2" lengthAdjust="spacingAndGlyphs">1,720</text>
<text x="2596.6" y="929.9" font-family="'Liberation Serif', serif" font-size="17" font-weight="700" fill="#fff" text-anchor="end" textLength="44.2" lengthAdjust="spacingAndGlyphs">6,621</text>
<text x="2716.6" y="929.9" font-family="'Liberation Serif', serif" font-size="17" font-weight="700" fill="#fff" text-anchor="end" textLength="44.2" lengthAdjust="spacingAndGlyphs">3,425</text>
<text x="2836.6" y="929.9" font-family="'Liberation Serif', serif" font-size="17" font-weight="700" fill="#fff" text-anchor="end" textLength="44.2" lengthAdjust="spacingAndGlyphs">4,956</text>
<text x="917.9" y="1045.8" font-family="'Liberation Sans', sans-serif" font-size="16.1" fill="#222222" text-anchor="end" textLength="41.1" lengthAdjust="spacingAndGlyphs">4,832</text>
<text x="1037.9" y="1045.8" font-family="'Liberation Sans', sans-serif" font-size="16.1" fill="#222222" text-anchor="end" textLength="41.1" lengthAdjust="spacingAndGlyphs">4,845</text>
<text x="1157.9" y="1045.8" font-family="'Liberation Sans', sans-serif" font-size="16.1" fill="#222222" text-anchor="end" textLength="41.1" lengthAdjust="spacingAndGlyphs">3,859</text>
<text x="1277.9" y="1045.8" font-family="'Liberation Sans', sans-serif" font-size="16.1" fill="#222222" text-anchor="end" textLength="41.1" lengthAdjust="spacingAndGlyphs">3,882</text>
<text x="1397.9" y="1045.8" font-family="'Liberation Sans', sans-serif" font-size="16.1" fill="#222222" text-anchor="end" textLength="41.1" lengthAdjust="spacingAndGlyphs">3,903</text>
<text x="1517.9" y="1045.8" font-family="'Liberation Sans', sans-serif" font-size="16.1" fill="#222222" text-anchor="end" textLength="41.1" lengthAdjust="spacingAndGlyphs">3,923</text>
<text x="1637.9" y="1045.8" font-family="'Liberation Sans', sans-serif" font-size="16.1" fill="#222222" text-anchor="end" textLength="41.1" lengthAdjust="spacingAndGlyphs">3,939</text>
<text x="1757.9" y="1045.8" font-family="'Liberation Sans', sans-serif" font-size="16.1" fill="#222222" text-anchor="end" textLength="41.1" lengthAdjust="spacingAndGlyphs">3,956</text>
<text x="1877.9" y="1045.8" font-family="'Liberation Sans', sans-serif" font-size="16.1" fill="#222222" text-anchor="end" textLength="41.1" lengthAdjust="spacingAndGlyphs">3,973</text>
<text x="1997.9" y="1045.8" font-family="'Liberation Sans', sans-serif" font-size="16.1" fill="#222222" text-anchor="end" textLength="41.1" lengthAdjust="spacingAndGlyphs">3,989</text>
<text x="2117.9" y="1045.8" font-family="'Liberation Sans', sans-serif" font-size="16.1" fill="#222222" text-anchor="end" textLength="41.1" lengthAdjust="spacingAndGlyphs">4,006</text>
<text x="2237.9" y="1045.8" font-family="'Liberation Sans', sans-serif" font-size="16.1" fill="#222222" text-anchor="end" textLength="41.1" lengthAdjust="spacingAndGlyphs">4,023</text>
<text x="2357.9" y="1045.8" font-family="'Liberation Sans', sans-serif" font-size="16.1" fill="#222222" text-anchor="end" textLength="50.2" lengthAdjust="spacingAndGlyphs">12,746</text>
<text x="2477.9" y="1045.8" font-family="'Liberation Sans', sans-serif" font-size="16.1" fill="#222222" text-anchor="end" textLength="50.2" lengthAdjust="spacingAndGlyphs">12,782</text>
<text x="2597.9" y="1045.8" font-family="'Liberation Sans', sans-serif" font-size="16.1" fill="#222222" text-anchor="end" textLength="50.2" lengthAdjust="spacingAndGlyphs">12,819</text>
<text x="2717.9" y="1045.8" font-family="'Liberation Sans', sans-serif" font-size="16.1" fill="#222222" text-anchor="end" textLength="50.2" lengthAdjust="spacingAndGlyphs">12,855</text>
<text x="2837.9" y="1045.8" font-family="'Liberation Sans', sans-serif" font-size="16.1" fill="#222222" text-anchor="end" textLength="50.2" lengthAdjust="spacingAndGlyphs">12,892</text>
<text x="922.9" y="1065.7" font-family="'Liberation Sans', sans-serif" font-size="16.1" fill="#222222" text-anchor="end" textLength="63.0" lengthAdjust="spacingAndGlyphs">(12,625)</text>
<text x="1042.9" y="1065.7" font-family="'Liberation Sans', sans-serif" font-size="16.1" fill="#222222" text-anchor="end" textLength="53.6" lengthAdjust="spacingAndGlyphs">(1,353)</text>
<text x="1157.9" y="1065.7" font-family="'Liberation Sans', sans-serif" font-size="16.1" fill="#222222" text-anchor="end" textLength="41.1" lengthAdjust="spacingAndGlyphs">1,353</text>
<text x="1282.9" y="1065.7" font-family="'Liberation Sans', sans-serif" font-size="16.1" fill="#222222" text-anchor="end" textLength="39.5" lengthAdjust="spacingAndGlyphs">(421)</text>
<text x="1397.9" y="1065.7" font-family="'Liberation Sans', sans-serif" font-size="16.1" fill="#222222" text-anchor="end" textLength="27.4" lengthAdjust="spacingAndGlyphs">421</text>
<text x="1522.9" y="1065.7" font-family="'Liberation Sans', sans-serif" font-size="16.1" fill="#222222" text-anchor="end" textLength="39.5" lengthAdjust="spacingAndGlyphs">(421)</text>
<text x="1637.9" y="1065.7" font-family="'Liberation Sans', sans-serif" font-size="16.1" fill="#222222" text-anchor="end" textLength="27.4" lengthAdjust="spacingAndGlyphs">421</text>
<text x="1757.6" y="1064.2" font-family="'Liberation Sans', sans-serif" font-size="16.1" fill="#222222" text-anchor="end">-</text>
<text x="1882.9" y="1065.7" font-family="'Liberation Sans', sans-serif" font-size="16.1" fill="#222222" text-anchor="end" textLength="39.5" lengthAdjust="spacingAndGlyphs">(421)</text>
<text x="1997.9" y="1065.7" font-family="'Liberation Sans', sans-serif" font-size="16.1" fill="#222222" text-anchor="end" textLength="27.4" lengthAdjust="spacingAndGlyphs">421</text>
<text x="2122.9" y="1065.7" font-family="'Liberation Sans', sans-serif" font-size="16.1" fill="#222222" text-anchor="end" textLength="39.5" lengthAdjust="spacingAndGlyphs">(421)</text>
<text x="2237.9" y="1065.7" font-family="'Liberation Sans', sans-serif" font-size="16.1" fill="#222222" text-anchor="end" textLength="27.4" lengthAdjust="spacingAndGlyphs">421</text>
<text x="2362.9" y="1065.7" font-family="'Liberation Sans', sans-serif" font-size="16.1" fill="#222222" text-anchor="end" textLength="63.0" lengthAdjust="spacingAndGlyphs">(10,198)</text>
<text x="2482.9" y="1065.7" font-family="'Liberation Sans', sans-serif" font-size="16.1" fill="#222222" text-anchor="end" textLength="53.6" lengthAdjust="spacingAndGlyphs">(2,445)</text>
<text x="2597.9" y="1065.7" font-family="'Liberation Sans', sans-serif" font-size="16.1" fill="#222222" text-anchor="end" textLength="41.1" lengthAdjust="spacingAndGlyphs">2,445</text>
<text x="2722.9" y="1065.7" font-family="'Liberation Sans', sans-serif" font-size="16.1" fill="#222222" text-anchor="end" textLength="39.5" lengthAdjust="spacingAndGlyphs">(761)</text>
<text x="2837.9" y="1065.7" font-family="'Liberation Sans', sans-serif" font-size="16.1" fill="#222222" text-anchor="end" textLength="27.4" lengthAdjust="spacingAndGlyphs">761</text>
<text x="923.4" y="1085.1" font-family="'Liberation Serif', serif" font-size="17" font-weight="700" fill="#fff" text-anchor="end" textLength="57.3" lengthAdjust="spacingAndGlyphs">(7,793)</text>
<text x="1036.6" y="1085.1" font-family="'Liberation Serif', serif" font-size="17" font-weight="700" fill="#fff" text-anchor="end" textLength="44.2" lengthAdjust="spacingAndGlyphs">3,493</text>
<text x="1156.6" y="1085.1" font-family="'Liberation Serif', serif" font-size="17" font-weight="700" fill="#fff" text-anchor="end" textLength="44.2" lengthAdjust="spacingAndGlyphs">5,212</text>
<text x="1276.6" y="1085.1" font-family="'Liberation Serif', serif" font-size="17" font-weight="700" fill="#fff" text-anchor="end" textLength="44.2" lengthAdjust="spacingAndGlyphs">3,461</text>
<text x="1396.6" y="1085.1" font-family="'Liberation Serif', serif" font-size="17" font-weight="700" fill="#fff" text-anchor="end" textLength="44.2" lengthAdjust="spacingAndGlyphs">4,324</text>
<text x="1516.6" y="1085.1" font-family="'Liberation Serif', serif" font-size="17" font-weight="700" fill="#fff" text-anchor="end" textLength="44.2" lengthAdjust="spacingAndGlyphs">3,502</text>
<text x="1636.6" y="1085.1" font-family="'Liberation Serif', serif" font-size="17" font-weight="700" fill="#fff" text-anchor="end" textLength="44.2" lengthAdjust="spacingAndGlyphs">4,360</text>
<text x="1756.6" y="1085.1" font-family="'Liberation Serif', serif" font-size="17" font-weight="700" fill="#fff" text-anchor="end" textLength="44.2" lengthAdjust="spacingAndGlyphs">3,956</text>
<text x="1876.6" y="1085.1" font-family="'Liberation Serif', serif" font-size="17" font-weight="700" fill="#fff" text-anchor="end" textLength="44.2" lengthAdjust="spacingAndGlyphs">3,552</text>
<text x="1996.6" y="1085.1" font-family="'Liberation Serif', serif" font-size="17" font-weight="700" fill="#fff" text-anchor="end" textLength="44.2" lengthAdjust="spacingAndGlyphs">4,410</text>
<text x="2116.6" y="1085.1" font-family="'Liberation Serif', serif" font-size="17" font-weight="700" fill="#fff" text-anchor="end" textLength="44.2" lengthAdjust="spacingAndGlyphs">3,585</text>
<text x="2236.6" y="1085.1" font-family="'Liberation Serif', serif" font-size="17" font-weight="700" fill="#fff" text-anchor="end" textLength="44.2" lengthAdjust="spacingAndGlyphs">4,443</text>
<text x="2356.6" y="1085.1" font-family="'Liberation Serif', serif" font-size="17" font-weight="700" fill="#fff" text-anchor="end" textLength="44.2" lengthAdjust="spacingAndGlyphs">2,548</text>
<text x="2476.6" y="1085.1" font-family="'Liberation Serif', serif" font-size="17" font-weight="700" fill="#fff" text-anchor="end" textLength="54.0" lengthAdjust="spacingAndGlyphs">10,337</text>
<text x="2596.6" y="1085.1" font-family="'Liberation Serif', serif" font-size="17" font-weight="700" fill="#fff" text-anchor="end" textLength="54.0" lengthAdjust="spacingAndGlyphs">15,264</text>
<text x="2716.6" y="1085.1" font-family="'Liberation Serif', serif" font-size="17" font-weight="700" fill="#fff" text-anchor="end" textLength="54.0" lengthAdjust="spacingAndGlyphs">12,094</text>
<text x="2836.6" y="1085.1" font-family="'Liberation Serif', serif" font-size="17" font-weight="700" fill="#fff" text-anchor="end" textLength="54.0" lengthAdjust="spacingAndGlyphs">13,653</text>
<text x="922.9" y="1151.9" font-family="'Liberation Sans', sans-serif" font-size="16.1" fill="#222222" text-anchor="end" textLength="53.6" lengthAdjust="spacingAndGlyphs">(7,500)</text>
<text x="1042.9" y="1151.9" font-family="'Liberation Sans', sans-serif" font-size="16.1" fill="#222222" text-anchor="end" textLength="53.6" lengthAdjust="spacingAndGlyphs">(6,250)</text>
<text x="1162.9" y="1151.9" font-family="'Liberation Sans', sans-serif" font-size="16.1" fill="#222222" text-anchor="end" textLength="53.6" lengthAdjust="spacingAndGlyphs">(6,500)</text>
<text x="1282.9" y="1151.9" font-family="'Liberation Sans', sans-serif" font-size="16.1" fill="#222222" text-anchor="end" textLength="53.6" lengthAdjust="spacingAndGlyphs">(2,983)</text>
<text x="1402.9" y="1151.9" font-family="'Liberation Sans', sans-serif" font-size="16.1" fill="#222222" text-anchor="end" textLength="53.6" lengthAdjust="spacingAndGlyphs">(2,233)</text>
<text x="1522.9" y="1151.9" font-family="'Liberation Sans', sans-serif" font-size="16.1" fill="#222222" text-anchor="end" textLength="53.6" lengthAdjust="spacingAndGlyphs">(1,333)</text>
<text x="1637.6" y="1150.4" font-family="'Liberation Sans', sans-serif" font-size="16.1" fill="#222222" text-anchor="end">-</text>
<text x="1757.6" y="1150.4" font-family="'Liberation Sans', sans-serif" font-size="16.1" fill="#222222" text-anchor="end">-</text>
<text x="1877.6" y="1150.4" font-family="'Liberation Sans', sans-serif" font-size="16.1" fill="#222222" text-anchor="end">-</text>
<text x="1997.6" y="1150.4" font-family="'Liberation Sans', sans-serif" font-size="16.1" fill="#222222" text-anchor="end">-</text>
<text x="2117.6" y="1150.4" font-family="'Liberation Sans', sans-serif" font-size="16.1" fill="#222222" text-anchor="end">-</text>
<text x="2237.6" y="1150.4" font-family="'Liberation Sans', sans-serif" font-size="16.1" fill="#222222" text-anchor="end">-</text>
<text x="2357.6" y="1150.4" font-family="'Liberation Sans', sans-serif" font-size="16.1" fill="#222222" text-anchor="end">-</text>
<text x="2477.6" y="1150.4" font-family="'Liberation Sans', sans-serif" font-size="16.1" fill="#222222" text-anchor="end">-</text>
<text x="2597.6" y="1150.4" font-family="'Liberation Sans', sans-serif" font-size="16.1" fill="#222222" text-anchor="end">-</text>
<text x="2717.6" y="1150.4" font-family="'Liberation Sans', sans-serif" font-size="16.1" fill="#222222" text-anchor="end">-</text>
<text x="2837.6" y="1150.4" font-family="'Liberation Sans', sans-serif" font-size="16.1" fill="#222222" text-anchor="end">-</text>
<text x="923.4" y="1171.2" font-family="'Liberation Serif', serif" font-size="17" font-weight="700" fill="#fff" text-anchor="end" textLength="57.3" lengthAdjust="spacingAndGlyphs">(7,500)</text>
<text x="1043.4" y="1171.2" font-family="'Liberation Serif', serif" font-size="17" font-weight="700" fill="#fff" text-anchor="end" textLength="57.3" lengthAdjust="spacingAndGlyphs">(6,250)</text>
<text x="1163.4" y="1171.2" font-family="'Liberation Serif', serif" font-size="17" font-weight="700" fill="#fff" text-anchor="end" textLength="57.3" lengthAdjust="spacingAndGlyphs">(6,500)</text>
<text x="1283.4" y="1171.2" font-family="'Liberation Serif', serif" font-size="17" font-weight="700" fill="#fff" text-anchor="end" textLength="57.3" lengthAdjust="spacingAndGlyphs">(2,983)</text>
<text x="1403.4" y="1171.2" font-family="'Liberation Serif', serif" font-size="17" font-weight="700" fill="#fff" text-anchor="end" textLength="57.3" lengthAdjust="spacingAndGlyphs">(2,233)</text>
<text x="1523.4" y="1171.2" font-family="'Liberation Serif', serif" font-size="17" font-weight="700" fill="#fff" text-anchor="end" textLength="57.3" lengthAdjust="spacingAndGlyphs">(1,333)</text>
<rect x="1630.4" y="1166.2" width="6.3" height="1.6" fill="#fff"/>
<rect x="1750.4" y="1166.2" width="6.3" height="1.6" fill="#fff"/>
<rect x="1870.4" y="1166.2" width="6.3" height="1.6" fill="#fff"/>
<rect x="1990.4" y="1166.2" width="6.3" height="1.6" fill="#fff"/>
<rect x="2110.4" y="1166.2" width="6.3" height="1.6" fill="#fff"/>
<rect x="2230.4" y="1166.2" width="6.3" height="1.6" fill="#fff"/>
<rect x="2350.4" y="1166.2" width="6.3" height="1.6" fill="#fff"/>
<rect x="2470.4" y="1166.2" width="6.3" height="1.6" fill="#fff"/>
<rect x="2590.4" y="1166.2" width="6.3" height="1.6" fill="#fff"/>
<rect x="2710.4" y="1166.2" width="6.3" height="1.6" fill="#fff"/>
<rect x="2830.4" y="1166.2" width="6.3" height="1.6" fill="#fff"/>
<text x="917.9" y="1237.9" font-family="'Liberation Sans', sans-serif" font-size="16.1" fill="#222222" text-anchor="end" textLength="59.4" lengthAdjust="spacingAndGlyphs">700,000</text>
<text x="1037.6" y="1236.4" font-family="'Liberation Sans', sans-serif" font-size="16.1" fill="#222222" text-anchor="end">-</text>
<text x="1157.6" y="1236.4" font-family="'Liberation Sans', sans-serif" font-size="16.1" fill="#222222" text-anchor="end">-</text>
<text x="1277.6" y="1236.4" font-family="'Liberation Sans', sans-serif" font-size="16.1" fill="#222222" text-anchor="end">-</text>
<text x="1397.6" y="1236.4" font-family="'Liberation Sans', sans-serif" font-size="16.1" fill="#222222" text-anchor="end">-</text>
<text x="1517.6" y="1236.4" font-family="'Liberation Sans', sans-serif" font-size="16.1" fill="#222222" text-anchor="end">-</text>
<text x="1637.6" y="1236.4" font-family="'Liberation Sans', sans-serif" font-size="16.1" fill="#222222" text-anchor="end">-</text>
<text x="1757.6" y="1236.4" font-family="'Liberation Sans', sans-serif" font-size="16.1" fill="#222222" text-anchor="end">-</text>
<text x="1877.6" y="1236.4" font-family="'Liberation Sans', sans-serif" font-size="16.1" fill="#222222" text-anchor="end">-</text>
<text x="1997.6" y="1236.4" font-family="'Liberation Sans', sans-serif" font-size="16.1" fill="#222222" text-anchor="end">-</text>
<text x="2117.6" y="1236.4" font-family="'Liberation Sans', sans-serif" font-size="16.1" fill="#222222" text-anchor="end">-</text>
<text x="2237.6" y="1236.4" font-family="'Liberation Sans', sans-serif" font-size="16.1" fill="#222222" text-anchor="end">-</text>
<text x="2357.6" y="1236.4" font-family="'Liberation Sans', sans-serif" font-size="16.1" fill="#222222" text-anchor="end">-</text>
<text x="2477.6" y="1236.4" font-family="'Liberation Sans', sans-serif" font-size="16.1" fill="#222222" text-anchor="end">-</text>
<text x="2597.6" y="1236.4" font-family="'Liberation Sans', sans-serif" font-size="16.1" fill="#222222" text-anchor="end">-</text>
<text x="2717.6" y="1236.4" font-family="'Liberation Sans', sans-serif" font-size="16.1" fill="#222222" text-anchor="end">-</text>
<text x="2837.6" y="1236.4" font-family="'Liberation Sans', sans-serif" font-size="16.1" fill="#222222" text-anchor="end">-</text>
<text x="917.9" y="1257.8" font-family="'Liberation Sans', sans-serif" font-size="16.1" fill="#222222" text-anchor="end" textLength="59.4" lengthAdjust="spacingAndGlyphs">500,000</text>
<text x="1037.6" y="1256.3" font-family="'Liberation Sans', sans-serif" font-size="16.1" fill="#222222" text-anchor="end">-</text>
<text x="1157.9" y="1257.8" font-family="'Liberation Sans', sans-serif" font-size="16.1" fill="#222222" text-anchor="end" textLength="59.4" lengthAdjust="spacingAndGlyphs">196,667</text>
<text x="1282.9" y="1257.8" font-family="'Liberation Sans', sans-serif" font-size="16.1" fill="#222222" text-anchor="end" textLength="53.6" lengthAdjust="spacingAndGlyphs">(3,333)</text>
<text x="1402.9" y="1257.8" font-family="'Liberation Sans', sans-serif" font-size="16.1" fill="#222222" text-anchor="end" textLength="53.6" lengthAdjust="spacingAndGlyphs">(3,333)</text>
<text x="1522.9" y="1257.8" font-family="'Liberation Sans', sans-serif" font-size="16.1" fill="#222222" text-anchor="end" textLength="53.6" lengthAdjust="spacingAndGlyphs">(3,333)</text>
<text x="1642.9" y="1257.8" font-family="'Liberation Sans', sans-serif" font-size="16.1" fill="#222222" text-anchor="end" textLength="53.6" lengthAdjust="spacingAndGlyphs">(3,333)</text>
<text x="1762.9" y="1257.8" font-family="'Liberation Sans', sans-serif" font-size="16.1" fill="#222222" text-anchor="end" textLength="53.6" lengthAdjust="spacingAndGlyphs">(3,333)</text>
<text x="1882.9" y="1257.8" font-family="'Liberation Sans', sans-serif" font-size="16.1" fill="#222222" text-anchor="end" textLength="53.6" lengthAdjust="spacingAndGlyphs">(3,333)</text>
<text x="2002.9" y="1257.8" font-family="'Liberation Sans', sans-serif" font-size="16.1" fill="#222222" text-anchor="end" textLength="53.6" lengthAdjust="spacingAndGlyphs">(3,333)</text>
<text x="2122.9" y="1257.8" font-family="'Liberation Sans', sans-serif" font-size="16.1" fill="#222222" text-anchor="end" textLength="53.6" lengthAdjust="spacingAndGlyphs">(3,333)</text>
<text x="2242.9" y="1257.8" font-family="'Liberation Sans', sans-serif" font-size="16.1" fill="#222222" text-anchor="end" textLength="53.6" lengthAdjust="spacingAndGlyphs">(3,333)</text>
<text x="2362.9" y="1257.8" font-family="'Liberation Sans', sans-serif" font-size="16.1" fill="#222222" text-anchor="end" textLength="53.6" lengthAdjust="spacingAndGlyphs">(8,590)</text>
<text x="2482.9" y="1257.8" font-family="'Liberation Sans', sans-serif" font-size="16.1" fill="#222222" text-anchor="end" textLength="53.6" lengthAdjust="spacingAndGlyphs">(8,617)</text>
<text x="2602.9" y="1257.8" font-family="'Liberation Sans', sans-serif" font-size="16.1" fill="#222222" text-anchor="end" textLength="53.6" lengthAdjust="spacingAndGlyphs">(8,643)</text>
<text x="2722.9" y="1257.8" font-family="'Liberation Sans', sans-serif" font-size="16.1" fill="#222222" text-anchor="end" textLength="53.6" lengthAdjust="spacingAndGlyphs">(8,670)</text>
<text x="2842.9" y="1257.8" font-family="'Liberation Sans', sans-serif" font-size="16.1" fill="#222222" text-anchor="end" textLength="53.6" lengthAdjust="spacingAndGlyphs">(8,696)</text>
<text x="917.6" y="1276.4" font-family="'Liberation Sans', sans-serif" font-size="16.1" fill="#222222" text-anchor="end">-</text>
<text x="1037.6" y="1276.4" font-family="'Liberation Sans', sans-serif" font-size="16.1" fill="#222222" text-anchor="end">-</text>
<text x="1157.6" y="1276.4" font-family="'Liberation Sans', sans-serif" font-size="16.1" fill="#222222" text-anchor="end">-</text>
<text x="1277.6" y="1276.4" font-family="'Liberation Sans', sans-serif" font-size="16.1" fill="#222222" text-anchor="end">-</text>
<text x="1397.6" y="1276.4" font-family="'Liberation Sans', sans-serif" font-size="16.1" fill="#222222" text-anchor="end">-</text>
<text x="1517.6" y="1276.4" font-family="'Liberation Sans', sans-serif" font-size="16.1" fill="#222222" text-anchor="end">-</text>
<text x="1637.6" y="1276.4" font-family="'Liberation Sans', sans-serif" font-size="16.1" fill="#222222" text-anchor="end">-</text>
<text x="1757.6" y="1276.4" font-family="'Liberation Sans', sans-serif" font-size="16.1" fill="#222222" text-anchor="end">-</text>
<text x="1877.6" y="1276.4" font-family="'Liberation Sans', sans-serif" font-size="16.1" fill="#222222" text-anchor="end">-</text>
<text x="1997.6" y="1276.4" font-family="'Liberation Sans', sans-serif" font-size="16.1" fill="#222222" text-anchor="end">-</text>
<text x="2117.6" y="1276.4" font-family="'Liberation Sans', sans-serif" font-size="16.1" fill="#222222" text-anchor="end">-</text>
<text x="2237.6" y="1276.4" font-family="'Liberation Sans', sans-serif" font-size="16.1" fill="#222222" text-anchor="end">-</text>
<text x="2357.6" y="1276.4" font-family="'Liberation Sans', sans-serif" font-size="16.1" fill="#222222" text-anchor="end">-</text>
<text x="2477.6" y="1276.4" font-family="'Liberation Sans', sans-serif" font-size="16.1" fill="#222222" text-anchor="end">-</text>
<text x="2597.6" y="1276.4" font-family="'Liberation Sans', sans-serif" font-size="16.1" fill="#222222" text-anchor="end">-</text>
<text x="2717.6" y="1276.4" font-family="'Liberation Sans', sans-serif" font-size="16.1" fill="#222222" text-anchor="end">-</text>
<text x="2837.6" y="1276.4" font-family="'Liberation Sans', sans-serif" font-size="16.1" fill="#222222" text-anchor="end">-</text>
<text x="916.6" y="1297.2" font-family="'Liberation Serif', serif" font-size="17" font-weight="700" fill="#fff" text-anchor="end" textLength="78.5" lengthAdjust="spacingAndGlyphs">1,200,000</text>
<rect x="1030.4" y="1292.2" width="6.3" height="1.6" fill="#fff"/>
<text x="1156.6" y="1297.2" font-family="'Liberation Serif', serif" font-size="17" font-weight="700" fill="#fff" text-anchor="end" textLength="63.8" lengthAdjust="spacingAndGlyphs">196,667</text>
<text x="1283.4" y="1297.2" font-family="'Liberation Serif', serif" font-size="17" font-weight="700" fill="#fff" text-anchor="end" textLength="57.3" lengthAdjust="spacingAndGlyphs">(3,333)</text>
<text x="1403.4" y="1297.2" font-family="'Liberation Serif', serif" font-size="17" font-weight="700" fill="#fff" text-anchor="end" textLength="57.3" lengthAdjust="spacingAndGlyphs">(3,333)</text>
<text x="1523.4" y="1297.2" font-family="'Liberation Serif', serif" font-size="17" font-weight="700" fill="#fff" text-anchor="end" textLength="57.3" lengthAdjust="spacingAndGlyphs">(3,333)</text>
<text x="1643.4" y="1297.2" font-family="'Liberation Serif', serif" font-size="17" font-weight="700" fill="#fff" text-anchor="end" textLength="57.3" lengthAdjust="spacingAndGlyphs">(3,333)</text>
<text x="1763.4" y="1297.2" font-family="'Liberation Serif', serif" font-size="17" font-weight="700" fill="#fff" text-anchor="end" textLength="57.3" lengthAdjust="spacingAndGlyphs">(3,333)</text>
<text x="1883.4" y="1297.2" font-family="'Liberation Serif', serif" font-size="17" font-weight="700" fill="#fff" text-anchor="end" textLength="57.3" lengthAdjust="spacingAndGlyphs">(3,333)</text>
<text x="2003.4" y="1297.2" font-family="'Liberation Serif', serif" font-size="17" font-weight="700" fill="#fff" text-anchor="end" textLength="57.3" lengthAdjust="spacingAndGlyphs">(3,333)</text>
<text x="2123.4" y="1297.2" font-family="'Liberation Serif', serif" font-size="17" font-weight="700" fill="#fff" text-anchor="end" textLength="57.3" lengthAdjust="spacingAndGlyphs">(3,333)</text>
<text x="2243.4" y="1297.2" font-family="'Liberation Serif', serif" font-size="17" font-weight="700" fill="#fff" text-anchor="end" textLength="57.3" lengthAdjust="spacingAndGlyphs">(3,333)</text>
<text x="2363.4" y="1297.2" font-family="'Liberation Serif', serif" font-size="17" font-weight="700" fill="#fff" text-anchor="end" textLength="57.3" lengthAdjust="spacingAndGlyphs">(8,590)</text>
<text x="2483.4" y="1297.2" font-family="'Liberation Serif', serif" font-size="17" font-weight="700" fill="#fff" text-anchor="end" textLength="57.3" lengthAdjust="spacingAndGlyphs">(8,617)</text>
<text x="2603.4" y="1297.2" font-family="'Liberation Serif', serif" font-size="17" font-weight="700" fill="#fff" text-anchor="end" textLength="57.3" lengthAdjust="spacingAndGlyphs">(8,643)</text>
<text x="2723.4" y="1297.2" font-family="'Liberation Serif', serif" font-size="17" font-weight="700" fill="#fff" text-anchor="end" textLength="57.3" lengthAdjust="spacingAndGlyphs">(8,670)</text>
<text x="2843.4" y="1297.2" font-family="'Liberation Serif', serif" font-size="17" font-weight="700" fill="#fff" text-anchor="end" textLength="57.3" lengthAdjust="spacingAndGlyphs">(8,696)</text>
<text x="917.6" y="1363.1" font-family="'Liberation Sans', sans-serif" font-size="16.1" fill="#222222" text-anchor="end">-</text>
<text x="1037.9" y="1364.6" font-family="'Liberation Sans', sans-serif" font-size="16.1" fill="#222222" text-anchor="end" textLength="73.1" lengthAdjust="spacingAndGlyphs">1,184,707</text>
<text x="1157.9" y="1364.6" font-family="'Liberation Sans', sans-serif" font-size="16.1" fill="#222222" text-anchor="end" textLength="73.1" lengthAdjust="spacingAndGlyphs">1,181,950</text>
<text x="1277.9" y="1364.6" font-family="'Liberation Sans', sans-serif" font-size="16.1" fill="#222222" text-anchor="end" textLength="73.1" lengthAdjust="spacingAndGlyphs">1,377,328</text>
<text x="1397.9" y="1364.6" font-family="'Liberation Sans', sans-serif" font-size="16.1" fill="#222222" text-anchor="end" textLength="73.1" lengthAdjust="spacingAndGlyphs">1,374,472</text>
<text x="1517.9" y="1364.6" font-family="'Liberation Sans', sans-serif" font-size="16.1" fill="#222222" text-anchor="end" textLength="73.1" lengthAdjust="spacingAndGlyphs">1,373,230</text>
<text x="1637.9" y="1364.6" font-family="'Liberation Sans', sans-serif" font-size="16.1" fill="#222222" text-anchor="end" textLength="73.1" lengthAdjust="spacingAndGlyphs">1,372,065</text>
<text x="1757.9" y="1364.6" font-family="'Liberation Sans', sans-serif" font-size="16.1" fill="#222222" text-anchor="end" textLength="73.1" lengthAdjust="spacingAndGlyphs">1,373,091</text>
<text x="1877.9" y="1364.6" font-family="'Liberation Sans', sans-serif" font-size="16.1" fill="#222222" text-anchor="end" textLength="73.1" lengthAdjust="spacingAndGlyphs">1,373,714</text>
<text x="1997.9" y="1364.6" font-family="'Liberation Sans', sans-serif" font-size="16.1" fill="#222222" text-anchor="end" textLength="73.1" lengthAdjust="spacingAndGlyphs">1,373,932</text>
<text x="2117.9" y="1364.6" font-family="'Liberation Sans', sans-serif" font-size="16.1" fill="#222222" text-anchor="end" textLength="73.1" lengthAdjust="spacingAndGlyphs">1,375,009</text>
<text x="2237.9" y="1364.6" font-family="'Liberation Sans', sans-serif" font-size="16.1" fill="#222222" text-anchor="end" textLength="73.1" lengthAdjust="spacingAndGlyphs">1,375,261</text>
<text x="2357.9" y="1364.6" font-family="'Liberation Sans', sans-serif" font-size="16.1" fill="#222222" text-anchor="end" textLength="73.1" lengthAdjust="spacingAndGlyphs">1,376,371</text>
<text x="2477.9" y="1364.6" font-family="'Liberation Sans', sans-serif" font-size="16.1" fill="#222222" text-anchor="end" textLength="73.1" lengthAdjust="spacingAndGlyphs">1,370,329</text>
<text x="2597.9" y="1364.6" font-family="'Liberation Sans', sans-serif" font-size="16.1" fill="#222222" text-anchor="end" textLength="73.1" lengthAdjust="spacingAndGlyphs">1,372,049</text>
<text x="2717.9" y="1364.6" font-family="'Liberation Sans', sans-serif" font-size="16.1" fill="#222222" text-anchor="end" textLength="73.1" lengthAdjust="spacingAndGlyphs">1,378,669</text>
<text x="2837.9" y="1364.6" font-family="'Liberation Sans', sans-serif" font-size="16.1" fill="#222222" text-anchor="end" textLength="73.1" lengthAdjust="spacingAndGlyphs">1,382,094</text>
<text x="917.9" y="1387.4" font-family="'Liberation Sans', sans-serif" font-size="16.1" fill="#222222" text-anchor="end" textLength="73.1" lengthAdjust="spacingAndGlyphs">1,184,707</text>
<text x="1042.9" y="1387.4" font-family="'Liberation Sans', sans-serif" font-size="16.1" fill="#222222" text-anchor="end" textLength="53.6" lengthAdjust="spacingAndGlyphs">(2,757)</text>
<text x="1157.9" y="1387.4" font-family="'Liberation Sans', sans-serif" font-size="16.1" fill="#222222" text-anchor="end" textLength="59.4" lengthAdjust="spacingAndGlyphs">195,378</text>
<text x="1282.9" y="1387.4" font-family="'Liberation Sans', sans-serif" font-size="16.1" fill="#222222" text-anchor="end" textLength="53.6" lengthAdjust="spacingAndGlyphs">(2,856)</text>
<text x="1402.9" y="1387.4" font-family="'Liberation Sans', sans-serif" font-size="16.1" fill="#222222" text-anchor="end" textLength="53.6" lengthAdjust="spacingAndGlyphs">(1,243)</text>
<text x="1522.9" y="1387.4" font-family="'Liberation Sans', sans-serif" font-size="16.1" fill="#222222" text-anchor="end" textLength="53.6" lengthAdjust="spacingAndGlyphs">(1,165)</text>
<text x="1637.9" y="1387.4" font-family="'Liberation Sans', sans-serif" font-size="16.1" fill="#222222" text-anchor="end" textLength="41.1" lengthAdjust="spacingAndGlyphs">1,027</text>
<text x="1757.9" y="1387.4" font-family="'Liberation Sans', sans-serif" font-size="16.1" fill="#222222" text-anchor="end" textLength="27.4" lengthAdjust="spacingAndGlyphs">623</text>
<text x="1877.9" y="1387.4" font-family="'Liberation Sans', sans-serif" font-size="16.1" fill="#222222" text-anchor="end" textLength="27.4" lengthAdjust="spacingAndGlyphs">218</text>
<text x="1997.9" y="1387.4" font-family="'Liberation Sans', sans-serif" font-size="16.1" fill="#222222" text-anchor="end" textLength="41.1" lengthAdjust="spacingAndGlyphs">1,077</text>
<text x="2117.9" y="1387.4" font-family="'Liberation Sans', sans-serif" font-size="16.1" fill="#222222" text-anchor="end" textLength="27.4" lengthAdjust="spacingAndGlyphs">252</text>
<text x="2237.9" y="1387.4" font-family="'Liberation Sans', sans-serif" font-size="16.1" fill="#222222" text-anchor="end" textLength="39.9" lengthAdjust="spacingAndGlyphs">1,110</text>
<text x="2362.9" y="1387.4" font-family="'Liberation Sans', sans-serif" font-size="16.1" fill="#222222" text-anchor="end" textLength="53.6" lengthAdjust="spacingAndGlyphs">(6,042)</text>
<text x="2477.9" y="1387.4" font-family="'Liberation Sans', sans-serif" font-size="16.1" fill="#222222" text-anchor="end" textLength="41.1" lengthAdjust="spacingAndGlyphs">1,720</text>
<text x="2597.9" y="1387.4" font-family="'Liberation Sans', sans-serif" font-size="16.1" fill="#222222" text-anchor="end" textLength="41.1" lengthAdjust="spacingAndGlyphs">6,621</text>
<text x="2717.9" y="1387.4" font-family="'Liberation Sans', sans-serif" font-size="16.1" fill="#222222" text-anchor="end" textLength="41.1" lengthAdjust="spacingAndGlyphs">3,425</text>
<text x="2837.9" y="1387.4" font-family="'Liberation Sans', sans-serif" font-size="16.1" fill="#222222" text-anchor="end" textLength="41.1" lengthAdjust="spacingAndGlyphs">4,956</text>
<text x="916.6" y="1409.2" font-family="'Liberation Serif', serif" font-size="17" font-weight="700" fill="#fff" text-anchor="end" textLength="78.5" lengthAdjust="spacingAndGlyphs">1,184,707</text>
<text x="1036.6" y="1409.2" font-family="'Liberation Serif', serif" font-size="17" font-weight="700" fill="#fff" text-anchor="end" textLength="78.5" lengthAdjust="spacingAndGlyphs">1,181,950</text>
<text x="1156.6" y="1409.2" font-family="'Liberation Serif', serif" font-size="17" font-weight="700" fill="#fff" text-anchor="end" textLength="78.5" lengthAdjust="spacingAndGlyphs">1,377,328</text>
<text x="1276.6" y="1409.2" font-family="'Liberation Serif', serif" font-size="17" font-weight="700" fill="#fff" text-anchor="end" textLength="78.5" lengthAdjust="spacingAndGlyphs">1,374,472</text>
<text x="1396.6" y="1409.2" font-family="'Liberation Serif', serif" font-size="17" font-weight="700" fill="#fff" text-anchor="end" textLength="78.5" lengthAdjust="spacingAndGlyphs">1,373,230</text>
<text x="1516.6" y="1409.2" font-family="'Liberation Serif', serif" font-size="17" font-weight="700" fill="#fff" text-anchor="end" textLength="78.5" lengthAdjust="spacingAndGlyphs">1,372,065</text>
<text x="1636.6" y="1409.2" font-family="'Liberation Serif', serif" font-size="17" font-weight="700" fill="#fff" text-anchor="end" textLength="78.5" lengthAdjust="spacingAndGlyphs">1,373,091</text>
<text x="1756.6" y="1409.2" font-family="'Liberation Serif', serif" font-size="17" font-weight="700" fill="#fff" text-anchor="end" textLength="78.5" lengthAdjust="spacingAndGlyphs">1,373,714</text>
<text x="1876.6" y="1409.2" font-family="'Liberation Serif', serif" font-size="17" font-weight="700" fill="#fff" text-anchor="end" textLength="78.5" lengthAdjust="spacingAndGlyphs">1,373,932</text>
<text x="1996.6" y="1409.2" font-family="'Liberation Serif', serif" font-size="17" font-weight="700" fill="#fff" text-anchor="end" textLength="78.5" lengthAdjust="spacingAndGlyphs">1,375,009</text>
<text x="2116.6" y="1409.2" font-family="'Liberation Serif', serif" font-size="17" font-weight="700" fill="#fff" text-anchor="end" textLength="78.5" lengthAdjust="spacingAndGlyphs">1,375,261</text>
<text x="2236.6" y="1409.2" font-family="'Liberation Serif', serif" font-size="17" font-weight="700" fill="#fff" text-anchor="end" textLength="78.5" lengthAdjust="spacingAndGlyphs">1,376,371</text>
<text x="2356.6" y="1409.2" font-family="'Liberation Serif', serif" font-size="17" font-weight="700" fill="#fff" text-anchor="end" textLength="78.5" lengthAdjust="spacingAndGlyphs">1,370,329</text>
<text x="2476.6" y="1409.2" font-family="'Liberation Serif', serif" font-size="17" font-weight="700" fill="#fff" text-anchor="end" textLength="78.5" lengthAdjust="spacingAndGlyphs">1,372,049</text>
<text x="2596.6" y="1409.2" font-family="'Liberation Serif', serif" font-size="17" font-weight="700" fill="#fff" text-anchor="end" textLength="78.5" lengthAdjust="spacingAndGlyphs">1,378,669</text>
<text x="2716.6" y="1409.2" font-family="'Liberation Serif', serif" font-size="17" font-weight="700" fill="#fff" text-anchor="end" textLength="78.5" lengthAdjust="spacingAndGlyphs">1,382,094</text>
<text x="2836.6" y="1409.2" font-family="'Liberation Serif', serif" font-size="17" font-weight="700" fill="#fff" text-anchor="end" textLength="78.5" lengthAdjust="spacingAndGlyphs">1,387,050</text>
<text x="924.5" y="1505.3" font-family="'Liberation Sans', sans-serif" font-size="13.8" fill="#222222" text-anchor="end" textLength="45.9" lengthAdjust="spacingAndGlyphs">(7,500)</text>
<text x="1044.5" y="1505.3" font-family="'Liberation Sans', sans-serif" font-size="13.8" fill="#222222" text-anchor="end" textLength="45.9" lengthAdjust="spacingAndGlyphs">(6,250)</text>
<text x="1164.5" y="1505.3" font-family="'Liberation Sans', sans-serif" font-size="13.8" fill="#222222" text-anchor="end" textLength="45.9" lengthAdjust="spacingAndGlyphs">(6,500)</text>
<text x="1284.5" y="1505.3" font-family="'Liberation Sans', sans-serif" font-size="13.8" fill="#222222" text-anchor="end" textLength="45.9" lengthAdjust="spacingAndGlyphs">(2,983)</text>
<text x="1404.5" y="1505.3" font-family="'Liberation Sans', sans-serif" font-size="13.8" fill="#222222" text-anchor="end" textLength="45.9" lengthAdjust="spacingAndGlyphs">(2,233)</text>
<text x="1524.5" y="1505.3" font-family="'Liberation Sans', sans-serif" font-size="13.8" fill="#222222" text-anchor="end" textLength="45.9" lengthAdjust="spacingAndGlyphs">(1,333)</text>
<rect x="1635.1" y="1499.9" width="5" height="1.3" fill="#222222"/>
<rect x="1755.1" y="1499.9" width="5" height="1.3" fill="#222222"/>
<rect x="1875.1" y="1499.9" width="5" height="1.3" fill="#222222"/>
<rect x="1995.1" y="1499.9" width="5" height="1.3" fill="#222222"/>
<rect x="2115.1" y="1499.9" width="5" height="1.3" fill="#222222"/>
<rect x="2235.1" y="1499.9" width="5" height="1.3" fill="#222222"/>
<rect x="2355.1" y="1499.9" width="5" height="1.3" fill="#222222"/>
<rect x="2475.1" y="1499.9" width="5" height="1.3" fill="#222222"/>
<rect x="2595.1" y="1499.9" width="5" height="1.3" fill="#222222"/>
<rect x="2715.1" y="1499.9" width="5" height="1.3" fill="#222222"/>
<rect x="2835.1" y="1499.9" width="5" height="1.3" fill="#222222"/>
<text x="919.1" y="1525.3" font-family="'Liberation Sans', sans-serif" font-size="13.8" fill="#222222" text-anchor="end" textLength="62.6" lengthAdjust="spacingAndGlyphs">1,200,000</text>
<rect x="1035.1" y="1519.9" width="5" height="1.3" fill="#222222"/>
<text x="1159.1" y="1525.3" font-family="'Liberation Sans', sans-serif" font-size="13.8" fill="#222222" text-anchor="end" textLength="50.9" lengthAdjust="spacingAndGlyphs">196,667</text>
<text x="1284.5" y="1525.3" font-family="'Liberation Sans', sans-serif" font-size="13.8" fill="#222222" text-anchor="end" textLength="45.9" lengthAdjust="spacingAndGlyphs">(3,333)</text>
<text x="1404.5" y="1525.3" font-family="'Liberation Sans', sans-serif" font-size="13.8" fill="#222222" text-anchor="end" textLength="45.9" lengthAdjust="spacingAndGlyphs">(3,333)</text>
<text x="1524.5" y="1525.3" font-family="'Liberation Sans', sans-serif" font-size="13.8" fill="#222222" text-anchor="end" textLength="45.9" lengthAdjust="spacingAndGlyphs">(3,333)</text>
<text x="1644.5" y="1525.3" font-family="'Liberation Sans', sans-serif" font-size="13.8" fill="#222222" text-anchor="end" textLength="45.9" lengthAdjust="spacingAndGlyphs">(3,333)</text>
<text x="1764.5" y="1525.3" font-family="'Liberation Sans', sans-serif" font-size="13.8" fill="#222222" text-anchor="end" textLength="45.9" lengthAdjust="spacingAndGlyphs">(3,333)</text>
<text x="1884.5" y="1525.3" font-family="'Liberation Sans', sans-serif" font-size="13.8" fill="#222222" text-anchor="end" textLength="45.9" lengthAdjust="spacingAndGlyphs">(3,333)</text>
<text x="2004.5" y="1525.3" font-family="'Liberation Sans', sans-serif" font-size="13.8" fill="#222222" text-anchor="end" textLength="45.9" lengthAdjust="spacingAndGlyphs">(3,333)</text>
<text x="2124.5" y="1525.3" font-family="'Liberation Sans', sans-serif" font-size="13.8" fill="#222222" text-anchor="end" textLength="45.9" lengthAdjust="spacingAndGlyphs">(3,333)</text>
<text x="2244.5" y="1525.3" font-family="'Liberation Sans', sans-serif" font-size="13.8" fill="#222222" text-anchor="end" textLength="45.9" lengthAdjust="spacingAndGlyphs">(3,333)</text>
<text x="2364.5" y="1525.3" font-family="'Liberation Sans', sans-serif" font-size="13.8" fill="#222222" text-anchor="end" textLength="45.9" lengthAdjust="spacingAndGlyphs">(8,590)</text>
<text x="2484.5" y="1525.3" font-family="'Liberation Sans', sans-serif" font-size="13.8" fill="#222222" text-anchor="end" textLength="45.9" lengthAdjust="spacingAndGlyphs">(8,617)</text>
<text x="2604.5" y="1525.3" font-family="'Liberation Sans', sans-serif" font-size="13.8" fill="#222222" text-anchor="end" textLength="45.9" lengthAdjust="spacingAndGlyphs">(8,643)</text>
<text x="2724.5" y="1525.3" font-family="'Liberation Sans', sans-serif" font-size="13.8" fill="#222222" text-anchor="end" textLength="45.9" lengthAdjust="spacingAndGlyphs">(8,670)</text>
<text x="2844.5" y="1525.3" font-family="'Liberation Sans', sans-serif" font-size="13.8" fill="#222222" text-anchor="end" textLength="45.9" lengthAdjust="spacingAndGlyphs">(8,696)</text>
<text x="919.1" y="1545.1" font-family="'Liberation Sans', sans-serif" font-size="13.8" fill="#222222" text-anchor="end" textLength="43.1" lengthAdjust="spacingAndGlyphs">22,581</text>
<text x="1039.1" y="1545.1" font-family="'Liberation Sans', sans-serif" font-size="13.8" fill="#222222" text-anchor="end" textLength="43.1" lengthAdjust="spacingAndGlyphs">41,482</text>
<text x="1159.1" y="1545.1" font-family="'Liberation Sans', sans-serif" font-size="13.8" fill="#222222" text-anchor="end" textLength="43.1" lengthAdjust="spacingAndGlyphs">46,018</text>
<text x="1279.1" y="1545.1" font-family="'Liberation Sans', sans-serif" font-size="13.8" fill="#222222" text-anchor="end" textLength="43.1" lengthAdjust="spacingAndGlyphs">43,044</text>
<text x="1399.1" y="1545.1" font-family="'Liberation Sans', sans-serif" font-size="13.8" fill="#222222" text-anchor="end" textLength="43.1" lengthAdjust="spacingAndGlyphs">44,456</text>
<text x="1519.1" y="1545.1" font-family="'Liberation Sans', sans-serif" font-size="13.8" fill="#222222" text-anchor="end" textLength="43.1" lengthAdjust="spacingAndGlyphs">43,044</text>
<text x="1639.1" y="1545.1" font-family="'Liberation Sans', sans-serif" font-size="13.8" fill="#222222" text-anchor="end" textLength="43.1" lengthAdjust="spacingAndGlyphs">44,456</text>
<text x="1759.1" y="1545.1" font-family="'Liberation Sans', sans-serif" font-size="13.8" fill="#222222" text-anchor="end" textLength="43.1" lengthAdjust="spacingAndGlyphs">43,750</text>
<text x="1879.1" y="1545.1" font-family="'Liberation Sans', sans-serif" font-size="13.8" fill="#222222" text-anchor="end" textLength="43.1" lengthAdjust="spacingAndGlyphs">43,044</text>
<text x="1999.1" y="1545.1" font-family="'Liberation Sans', sans-serif" font-size="13.8" fill="#222222" text-anchor="end" textLength="43.1" lengthAdjust="spacingAndGlyphs">44,456</text>
<text x="2119.1" y="1545.1" font-family="'Liberation Sans', sans-serif" font-size="13.8" fill="#222222" text-anchor="end" textLength="43.1" lengthAdjust="spacingAndGlyphs">43,044</text>
<text x="2239.1" y="1545.1" font-family="'Liberation Sans', sans-serif" font-size="13.8" fill="#222222" text-anchor="end" textLength="43.1" lengthAdjust="spacingAndGlyphs">44,456</text>
<text x="2359.1" y="1545.1" font-family="'Liberation Sans', sans-serif" font-size="13.8" fill="#222222" text-anchor="end" textLength="43.1" lengthAdjust="spacingAndGlyphs">57,105</text>
<text x="2479.1" y="1545.1" font-family="'Liberation Sans', sans-serif" font-size="13.8" fill="#222222" text-anchor="end" textLength="43.1" lengthAdjust="spacingAndGlyphs">66,015</text>
<text x="2599.1" y="1545.1" font-family="'Liberation Sans', sans-serif" font-size="13.8" fill="#222222" text-anchor="end" textLength="43.1" lengthAdjust="spacingAndGlyphs">73,235</text>
<text x="2719.1" y="1545.1" font-family="'Liberation Sans', sans-serif" font-size="13.8" fill="#222222" text-anchor="end" textLength="43.1" lengthAdjust="spacingAndGlyphs">68,502</text>
<text x="2839.1" y="1545.1" font-family="'Liberation Sans', sans-serif" font-size="13.8" fill="#222222" text-anchor="end" textLength="43.1" lengthAdjust="spacingAndGlyphs">70,748</text>
<text x="924.5" y="1565.3" font-family="'Liberation Sans', sans-serif" font-size="13.8" fill="#222222" text-anchor="end" textLength="54.0" lengthAdjust="spacingAndGlyphs">(26,284)</text>
<text x="1044.5" y="1565.3" font-family="'Liberation Sans', sans-serif" font-size="13.8" fill="#222222" text-anchor="end" textLength="54.0" lengthAdjust="spacingAndGlyphs">(33,912)</text>
<text x="1164.5" y="1565.3" font-family="'Liberation Sans', sans-serif" font-size="13.8" fill="#222222" text-anchor="end" textLength="54.0" lengthAdjust="spacingAndGlyphs">(35,743)</text>
<text x="1284.5" y="1565.3" font-family="'Liberation Sans', sans-serif" font-size="13.8" fill="#222222" text-anchor="end" textLength="54.0" lengthAdjust="spacingAndGlyphs">(34,543)</text>
<text x="1404.5" y="1565.3" font-family="'Liberation Sans', sans-serif" font-size="13.8" fill="#222222" text-anchor="end" textLength="52.9" lengthAdjust="spacingAndGlyphs">(35,112)</text>
<text x="1524.5" y="1565.3" font-family="'Liberation Sans', sans-serif" font-size="13.8" fill="#222222" text-anchor="end" textLength="54.0" lengthAdjust="spacingAndGlyphs">(34,543)</text>
<text x="1644.5" y="1565.3" font-family="'Liberation Sans', sans-serif" font-size="13.8" fill="#222222" text-anchor="end" textLength="52.9" lengthAdjust="spacingAndGlyphs">(35,112)</text>
<text x="1764.5" y="1565.3" font-family="'Liberation Sans', sans-serif" font-size="13.8" fill="#222222" text-anchor="end" textLength="54.0" lengthAdjust="spacingAndGlyphs">(34,828)</text>
<text x="1884.5" y="1565.3" font-family="'Liberation Sans', sans-serif" font-size="13.8" fill="#222222" text-anchor="end" textLength="54.0" lengthAdjust="spacingAndGlyphs">(34,543)</text>
<text x="2004.5" y="1565.3" font-family="'Liberation Sans', sans-serif" font-size="13.8" fill="#222222" text-anchor="end" textLength="52.9" lengthAdjust="spacingAndGlyphs">(35,112)</text>
<text x="2124.5" y="1565.3" font-family="'Liberation Sans', sans-serif" font-size="13.8" fill="#222222" text-anchor="end" textLength="54.0" lengthAdjust="spacingAndGlyphs">(34,543)</text>
<text x="2244.5" y="1565.3" font-family="'Liberation Sans', sans-serif" font-size="13.8" fill="#222222" text-anchor="end" textLength="52.9" lengthAdjust="spacingAndGlyphs">(35,112)</text>
<text x="2364.5" y="1565.3" font-family="'Liberation Sans', sans-serif" font-size="13.8" fill="#222222" text-anchor="end" textLength="54.0" lengthAdjust="spacingAndGlyphs">(46,772)</text>
<text x="2484.5" y="1565.3" font-family="'Liberation Sans', sans-serif" font-size="13.8" fill="#222222" text-anchor="end" textLength="54.0" lengthAdjust="spacingAndGlyphs">(47,930)</text>
<text x="2604.5" y="1565.3" font-family="'Liberation Sans', sans-serif" font-size="13.8" fill="#222222" text-anchor="end" textLength="54.0" lengthAdjust="spacingAndGlyphs">(50,258)</text>
<text x="2724.5" y="1565.3" font-family="'Liberation Sans', sans-serif" font-size="13.8" fill="#222222" text-anchor="end" textLength="54.0" lengthAdjust="spacingAndGlyphs">(48,732)</text>
<text x="2844.5" y="1565.3" font-family="'Liberation Sans', sans-serif" font-size="13.8" fill="#222222" text-anchor="end" textLength="54.0" lengthAdjust="spacingAndGlyphs">(49,456)</text>
<text x="919.1" y="1585.2" font-family="'Liberation Sans', sans-serif" font-size="13.8" fill="#222222" text-anchor="end" textLength="62.6" lengthAdjust="spacingAndGlyphs">1,188,797</text>
<text x="1039.1" y="1585.2" font-family="'Liberation Sans', sans-serif" font-size="13.8" fill="#222222" text-anchor="end" textLength="35.2" lengthAdjust="spacingAndGlyphs">1,320</text>
<text x="1159.1" y="1585.2" font-family="'Liberation Sans', sans-serif" font-size="13.8" fill="#222222" text-anchor="end" textLength="50.9" lengthAdjust="spacingAndGlyphs">200,442</text>
<text x="1279.1" y="1585.2" font-family="'Liberation Sans', sans-serif" font-size="13.8" fill="#222222" text-anchor="end" textLength="35.2" lengthAdjust="spacingAndGlyphs">2,185</text>
<text x="1399.1" y="1585.2" font-family="'Liberation Sans', sans-serif" font-size="13.8" fill="#222222" text-anchor="end" textLength="35.2" lengthAdjust="spacingAndGlyphs">3,777</text>
<text x="1519.1" y="1585.2" font-family="'Liberation Sans', sans-serif" font-size="13.8" fill="#222222" text-anchor="end" textLength="35.2" lengthAdjust="spacingAndGlyphs">3,835</text>
<text x="1639.1" y="1585.2" font-family="'Liberation Sans', sans-serif" font-size="13.8" fill="#222222" text-anchor="end" textLength="35.2" lengthAdjust="spacingAndGlyphs">6,010</text>
<text x="1759.1" y="1585.2" font-family="'Liberation Sans', sans-serif" font-size="13.8" fill="#222222" text-anchor="end" textLength="35.2" lengthAdjust="spacingAndGlyphs">5,589</text>
<text x="1879.1" y="1585.2" font-family="'Liberation Sans', sans-serif" font-size="13.8" fill="#222222" text-anchor="end" textLength="35.2" lengthAdjust="spacingAndGlyphs">5,168</text>
<text x="1999.1" y="1585.2" font-family="'Liberation Sans', sans-serif" font-size="13.8" fill="#222222" text-anchor="end" textLength="35.2" lengthAdjust="spacingAndGlyphs">6,010</text>
<text x="2119.1" y="1585.2" font-family="'Liberation Sans', sans-serif" font-size="13.8" fill="#222222" text-anchor="end" textLength="35.2" lengthAdjust="spacingAndGlyphs">5,168</text>
<text x="2239.1" y="1585.2" font-family="'Liberation Sans', sans-serif" font-size="13.8" fill="#222222" text-anchor="end" textLength="35.2" lengthAdjust="spacingAndGlyphs">6,010</text>
<text x="2359.1" y="1585.2" font-family="'Liberation Sans', sans-serif" font-size="13.8" fill="#222222" text-anchor="end" textLength="35.2" lengthAdjust="spacingAndGlyphs">1,743</text>
<text x="2479.1" y="1585.2" font-family="'Liberation Sans', sans-serif" font-size="13.8" fill="#222222" text-anchor="end" textLength="35.2" lengthAdjust="spacingAndGlyphs">9,469</text>
<text x="2599.1" y="1585.2" font-family="'Liberation Sans', sans-serif" font-size="13.8" fill="#222222" text-anchor="end" textLength="43.1" lengthAdjust="spacingAndGlyphs">14,333</text>
<text x="2719.1" y="1585.2" font-family="'Liberation Sans', sans-serif" font-size="13.8" fill="#222222" text-anchor="end" textLength="42.0" lengthAdjust="spacingAndGlyphs">11,100</text>
<text x="2839.1" y="1585.2" font-family="'Liberation Sans', sans-serif" font-size="13.8" fill="#222222" text-anchor="end" textLength="43.1" lengthAdjust="spacingAndGlyphs">12,595</text>
<text x="924.5" y="1605.1" font-family="'Liberation Sans', sans-serif" font-size="13.8" fill="#222222" text-anchor="end" textLength="45.9" lengthAdjust="spacingAndGlyphs">(2,500)</text>
<text x="1044.5" y="1605.1" font-family="'Liberation Sans', sans-serif" font-size="13.8" fill="#222222" text-anchor="end" textLength="45.9" lengthAdjust="spacingAndGlyphs">(2,500)</text>
<text x="1164.5" y="1605.1" font-family="'Liberation Sans', sans-serif" font-size="13.8" fill="#222222" text-anchor="end" textLength="45.9" lengthAdjust="spacingAndGlyphs">(3,833)</text>
<text x="1284.5" y="1605.1" font-family="'Liberation Sans', sans-serif" font-size="13.8" fill="#222222" text-anchor="end" textLength="44.8" lengthAdjust="spacingAndGlyphs">(3,811)</text>
<text x="1404.5" y="1605.1" font-family="'Liberation Sans', sans-serif" font-size="13.8" fill="#222222" text-anchor="end" textLength="45.9" lengthAdjust="spacingAndGlyphs">(3,789)</text>
<text x="1524.5" y="1605.1" font-family="'Liberation Sans', sans-serif" font-size="13.8" fill="#222222" text-anchor="end" textLength="45.9" lengthAdjust="spacingAndGlyphs">(3,767)</text>
<text x="1644.5" y="1605.1" font-family="'Liberation Sans', sans-serif" font-size="13.8" fill="#222222" text-anchor="end" textLength="45.9" lengthAdjust="spacingAndGlyphs">(3,744)</text>
<text x="1764.5" y="1605.1" font-family="'Liberation Sans', sans-serif" font-size="13.8" fill="#222222" text-anchor="end" textLength="45.9" lengthAdjust="spacingAndGlyphs">(3,722)</text>
<text x="1884.5" y="1605.1" font-family="'Liberation Sans', sans-serif" font-size="13.8" fill="#222222" text-anchor="end" textLength="45.9" lengthAdjust="spacingAndGlyphs">(3,700)</text>
<text x="2004.5" y="1605.1" font-family="'Liberation Sans', sans-serif" font-size="13.8" fill="#222222" text-anchor="end" textLength="45.9" lengthAdjust="spacingAndGlyphs">(3,678)</text>
<text x="2124.5" y="1605.1" font-family="'Liberation Sans', sans-serif" font-size="13.8" fill="#222222" text-anchor="end" textLength="45.9" lengthAdjust="spacingAndGlyphs">(3,656)</text>
<text x="2244.5" y="1605.1" font-family="'Liberation Sans', sans-serif" font-size="13.8" fill="#222222" text-anchor="end" textLength="45.9" lengthAdjust="spacingAndGlyphs">(3,633)</text>
<text x="2364.5" y="1605.1" font-family="'Liberation Sans', sans-serif" font-size="13.8" fill="#222222" text-anchor="end" textLength="44.8" lengthAdjust="spacingAndGlyphs">(3,611)</text>
<text x="2484.5" y="1605.1" font-family="'Liberation Sans', sans-serif" font-size="13.8" fill="#222222" text-anchor="end" textLength="45.9" lengthAdjust="spacingAndGlyphs">(3,563)</text>
<text x="2604.5" y="1605.1" font-family="'Liberation Sans', sans-serif" font-size="13.8" fill="#222222" text-anchor="end" textLength="45.9" lengthAdjust="spacingAndGlyphs">(3,514)</text>
<text x="2724.5" y="1605.1" font-family="'Liberation Sans', sans-serif" font-size="13.8" fill="#222222" text-anchor="end" textLength="45.9" lengthAdjust="spacingAndGlyphs">(3,465)</text>
<text x="2844.5" y="1605.1" font-family="'Liberation Sans', sans-serif" font-size="13.8" fill="#222222" text-anchor="end" textLength="45.9" lengthAdjust="spacingAndGlyphs">(3,416)</text>
<text x="924.5" y="1625.0" font-family="'Liberation Sans', sans-serif" font-size="13.8" fill="#222222" text-anchor="end" textLength="45.9" lengthAdjust="spacingAndGlyphs">(1,590)</text>
<text x="1044.5" y="1625.0" font-family="'Liberation Sans', sans-serif" font-size="13.8" fill="#222222" text-anchor="end" textLength="45.9" lengthAdjust="spacingAndGlyphs">(1,577)</text>
<text x="1164.5" y="1625.0" font-family="'Liberation Sans', sans-serif" font-size="13.8" fill="#222222" text-anchor="end" textLength="45.9" lengthAdjust="spacingAndGlyphs">(1,230)</text>
<text x="1284.5" y="1625.0" font-family="'Liberation Sans', sans-serif" font-size="13.8" fill="#222222" text-anchor="end" textLength="45.9" lengthAdjust="spacingAndGlyphs">(1,229)</text>
<text x="1404.5" y="1625.0" font-family="'Liberation Sans', sans-serif" font-size="13.8" fill="#222222" text-anchor="end" textLength="45.9" lengthAdjust="spacingAndGlyphs">(1,230)</text>
<text x="1524.5" y="1625.0" font-family="'Liberation Sans', sans-serif" font-size="13.8" fill="#222222" text-anchor="end" textLength="45.9" lengthAdjust="spacingAndGlyphs">(1,233)</text>
<text x="1644.5" y="1625.0" font-family="'Liberation Sans', sans-serif" font-size="13.8" fill="#222222" text-anchor="end" textLength="45.9" lengthAdjust="spacingAndGlyphs">(1,239)</text>
<text x="1764.5" y="1625.0" font-family="'Liberation Sans', sans-serif" font-size="13.8" fill="#222222" text-anchor="end" textLength="45.9" lengthAdjust="spacingAndGlyphs">(1,244)</text>
<text x="1884.5" y="1625.0" font-family="'Liberation Sans', sans-serif" font-size="13.8" fill="#222222" text-anchor="end" textLength="45.9" lengthAdjust="spacingAndGlyphs">(1,250)</text>
<text x="2004.5" y="1625.0" font-family="'Liberation Sans', sans-serif" font-size="13.8" fill="#222222" text-anchor="end" textLength="45.9" lengthAdjust="spacingAndGlyphs">(1,255)</text>
<text x="2124.5" y="1625.0" font-family="'Liberation Sans', sans-serif" font-size="13.8" fill="#222222" text-anchor="end" textLength="45.9" lengthAdjust="spacingAndGlyphs">(1,261)</text>
<text x="2244.5" y="1625.0" font-family="'Liberation Sans', sans-serif" font-size="13.8" fill="#222222" text-anchor="end" textLength="45.9" lengthAdjust="spacingAndGlyphs">(1,266)</text>
<text x="2364.5" y="1625.0" font-family="'Liberation Sans', sans-serif" font-size="13.8" fill="#222222" text-anchor="end" textLength="45.9" lengthAdjust="spacingAndGlyphs">(4,174)</text>
<text x="2484.5" y="1625.0" font-family="'Liberation Sans', sans-serif" font-size="13.8" fill="#222222" text-anchor="end" textLength="45.9" lengthAdjust="spacingAndGlyphs">(4,186)</text>
<text x="2604.5" y="1625.0" font-family="'Liberation Sans', sans-serif" font-size="13.8" fill="#222222" text-anchor="end" textLength="45.9" lengthAdjust="spacingAndGlyphs">(4,198)</text>
<text x="2724.5" y="1625.0" font-family="'Liberation Sans', sans-serif" font-size="13.8" fill="#222222" text-anchor="end" textLength="44.8" lengthAdjust="spacingAndGlyphs">(4,211)</text>
<text x="2844.5" y="1625.0" font-family="'Liberation Sans', sans-serif" font-size="13.8" fill="#222222" text-anchor="end" textLength="45.9" lengthAdjust="spacingAndGlyphs">(4,223)</text>
<text x="916.6" y="1644.9" font-family="'Liberation Serif', serif" font-size="17" font-weight="700" fill="#fff" text-anchor="end" textLength="78.5" lengthAdjust="spacingAndGlyphs">1,184,707</text>
<text x="1043.4" y="1644.9" font-family="'Liberation Serif', serif" font-size="17" font-weight="700" fill="#fff" text-anchor="end" textLength="57.3" lengthAdjust="spacingAndGlyphs">(2,757)</text>
<text x="1156.6" y="1644.9" font-family="'Liberation Serif', serif" font-size="17" font-weight="700" fill="#fff" text-anchor="end" textLength="63.8" lengthAdjust="spacingAndGlyphs">195,378</text>
<text x="1283.4" y="1644.9" font-family="'Liberation Serif', serif" font-size="17" font-weight="700" fill="#fff" text-anchor="end" textLength="57.3" lengthAdjust="spacingAndGlyphs">(2,856)</text>
<text x="1403.4" y="1644.9" font-family="'Liberation Serif', serif" font-size="17" font-weight="700" fill="#fff" text-anchor="end" textLength="57.3" lengthAdjust="spacingAndGlyphs">(1,243)</text>
<text x="1523.4" y="1644.9" font-family="'Liberation Serif', serif" font-size="17" font-weight="700" fill="#fff" text-anchor="end" textLength="57.3" lengthAdjust="spacingAndGlyphs">(1,165)</text>
<text x="1636.6" y="1644.9" font-family="'Liberation Serif', serif" font-size="17" font-weight="700" fill="#fff" text-anchor="end" textLength="44.2" lengthAdjust="spacingAndGlyphs">1,027</text>
<text x="1756.6" y="1644.9" font-family="'Liberation Serif', serif" font-size="17" font-weight="700" fill="#fff" text-anchor="end" textLength="29.5" lengthAdjust="spacingAndGlyphs">623</text>
<text x="1876.6" y="1644.9" font-family="'Liberation Serif', serif" font-size="17" font-weight="700" fill="#fff" text-anchor="end" textLength="29.5" lengthAdjust="spacingAndGlyphs">218</text>
<text x="1996.6" y="1644.9" font-family="'Liberation Serif', serif" font-size="17" font-weight="700" fill="#fff" text-anchor="end" textLength="44.2" lengthAdjust="spacingAndGlyphs">1,077</text>
<text x="2116.6" y="1644.9" font-family="'Liberation Serif', serif" font-size="17" font-weight="700" fill="#fff" text-anchor="end" textLength="29.5" lengthAdjust="spacingAndGlyphs">252</text>
<text x="2236.6" y="1644.9" font-family="'Liberation Serif', serif" font-size="17" font-weight="700" fill="#fff" text-anchor="end" textLength="43.1" lengthAdjust="spacingAndGlyphs">1,110</text>
<text x="2363.4" y="1644.9" font-family="'Liberation Serif', serif" font-size="17" font-weight="700" fill="#fff" text-anchor="end" textLength="57.3" lengthAdjust="spacingAndGlyphs">(6,042)</text>
<text x="2476.6" y="1644.9" font-family="'Liberation Serif', serif" font-size="17" font-weight="700" fill="#fff" text-anchor="end" textLength="44.2" lengthAdjust="spacingAndGlyphs">1,720</text>
<text x="2596.6" y="1644.9" font-family="'Liberation Serif', serif" font-size="17" font-weight="700" fill="#fff" text-anchor="end" textLength="44.2" lengthAdjust="spacingAndGlyphs">6,621</text>
<text x="2716.6" y="1644.9" font-family="'Liberation Serif', serif" font-size="17" font-weight="700" fill="#fff" text-anchor="end" textLength="44.2" lengthAdjust="spacingAndGlyphs">3,425</text>
<text x="2836.6" y="1644.9" font-family="'Liberation Serif', serif" font-size="17" font-weight="700" fill="#fff" text-anchor="end" textLength="44.2" lengthAdjust="spacingAndGlyphs">4,956</text>
<rect x="790.4" y="1404.2" width="6" height="1.6" fill="#fff"/>
<path d="M807.1 297 L807.1 1670" stroke="#a8a8a8" stroke-width="1.4"/>
<rect x="2860" y="278" width="31" height="1392" fill="#141414"/>
<path d="M2869 295 L2876 285.5 L2883 295 Z" fill="#9a9a9a" stroke="#9a9a9a" stroke-width="1.5" stroke-linejoin="round"/>
<rect x="2870" y="304" width="12" height="1019.5" rx="6" fill="#9f9f9f"/>
<path d="M2869.5 1654 L2876 1663.5 L2882.5 1654 Z" fill="#9a9a9a" stroke="#9a9a9a" stroke-width="1.5" stroke-linejoin="round"/>
<rect x="11" y="1670" width="2880" height="48" fill="#0a0a0a"/>
<path d="M11 1670.6 L2860 1670.6" stroke="#3a3a3a" stroke-width="1.2"/>
<path d="M55 1686.5 L46 1693 L55 1699.5" stroke="#bdbdbd" stroke-width="1.5" fill="none"/>
<path d="M94.5 1686.5 L103.5 1693 L94.5 1699.5" stroke="#bdbdbd" stroke-width="1.5" fill="none"/>
<text x="189.8" y="1702.8" font-family="'Liberation Sans', sans-serif" font-size="20" fill="#f0f0f0" text-anchor="start" textLength="82.9" lengthAdjust="spacingAndGlyphs">Contents</text>
<path d="M292.5 1680.5 L292.5 1707.5" stroke="#4a4a4a" stroke-width="1.2"/>
<rect x="298.9" y="1676" width="127.8" height="35.8" rx="5.5" fill="#ffeb70"/>
<text x="313.4" y="1702.8" font-family="'Liberation Sans', sans-serif" font-size="20" fill="#1a1a1a" text-anchor="start" textLength="100.5" lengthAdjust="spacingAndGlyphs">Dashboard</text>
<path d="M433.4 1680.5 L433.4 1707.5" stroke="#4a4a4a" stroke-width="1.2"/>
<rect x="439.8" y="1676" width="105.7" height="35.8" rx="5.5" fill="#ffeb70"/>
<text x="454.5" y="1702.8" font-family="'Liberation Sans', sans-serif" font-size="20" fill="#1a1a1a" text-anchor="start" textLength="78.2" lengthAdjust="spacingAndGlyphs">Revenue</text>
<path d="M552.4 1680.5 L552.4 1707.5" stroke="#4a4a4a" stroke-width="1.2"/>
<rect x="558.8" y="1676" width="79.0" height="35.8" rx="5.5" fill="#ffeb70"/>
<text x="571.0" y="1702.8" font-family="'Liberation Sans', sans-serif" font-size="20" fill="#1a1a1a" text-anchor="start" textLength="53.4" lengthAdjust="spacingAndGlyphs">COGS</text>
<path d="M644.6 1680.5 L644.6 1707.5" stroke="#4a4a4a" stroke-width="1.2"/>
<rect x="651" y="1676" width="76.2" height="35.8" rx="5.5" fill="#ffeb70"/>
<text x="664.8" y="1702.8" font-family="'Liberation Sans', sans-serif" font-size="20" fill="#1a1a1a" text-anchor="start" textLength="49.0" lengthAdjust="spacingAndGlyphs">OPEX</text>
<path d="M733.7 1680.5 L733.7 1707.5" stroke="#4a4a4a" stroke-width="1.2"/>
<rect x="740.1" y="1676" width="88.8" height="35.8" rx="5.5" fill="#ffeb70"/>
<text x="754.7" y="1702.8" font-family="'Liberation Sans', sans-serif" font-size="20" fill="#1a1a1a" text-anchor="start" textLength="59.9" lengthAdjust="spacingAndGlyphs">Payroll</text>
<path d="M835.6 1680.5 L835.6 1707.5" stroke="#4a4a4a" stroke-width="1.2"/>
<rect x="842" y="1676" width="86.9" height="35.8" rx="5.5" fill="#ffeb70"/>
<text x="855.5" y="1702.8" font-family="'Liberation Sans', sans-serif" font-size="20" fill="#1a1a1a" text-anchor="start" textLength="60.7" lengthAdjust="spacingAndGlyphs">CAPEX</text>
<path d="M935.5 1680.5 L935.5 1707.5" stroke="#4a4a4a" stroke-width="1.2"/>
<rect x="941.9" y="1676" width="112.8" height="35.8" rx="5.5" fill="#ffeb70"/>
<text x="954.9" y="1702.8" font-family="'Liberation Sans', sans-serif" font-size="20" fill="#1a1a1a" text-anchor="start" textLength="86.5" lengthAdjust="spacingAndGlyphs">CapTable</text>
<path d="M1061.6 1680.5 L1061.6 1707.5" stroke="#4a4a4a" stroke-width="1.2"/>
<rect x="1068" y="1676" width="89.9" height="35.8" rx="5.5" fill="#ffeb70"/>
<text x="1081.3" y="1702.8" font-family="'Liberation Sans', sans-serif" font-size="20" fill="#1a1a1a" text-anchor="start" textLength="63.3" lengthAdjust="spacingAndGlyphs">Capital</text>
<path d="M1164.6 1680.5 L1164.6 1707.5" stroke="#4a4a4a" stroke-width="1.2"/>
<rect x="1171" y="1676" width="41.8" height="35.8" rx="5.5" fill="#4db3e8"/>
<text x="1184.5" y="1702.8" font-family="'Liberation Sans', sans-serif" font-size="20" fill="#1a1a1a" text-anchor="start" textLength="15.6" lengthAdjust="spacingAndGlyphs">IS</text>
<path d="M1219.6 1680.5 L1219.6 1707.5" stroke="#4a4a4a" stroke-width="1.2"/>
<defs><linearGradient id="cfg" x1="0" y1="0" x2="0" y2="1"><stop offset="0" stop-color="#ffffff"/><stop offset="1" stop-color="#c9e2f6"/></linearGradient></defs>
<path d="M1222 1670 Q1226 1670 1226 1674 L1226 1707.6 Q1226 1711.6 1230 1711.6 L1269.7 1711.6 Q1273.7 1711.6 1273.7 1707.6 L1273.7 1674 Q1273.7 1670 1277.7 1670 Z" fill="url(#cfg)"/>
<text x="1238.4" y="1698.3" font-family="'Liberation Sans', sans-serif" font-size="20" fill="#1a1a1a" text-anchor="start" textLength="22.6" lengthAdjust="spacingAndGlyphs">CF</text>
<rect x="1238.4" y="1705" width="23.6" height="2.8" fill="#1e8a4a"/>
<path d="M1280.3 1680.5 L1280.3 1707.5" stroke="#4a4a4a" stroke-width="1.2"/>
<rect x="1286.7" y="1676" width="48.3" height="35.8" rx="5.5" fill="#4db3e8"/>
<text x="1301.0" y="1702.8" font-family="'Liberation Sans', sans-serif" font-size="20" fill="#1a1a1a" text-anchor="start" textLength="21.6" lengthAdjust="spacingAndGlyphs">BS</text>
<path d="M1341.8 1680.5 L1341.8 1707.5" stroke="#4a4a4a" stroke-width="1.2"/>
<rect x="1348.2" y="1676" width="114.2" height="35.8" rx="5.5" fill="#4db3e8"/>
<text x="1361.5" y="1702.8" font-family="'Liberation Sans', sans-serif" font-size="20" fill="#1a1a1a" text-anchor="start" textLength="86.9" lengthAdjust="spacingAndGlyphs">Scenarios</text>
<path d="M1469.3 1680.5 L1469.3 1707.5" stroke="#4a4a4a" stroke-width="1.2"/>
<rect x="1475.7" y="1676" width="114.8" height="35.8" rx="5.5" fill="#4db3e8"/>
<text x="1489.0" y="1702.8" font-family="'Liberation Sans', sans-serif" font-size="20" fill="#1a1a1a" text-anchor="start" textLength="87.5" lengthAdjust="spacingAndGlyphs">Valuation</text>
<path d="M1597.6 1680.5 L1597.6 1707.5" stroke="#4a4a4a" stroke-width="1.2"/>
<rect x="1604" y="1676" width="114.1" height="35.8" rx="5.5" fill="#4db3e8"/>
<text x="1618.3" y="1702.8" font-family="'Liberation Sans', sans-serif" font-size="20" fill="#1a1a1a" text-anchor="start" textLength="86.5" lengthAdjust="spacingAndGlyphs">Summary</text>
<path d="M1724.4 1680.5 L1724.4 1707.5" stroke="#4a4a4a" stroke-width="1.2"/>
<rect x="1730.8" y="1676" width="48.2" height="35.8" rx="5.5" fill="#4db3e8"/>
<text x="1744.8" y="1702.8" font-family="'Liberation Sans', sans-serif" font-size="20" fill="#1a1a1a" text-anchor="start" textLength="21.6" lengthAdjust="spacingAndGlyphs">BE</text>
<path d="M1785.6 1680.5 L1785.6 1707.5" stroke="#4a4a4a" stroke-width="1.2"/>
<rect x="1792" y="1676" width="71.9" height="35.8" rx="5.5" fill="#4db3e8"/>
<text x="1805.7" y="1702.8" font-family="'Liberation Sans', sans-serif" font-size="20" fill="#1a1a1a" text-anchor="start" textLength="45.5" lengthAdjust="spacingAndGlyphs">ROIC</text>
<path d="M1870.5 1680.5 L1870.5 1707.5" stroke="#4a4a4a" stroke-width="1.2"/>
<rect x="1876.9" y="1676" width="84.8" height="35.8" rx="5.5" fill="#4db3e8"/>
<text x="1890.5" y="1702.8" font-family="'Liberation Sans', sans-serif" font-size="20" fill="#1a1a1a" text-anchor="start" textLength="57.9" lengthAdjust="spacingAndGlyphs">Charts</text>
<path d="M1968.6 1680.5 L1968.6 1707.5" stroke="#4a4a4a" stroke-width="1.2"/>
<rect x="1975" y="1676" width="63.6" height="35.8" rx="5.5" fill="#4db3e8"/>
<text x="1988.7" y="1702.8" font-family="'Liberation Sans', sans-serif" font-size="20" fill="#1a1a1a" text-anchor="start" textLength="37.3" lengthAdjust="spacingAndGlyphs">KPIs</text>
<rect x="2052" y="1676" width="20" height="35.6" rx="5" fill="#4db3e8"/><rect x="2062" y="1676" width="10" height="35.6" fill="#4db3e8"/>
<clipPath id="sclip"><rect x="2052" y="1676" width="20" height="36"/></clipPath>
<text x="2065.0" y="1702.8" font-family="'Liberation Sans', sans-serif" font-size="20" fill="#1a1a1a" text-anchor="start" clip-path="url(#sclip)">S</text>
<path d="M2045.5 1683 L2045.5 1705" stroke="#4a4a4a" stroke-width="1.2"/>
<circle cx="2088.5" cy="1692.5" r="2" fill="#e6e6e6"/>
<circle cx="2095" cy="1692.5" r="2" fill="#e6e6e6"/>
<circle cx="2101.5" cy="1692.5" r="2" fill="#e6e6e6"/>
<path d="M2134 1693 L2152 1693 M2143 1684 L2143 1702" stroke="#e6e6e6" stroke-width="1.6"/>
<circle cx="2191.7" cy="1686" r="1.7" fill="#e6e6e6"/>
<circle cx="2191.7" cy="1693" r="1.7" fill="#e6e6e6"/>
<circle cx="2191.7" cy="1700" r="1.7" fill="#e6e6e6"/>
<rect x="2215" y="1680.5" width="645" height="25.5" rx="12.75" fill="#151515"/>
<path d="M2231 1687 L2224.5 1693 L2231 1699 Z" fill="#9a9a9a" stroke="#9a9a9a" stroke-width="1.5" stroke-linejoin="round"/>
<rect x="2242" y="1686.6" width="158" height="12.7" rx="6.35" fill="#9f9f9f"/>
<path d="M2846 1687 L2852.5 1693 L2846 1699 Z" fill="#9a9a9a" stroke="#9a9a9a" stroke-width="1.5" stroke-linejoin="round"/>
<rect x="11" y="1718" width="2880" height="33" fill="#141414"/>
<path d="M11 1718.5 L2891 1718.5" stroke="#2e2e2e" stroke-width="1"/>
<text x="27.0" y="1741.0" font-family="'Liberation Sans', sans-serif" font-size="16.5" fill="#e0e0e0" text-anchor="start" textLength="42.5" lengthAdjust="spacingAndGlyphs">Ready</text>
<g stroke="#f0f0f0" stroke-width="1.8" fill="none"><path d="M106 1743.5 L100 1743.5 L100 1727 L120.5 1727 L120.5 1737"/><path d="M100 1731 L120.5 1731 M102.5 1735 L107.5 1735 M102.5 1739 L106 1739"/></g><circle cx="113.7" cy="1738.8" r="6.4" fill="#141414" stroke="#f0f0f0" stroke-width="1.9"/><circle cx="113.7" cy="1738.8" r="2.8" fill="#f0f0f0"/>
<g stroke="#f0f0f0" stroke-width="1.8" fill="none" stroke-linecap="round" stroke-linejoin="round"><circle cx="155.5" cy="1727.3" r="2.6"/><path d="M147 1730.5 Q151 1733.5 155.5 1733 Q160 1733.5 164 1730.5 M155.5 1733 L153.5 1739 L150 1745.5 M154.5 1738.5 L157 1742"/><path d="M158.5 1737.5 L167 1746 M167 1737.5 L158.5 1746"/></g>
<text x="173.0" y="1741.0" font-family="'Liberation Sans', sans-serif" font-size="16.5" font-weight="700" fill="#f0f0f0" text-anchor="start" textLength="188.0" lengthAdjust="spacingAndGlyphs">Accessibility: Investigate</text>
<rect x="2444.8" y="1719" width="60.2" height="32" fill="#262626"/>
<g stroke="#f0f0f0" stroke-width="1.7" fill="none"><rect x="2465" y="1725.5" width="19.5" height="18.5"/><path d="M2471.5 1725.5 L2471.5 1744 M2478 1725.5 L2478 1744 M2465 1731.7 L2484.5 1731.7 M2465 1737.9 L2484.5 1737.9"/></g>
<g stroke="#f0f0f0" stroke-width="1.7" fill="none"><rect x="2524.5" y="1725.5" width="21" height="18.5"/><rect x="2529" y="1729.5" width="12" height="10.5"/><path d="M2531.5 1732.5 L2538.5 1732.5 M2531.5 1735 L2538.5 1735 M2531.5 1737.5 L2538.5 1737.5" stroke-width="1"/></g>
<g stroke="#f0f0f0" stroke-width="1.7" fill="none"><path d="M2584.5 1725.5 L2605.5 1725.5 L2605.5 1744 L2584.5 1744 Z M2590 1725.5 L2590 1735 L2597 1735 L2597 1725.5"/></g>
<path d="M2633 1734.5 L2645 1734.5" stroke="#d0d0d0" stroke-width="1.5"/>
<path d="M2653 1734.8 L2801 1734.8" stroke="#bdbdbd" stroke-width="1.8"/>
<rect x="2723" y="1726" width="8" height="17" rx="1" fill="#bdbdbd"/>
<path d="M2809 1734.5 L2822 1734.5 M2815.5 1728 L2815.5 1741" stroke="#e0e0e0" stroke-width="1.5"/>
<text x="2840.0" y="1741.5" font-family="'Liberation Sans', sans-serif" font-size="16.5" fill="#f0f0f0" text-anchor="start" textLength="39.5" lengthAdjust="spacingAndGlyphs">100%</text>
</svg>
</body></html>
